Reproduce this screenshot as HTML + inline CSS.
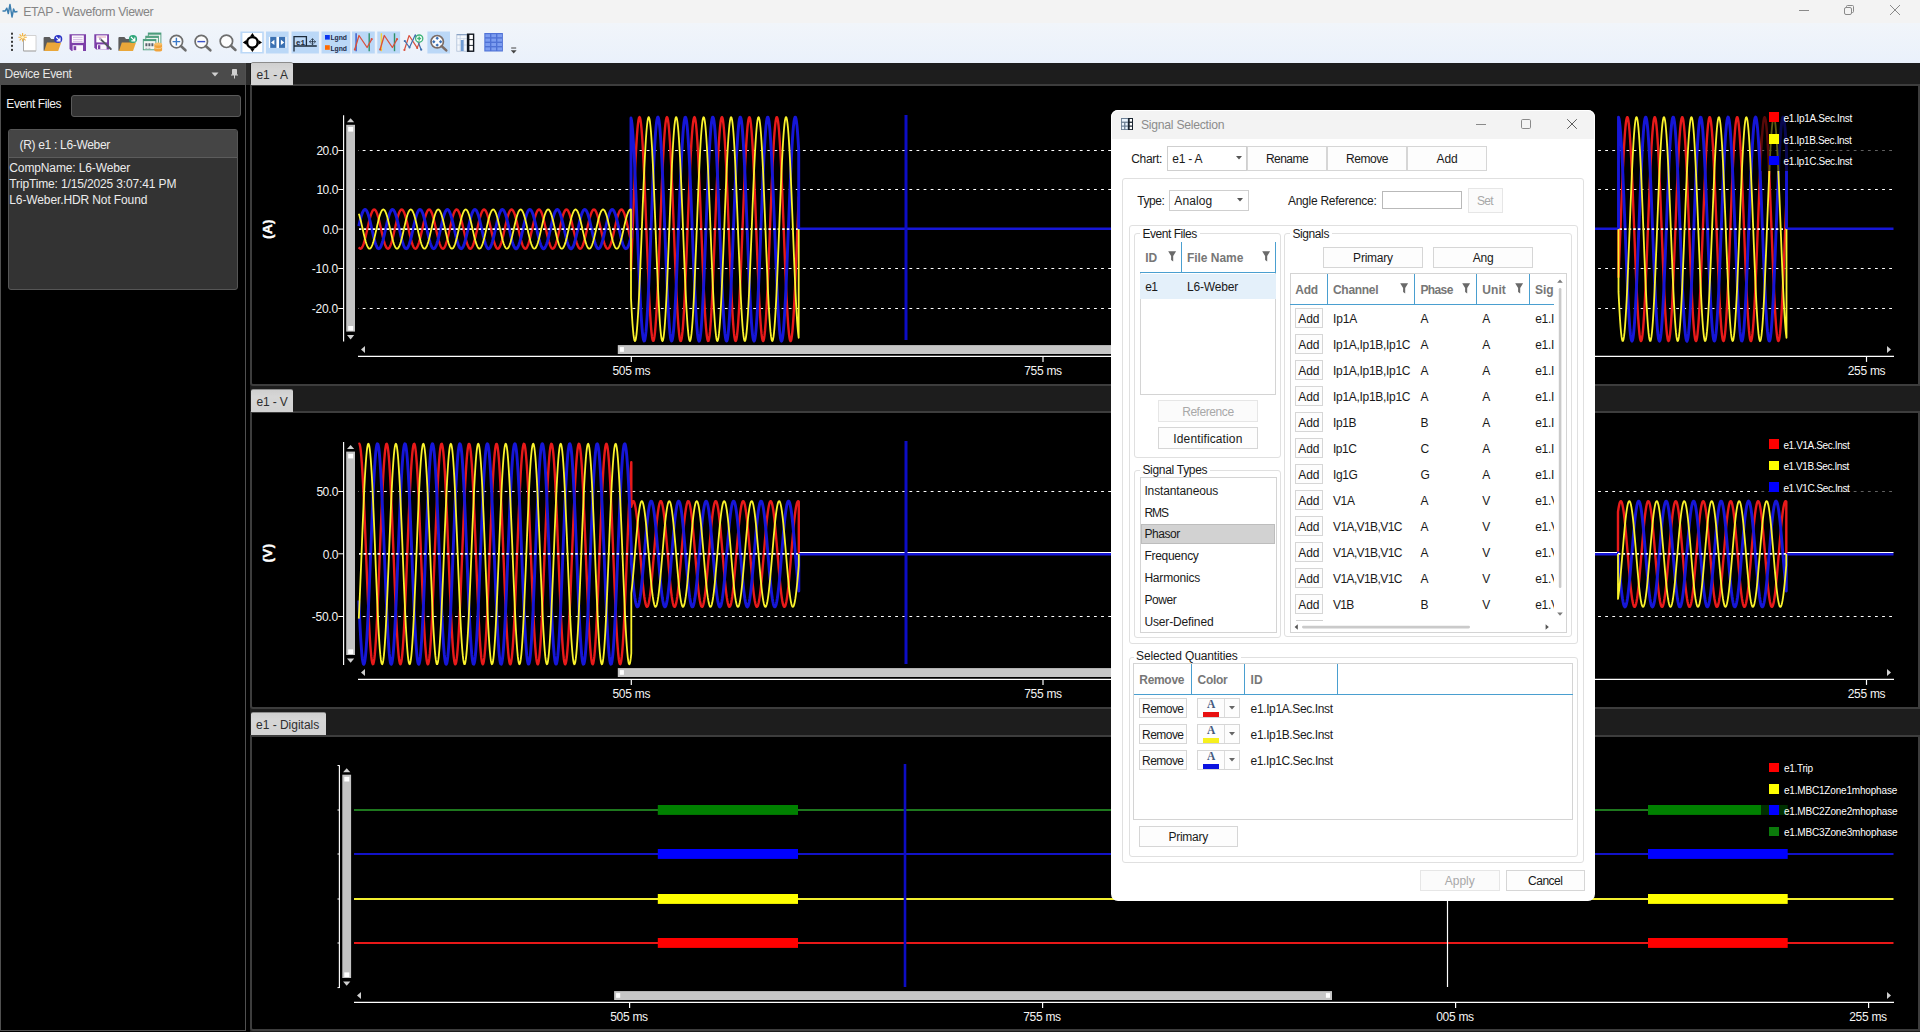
<!DOCTYPE html>
<html><head><meta charset="utf-8"><title>ETAP - Waveform Viewer</title>
<style>
*{box-sizing:border-box;margin:0;padding:0}
html,body{width:1920px;height:1032px;overflow:hidden;background:#000;font-family:"Liberation Sans",sans-serif;font-size:12px;color:#000}
.a{position:absolute}
.t{position:absolute;white-space:nowrap;line-height:1}
svg{position:absolute;overflow:visible}
</style></head>
<body>
<div class="a" style="left:0;top:0;width:1920px;height:23px;background:#f3f3f3"></div>
<div class="a" style="left:0;top:23px;width:1920px;height:40px;background:linear-gradient(#f1f5fa,#eaf1fb)"></div>
<svg style="left:2px;top:3px" width="16" height="16" viewBox="0 0 16 16"><path d="M0.5 8 H3.2 L4.8 5.2 L6.3 10.5 L8 1.5 L10 14 L11.6 6 L12.8 9 L15.5 8.6" fill="none" stroke="#3d7fb0" stroke-width="1.5" stroke-linejoin="round"/></svg>
<div class="t" style="left:23.3px;top:6px;font-size:12.3px;color:#858585;letter-spacing:-0.376px;">ETAP - Waveform Viewer</div>
<svg style="left:1790px;top:0" width="130" height="24" viewBox="0 0 130 24"><g stroke="#8a8a8a" stroke-width="1" fill="none"><path d="M9 10.5 H19"/><rect x="54.5" y="7.5" width="7" height="7" rx="1.5"/><path d="M56.5 7.5 V6.5 Q56.5 5.5 57.5 5.5 H62.5 Q63.5 5.5 63.5 6.5 V11.5 Q63.5 12.5 62.5 12.5 H61.5"/><path d="M100 5 L110 15 M110 5 L100 15"/></g></svg>
<svg style="left:0;top:0" width="540" height="63" viewBox="0 0 540 63"><rect x="11" y="32.7" width="2" height="2" fill="#3a3a3a"/><rect x="11" y="36.7" width="2" height="2" fill="#3a3a3a"/><rect x="11" y="40.8" width="2" height="2" fill="#3a3a3a"/><rect x="11" y="44.8" width="2" height="2" fill="#3a3a3a"/><rect x="11" y="48.9" width="2" height="2" fill="#3a3a3a"/><path d="M23.5 35.5 H36 V51 H23.5 Z" fill="#fff" stroke="#cdcdcd" stroke-width="0.9"/><path d="M23.5 39 V51 H36" fill="none" stroke="#a9a9a9" stroke-width="1"/><path d="M22.6 33 V41.6 M18.4 37.3 H26.8 M19.6 34.3 L25.6 40.3 M25.6 34.3 L19.6 40.3" stroke="#f3b23e" stroke-width="1.1"/><circle cx="22.6" cy="37.3" r="1.4" fill="#fff3c4"/><path d="M43.6 38 q0 -1 1 -1 h5 l1.6 2 h6.4 v11.8 h-14 Z" fill="#5c5c5c"/><path d="M44.2 50.9 L47.0 42.6 H61.2 L58.2 50.9 Z" fill="#eaa73a"/><circle cx="58.2" cy="39" r="4.1" fill="#2b35c6"/><path d="M56.2 37 L59.5 40.3 M60.0 37.4 V40.8 H56.6" stroke="#fff" stroke-width="1.2" fill="none"/><path d="M69.5 34.2 H86 V51 H71.6 L69.5 48.9 Z" fill="#7d3fa8"/><rect x="71.8" y="35.4" width="12" height="7.4" fill="#fff"/><path d="M73 37.3 H82.6 M73 39.4 H82.6 M73 41.3 H82.6" stroke="#c9a9dc" stroke-width="0.8"/><rect x="72.6" y="45.2" width="10.4" height="5.8" fill="#fbf7fd"/><rect x="73.6" y="46.2" width="2.6" height="4" fill="#7d3fa8"/><path d="M94.3 34.2 H109 V49.4 H96.2 L94.3 47.5 Z" fill="#7d3fa8"/><rect x="96.3" y="35.4" width="10.8" height="7" fill="#fff"/><path d="M97.4 37 H106 " stroke="#e39ab0" stroke-width="0.9"/><rect x="97" y="44.4" width="9.6" height="5" fill="#fbf7fd"/><rect x="98" y="45.2" width="2.3" height="3.8" fill="#7d3fa8"/><path d="M100 38.6 L110.8 49" stroke="#55595f" stroke-width="1.9" stroke-linecap="round"/><path d="M99.3 38 L101 39.6" stroke="#c9a9dc" stroke-width="1.6"/><path d="M118.4 38 q0 -1 1 -1 h5 l1.6 2 h6.4 v11.8 h-14 Z" fill="#5c5c5c"/><path d="M119.0 50.9 L121.80000000000001 42.6 H136.0 L133.0 50.9 Z" fill="#eaa73a"/><circle cx="133.0" cy="39" r="4.1" fill="#2fa57a"/><path d="M131.0 37 L134.3 40.3 M134.8 37.4 V40.8 H131.4" stroke="#fff" stroke-width="1.2" fill="none"/><rect x="148.3" y="33" width="12.6" height="10.4" fill="#f4f6f5" stroke="#4b9c7b" stroke-width="0.9"/><rect x="148.3" y="33" width="12.6" height="1.7" fill="#4b9c7b"/><rect x="145.8" y="36.2" width="12.6" height="10.4" fill="#f4f6f5" stroke="#4b9c7b" stroke-width="0.9"/><rect x="145.8" y="36.2" width="12.6" height="1.7" fill="#4b9c7b"/><rect x="143.3" y="39.4" width="12.6" height="10.4" fill="#f4f6f5" stroke="#4b9c7b" stroke-width="0.9"/><rect x="143.3" y="39.4" width="12.6" height="1.7" fill="#4b9c7b"/><path d="M145.4 43.2 h2 v3 h-2 Z M148.4 43.2 h2 v3 h-2 Z M151.4 43.2 h2 v3 h-2 Z" fill="#58606a"/><path d="M145.4 47.8 h2 v1.3 h-2 Z M148.4 47.8 h2 v1.3 h-2 Z" fill="#b9bec4"/><path d="M154.3 44 v6 a3.9 1.6 0 0 0 7.8 0 v-6 Z" fill="#f1a33c"/><ellipse cx="158.2" cy="44" rx="3.9" ry="1.6" fill="#f7bf6a"/><path d="M154.3 47 a3.9 1.6 0 0 0 7.8 0" fill="none" stroke="#fbd9a0" stroke-width="0.7"/><circle cx="176.4" cy="41.6" r="6.2" fill="#fdfdfd" stroke="#6e6e6e" stroke-width="1.7"/><path d="M180.864 46.064 L185.464 50.264" stroke="#6e6e6e" stroke-width="2.6" stroke-linecap="round"/><path d="M172.6 41.6 H180.2 M176.4 37.8 V45.4" stroke="#3b7ac8" stroke-width="1.4"/><circle cx="201.3" cy="41.6" r="6.2" fill="#fdfdfd" stroke="#6e6e6e" stroke-width="1.7"/><path d="M205.764 46.064 L210.364 50.264" stroke="#6e6e6e" stroke-width="2.6" stroke-linecap="round"/><path d="M197.4 41.6 H205.2" stroke="#3b52c8" stroke-width="1.4"/><circle cx="226.4" cy="41.3" r="6.2" fill="#fdfdfd" stroke="#6e6e6e" stroke-width="1.7"/><path d="M230.864 45.763999999999996 L235.464 49.964" stroke="#6e6e6e" stroke-width="2.6" stroke-linecap="round"/><rect x="240.4" y="31.5" width="23.4" height="22" fill="#bbd8f7"/><rect x="242.4" y="33" width="19.8" height="19" fill="#fff"/><circle cx="252.4" cy="42.4" r="5.3" fill="none" stroke="#000" stroke-width="2.4"/><path d="M252.4 32.9 l2.4 3.5 h-4.8 Z M252.4 52 l2.4 -3.5 h-4.8 Z M242.8 42.4 l3.5 -2.4 v4.8 Z M262 42.4 l-3.5 -2.4 v4.8 Z" fill="#000"/><rect x="266" y="31.5" width="22.6" height="22" fill="#bbd8f7"/><rect x="268.9" y="36.9" width="17.6" height="11" fill="#fff"/><rect x="270.2" y="36.9" width="6.2" height="11" fill="#3a70b2"/><rect x="279" y="36.9" width="6.2" height="11" fill="#3a70b2"/><path d="M271 42.4 l3.4 -2.7 v5.4 Z M284.3 42.4 l-3.4 -2.7 v5.4 Z" fill="#fff"/><rect x="291.5" y="31.5" width="27.4" height="22" fill="#bbd8f7"/><path d="M294 51.5 V36.7 H306.4 V46 M294 46 H316.8" fill="none" stroke="#1c2a3a" stroke-width="1.3"/><text x="296" y="44.6" font-family="Liberation Mono" font-size="7.5" font-weight="bold" fill="#1c2a3a">e1</text><path d="M309.6 41.7 H315.4 M312.5 38.8 V44.6 M311.3 39.9 L312.5 38.6 L313.7 39.9 M311.3 43.5 L312.5 44.8 L313.7 43.5 M310.7 40.5 L309.4 41.7 L310.7 42.9 M314.3 40.5 L315.6 41.7 L314.3 42.9" stroke="#1c2a3a" stroke-width="0.8" fill="none"/><rect x="321.5" y="31.5" width="28.8" height="22" fill="#bbd8f7"/><rect x="325" y="35" width="4.8" height="4.6" fill="#0a35f0"/><rect x="325" y="45.2" width="4.8" height="4.6" fill="#ff6a00"/><text x="330.4" y="40.4" font-family="Liberation Sans" font-size="7.6" font-weight="bold" fill="#1b2b4a" textLength="16.6" lengthAdjust="spacingAndGlyphs">Lgnd</text><text x="330.4" y="50.6" font-family="Liberation Sans" font-size="7.6" font-weight="bold" fill="#1b2b4a" textLength="16.6" lengthAdjust="spacingAndGlyphs">Lgnd</text><rect x="352" y="31.5" width="22.8" height="22" fill="#bbd8f7"/><path d="M356.1 33.3 V51.2" stroke="#3558c8" stroke-width="1.4"/><path d="M369.2 33.3 V51.2" stroke="#2f8f6a" stroke-width="1.4"/><path d="M354.7 49.7 L359 35.5 L367.1 47.5 L371.8 39.1" fill="none" stroke="#d9503c" stroke-width="1.3" stroke-linejoin="round"/><circle cx="354.9" cy="49.6" r="1.1" fill="#d9503c"/><circle cx="371.7" cy="39.2" r="1.1" fill="#d9503c"/><rect x="377.3" y="31.5" width="22.8" height="22" fill="#bbd8f7"/><path d="M381.40000000000003 33.3 V51.2" stroke="#f4d33c" stroke-width="1.4"/><path d="M394.5 33.3 V51.2" stroke="#2f8f6a" stroke-width="1.4"/><path d="M380.0 49.7 L384.3 35.5 L392.40000000000003 47.5 L397.1 39.1" fill="none" stroke="#d9503c" stroke-width="1.3" stroke-linejoin="round"/><circle cx="380.2" cy="49.6" r="1.1" fill="#d9503c"/><circle cx="397.0" cy="39.2" r="1.1" fill="#d9503c"/><path d="M404.4 50 L409.1 35.5 L417.2 47.9 L420.4 39.9" fill="none" stroke="#d9503c" stroke-width="1.2" stroke-linejoin="round"/><path d="M404.8 41 L409.5 47.5 L415.3 34.8 L421.2 49.7" fill="none" stroke="#3f6fae" stroke-width="1.2" stroke-linejoin="round"/><circle cx="404.4" cy="50" r="1.1" fill="#d9503c"/><circle cx="404.8" cy="41" r="1.1" fill="#3f6fae"/><circle cx="421.2" cy="49.7" r="1.1" fill="#3f6fae"/><circle cx="409.5" cy="47.5" r="1" fill="#3f6fae"/><circle cx="417.2" cy="47.9" r="1" fill="#d9503c"/><circle cx="419.2" cy="38.6" r="3.6" fill="#fff" stroke="#3fb47a" stroke-width="1.3"/><path d="M417.2 38.6 H421.2 M419.2 36.6 V40.6" stroke="#3fb47a" stroke-width="1.5"/><rect x="427.4" y="31.5" width="22.6" height="22" fill="#bbd8f7"/><circle cx="437.2" cy="41.7" r="6.2" fill="#fdfdfd" stroke="#7b6c66" stroke-width="1.7"/><path d="M441.664 46.164 L446.264 50.364000000000004" stroke="#7b6c66" stroke-width="2.6" stroke-linecap="round"/><path d="M437.2 36.599999999999994 l1.7 1.7 l-1.7 1.7 l-1.7 -1.7 Z" fill="#3a6fb5"/><path d="M437.2 43.4 l1.7 1.7 l-1.7 1.7 l-1.7 -1.7 Z" fill="#3a6fb5"/><path d="M433.8 40.0 l1.7 1.7 l-1.7 1.7 l-1.7 -1.7 Z" fill="#3a6fb5"/><path d="M440.6 40.0 l1.7 1.7 l-1.7 1.7 l-1.7 -1.7 Z" fill="#3a6fb5"/><rect x="456.8" y="34.4" width="10.4" height="16.8" fill="#f3f7fc" stroke="#aebfd6" stroke-width="0.8"/><path d="M456.8 38.6 H467 M456.8 45 H467 M460.2 34.4 V51 M463.8 38.6 V51" stroke="#c5d3e6" stroke-width="0.8"/><rect x="460.8" y="40" width="2.8" height="11" fill="#6f9bd2"/><rect x="456.8" y="34" width="10.4" height="1.3" fill="#8aa3c4"/><rect x="467.6" y="34.2" width="6" height="17" fill="#fff" stroke="#10161e" stroke-width="1.4"/><rect x="467" y="34" width="2.4" height="17.6" fill="#10161e"/><path d="M469 39.6 H474 M469 45.4 H474" stroke="#10161e" stroke-width="0.9"/><rect x="484.3" y="33" width="18.6" height="18.5" fill="#4f72d6"/><rect x="485.4" y="34.2" width="4.6" height="3" fill="#7d9df0"/><rect x="491.4" y="34.2" width="4.6" height="3" fill="#7d9df0"/><rect x="497.4" y="34.2" width="4.6" height="3" fill="#7d9df0"/><rect x="485.4" y="38.6" width="4.6" height="3" fill="#7d9df0"/><rect x="491.4" y="38.6" width="4.6" height="3" fill="#7d9df0"/><rect x="497.4" y="38.6" width="4.6" height="3" fill="#7d9df0"/><rect x="485.4" y="43.0" width="4.6" height="3" fill="#7d9df0"/><rect x="491.4" y="43.0" width="4.6" height="3" fill="#7d9df0"/><rect x="497.4" y="43.0" width="4.6" height="3" fill="#7d9df0"/><rect x="485.4" y="47.400000000000006" width="4.6" height="3" fill="#7d9df0"/><rect x="491.4" y="47.400000000000006" width="4.6" height="3" fill="#7d9df0"/><rect x="497.4" y="47.400000000000006" width="4.6" height="3" fill="#7d9df0"/><path d="M511.2 48 H516.2" stroke="#444" stroke-width="1"/><path d="M510.8 50.3 H516.6 L513.7 53.6 Z" fill="#444"/></svg>
<div class="a" style="left:0;top:63px;width:1920px;height:969px;background:#000"></div>
<div class="a" style="left:0;top:63px;width:246px;height:968px;border:1px solid #505050;border-top:none;background:#000"></div>
<div class="a" style="left:0;top:63px;width:245px;height:21.5px;background:#4b4b4b"></div>
<div class="a" style="left:246px;top:63px;width:4.5px;height:22px;background:#2a2a2a"></div>
<div class="t" style="left:4.6px;top:68px;font-size:12px;color:#e6e6e6;letter-spacing:-0.309px;">Device Event</div>
<svg style="left:210px;top:68px" width="32" height="14" viewBox="0 0 32 14"><path d="M1.5 4.5 H8.5 L5 8.5 Z" fill="#d0d0d0"/><path d="M22.5 1.5 H26.5 V6.5 H22.5 Z M21 7 H28 M24.5 7 V10.5" fill="#d0d0d0" stroke="#d0d0d0" stroke-width="1"/></svg>
<div class="t" style="left:6.3px;top:98px;font-size:12px;color:#f0f0f0;letter-spacing:-0.414px;">Event Files</div>
<div class="a" style="left:71px;top:95px;width:169.5px;height:21.5px;background:#333;border:1px solid #5a5a5a;border-radius:3px"></div>
<div class="a" style="left:8px;top:129px;width:230px;height:160.5px;background:#333;border:1px solid #565656;border-radius:3px"></div>
<div class="a" style="left:9px;top:130px;width:228px;height:28px;background:#454545;border-bottom:1px solid #5c5c5c;border-radius:2px 2px 0 0"></div>
<div class="t" style="left:19.5px;top:139px;font-size:12px;color:#ececec;letter-spacing:-0.312px;">(R) e1 : L6-Weber</div>
<div class="t" style="left:9.3px;top:162px;font-size:12px;color:#ececec;letter-spacing:-0.126px;">CompName: L6-Weber</div>
<div class="t" style="left:9.3px;top:178px;font-size:12px;color:#ececec;letter-spacing:-0.140px;">TripTime: 1/15/2025 3:07:41 PM</div>
<div class="t" style="left:9.3px;top:194px;font-size:12px;color:#ececec;letter-spacing:-0.114px;">L6-Weber.HDR Not Found</div>
<div class="a" style="left:250px;top:63px;width:1670px;height:969px;background:#1d1d1d"></div>
<div class="a" style="left:250px;top:84px;width:1670px;height:302px;border:2px solid #3d3d3d;background:#000;border-radius:0 0 0 3px"></div>
<div class="a" style="left:250px;top:411px;width:1670px;height:297.5px;border:2px solid #3d3d3d;background:#000;border-radius:0 0 0 3px"></div>
<div class="a" style="left:250px;top:734.5px;width:1670px;height:296.0px;border:2px solid #3d3d3d;background:#000;border-radius:0 0 0 3px"></div>
<div class="a" style="left:251px;top:61.5px;width:42px;height:23.5px;background:linear-gradient(#cfcfcf,#d6d6d6 30%,#d2d2d2);border-top:1px solid #8c8c8c;border-radius:2px 2px 0 0"></div><div class="t" style="left:256.4px;top:69px;font-size:12px;color:#2e2e2e;letter-spacing:0.040px;">e1 - A</div>
<div class="a" style="left:251px;top:388.7px;width:42px;height:23.3px;background:linear-gradient(#cfcfcf,#d6d6d6 30%,#d2d2d2);border-top:1px solid #8c8c8c;border-radius:2px 2px 0 0"></div><div class="t" style="left:256.4px;top:396px;font-size:12px;color:#2e2e2e;letter-spacing:-0.119px;">e1 - V</div>
<div class="a" style="left:251px;top:711.7px;width:74.5px;height:23.5px;background:linear-gradient(#cfcfcf,#d6d6d6 30%,#d2d2d2);border-top:1px solid #8c8c8c;border-radius:2px 2px 0 0"></div><div class="t" style="left:256px;top:719px;font-size:12px;color:#2e2e2e;letter-spacing:-0.012px;">e1 - Digitals</div>
<svg style="left:0;top:0" width="1920" height="1032" viewBox="0 0 1920 1032"><path d="M358 150.5 H1893.5" stroke="#fff" stroke-width="1.05" stroke-dasharray="2.8 4.3" stroke-dashoffset="2.4" fill="none"/>
<path d="M358 189.5 H1893.5" stroke="#fff" stroke-width="1.05" stroke-dasharray="2.8 4.3" stroke-dashoffset="2.4" fill="none"/>
<path d="M358 268.5 H1893.5" stroke="#fff" stroke-width="1.05" stroke-dasharray="2.8 4.3" stroke-dashoffset="2.4" fill="none"/>
<path d="M358 308.5 H1893.5" stroke="#fff" stroke-width="1.05" stroke-dasharray="2.8 4.3" stroke-dashoffset="2.4" fill="none"/>
<path d="M358.8 247.3 L359.3 248.0 L359.8 248.5 L360.3 248.7 L360.8 248.6 L361.3 248.3 L361.8 247.8 L362.3 247.0 L362.8 246.0 L363.3 244.7 L363.8 243.3 L364.3 241.6 L364.8 239.8 L365.3 237.9 L365.8 235.8 L366.3 233.7 L366.8 231.5 L367.3 229.2 L367.8 227.0 L368.3 224.8 L368.8 222.6 L369.3 220.6 L369.8 218.6 L370.3 216.8 L370.8 215.1 L371.3 213.7 L371.8 212.4 L372.3 211.3 L372.8 210.5 L373.3 209.9 L373.8 209.6 L374.3 209.5 L374.8 209.7 L375.3 210.1 L375.8 210.8 L376.3 211.7 L376.8 212.9 L377.3 214.2 L377.8 215.8 L378.3 217.5 L378.8 219.4 L379.3 221.4 L379.8 223.5 L380.3 225.7 L380.8 227.9 L381.3 230.1 L381.8 232.4 L382.3 234.6 L382.8 236.7 L383.3 238.7 L383.8 240.6 L384.3 242.3 L384.8 243.9 L385.3 245.2 L385.8 246.4 L386.3 247.3 L386.8 248.0 L387.3 248.5 L387.8 248.7 L388.3 248.6 L388.8 248.3 L389.3 247.8 L389.8 246.9 L390.3 245.9 L390.8 244.6 L391.3 243.2 L391.8 241.5 L392.3 239.7 L392.8 237.8 L393.3 235.7 L393.8 233.5 L394.3 231.3 L394.8 229.1 L395.3 226.9 L395.8 224.7 L396.3 222.5 L396.8 220.4 L397.3 218.5 L397.8 216.7 L398.3 215.0 L398.8 213.6 L399.3 212.3 L399.8 211.3 L400.3 210.5 L400.8 209.9 L401.3 209.6 L401.8 209.5 L402.3 209.7 L402.8 210.2 L403.3 210.9 L403.8 211.8 L404.3 212.9 L404.8 214.3 L405.3 215.9 L405.8 217.6 L406.3 219.5 L406.8 221.5 L407.3 223.6 L407.8 225.8 L408.3 228.1 L408.8 230.3 L409.3 232.5 L409.8 234.7 L410.3 236.8 L410.8 238.8 L411.3 240.7 L411.8 242.4 L412.3 244.0 L412.8 245.3 L413.3 246.5 L413.8 247.4 L414.3 248.1 L414.8 248.5 L415.3 248.7 L415.8 248.6 L416.3 248.3 L416.8 247.7 L417.3 246.9 L417.8 245.8 L418.3 244.5 L418.8 243.1 L419.3 241.4 L419.8 239.6 L420.3 237.6 L420.8 235.6 L421.3 233.4 L421.8 231.2 L422.3 229.0 L422.8 226.7 L423.3 224.5 L423.8 222.4 L424.3 220.3 L424.8 218.4 L425.3 216.6 L425.8 214.9 L426.3 213.5 L426.8 212.2 L427.3 211.2 L427.8 210.4 L428.3 209.9 L428.8 209.6 L429.3 209.5 L429.8 209.7 L430.3 210.2 L430.8 210.9 L431.3 211.9 L431.8 213.0 L432.3 214.4 L432.8 216.0 L433.3 217.7 L433.8 219.6 L434.3 221.7 L434.8 223.8 L435.3 226.0 L435.8 228.2 L436.3 230.4 L436.8 232.7 L437.3 234.8 L437.8 236.9 L438.3 238.9 L438.8 240.8 L439.3 242.5 L439.8 244.1 L440.3 245.4 L440.8 246.5 L441.3 247.5 L441.8 248.1 L442.3 248.5 L442.8 248.7 L443.3 248.6 L443.8 248.3 L444.3 247.7 L444.8 246.8 L445.3 245.7 L445.8 244.5 L446.3 243.0 L446.8 241.3 L447.3 239.5 L447.8 237.5 L448.3 235.4 L448.8 233.3 L449.3 231.0 L449.8 228.8 L450.3 226.6 L450.8 224.4 L451.3 222.2 L451.8 220.2 L452.3 218.2 L452.8 216.5 L453.3 214.8 L453.8 213.4 L454.3 212.2 L454.8 211.1 L455.3 210.4 L455.8 209.8 L456.3 209.5 L456.8 209.5 L457.3 209.8 L457.8 210.2 L458.3 211.0 L458.8 211.9 L459.3 213.1 L459.8 214.5 L460.3 216.1 L460.8 217.9 L461.3 219.8 L461.8 221.8 L462.3 223.9 L462.8 226.1 L463.3 228.3 L463.8 230.6 L464.3 232.8 L464.8 235.0 L465.3 237.1 L465.8 239.1 L466.3 240.9 L466.8 242.6 L467.3 244.2 L467.8 245.5 L468.3 246.6 L468.8 247.5 L469.3 248.2 L469.8 248.6 L470.3 248.7 L470.8 248.6 L471.3 248.2 L471.8 247.6 L472.3 246.8 L472.8 245.7 L473.3 244.4 L473.8 242.9 L474.3 241.2 L474.8 239.3 L475.3 237.4 L475.8 235.3 L476.3 233.1 L476.8 230.9 L477.3 228.7 L477.8 226.4 L478.3 224.2 L478.8 222.1 L479.3 220.0 L479.8 218.1 L480.3 216.3 L480.8 214.7 L481.3 213.3 L481.8 212.1 L482.3 211.1 L482.8 210.3 L483.3 209.8 L483.8 209.5 L484.3 209.5 L484.8 209.8 L485.3 210.3 L485.8 211.0 L486.3 212.0 L486.8 213.2 L487.3 214.6 L487.8 216.2 L488.3 218.0 L488.8 219.9 L489.3 221.9 L489.8 224.1 L490.3 226.3 L490.8 228.5 L491.3 230.7 L491.8 233.0 L492.3 235.1 L492.8 237.2 L493.3 239.2 L493.8 241.0 L494.3 242.7 L494.8 244.3 L495.3 245.6 L495.8 246.7 L496.3 247.6 L496.8 248.2 L497.3 248.6 L497.8 248.7 L498.3 248.6 L498.8 248.2 L499.3 247.6 L499.8 246.7 L500.3 245.6 L500.8 244.3 L501.3 242.8 L501.8 241.1 L502.3 239.2 L502.8 237.2 L503.3 235.1 L503.8 233.0 L504.3 230.7 L504.8 228.5 L505.3 226.3 L505.8 224.1 L506.3 222.0 L506.8 219.9 L507.3 218.0 L507.8 216.2 L508.3 214.6 L508.8 213.2 L509.3 212.0 L509.8 211.0 L510.3 210.3 L510.8 209.8 L511.3 209.5 L511.8 209.5 L512.3 209.8 L512.8 210.3 L513.3 211.1 L513.8 212.1 L514.3 213.3 L514.8 214.7 L515.3 216.3 L515.8 218.1 L516.3 220.0 L516.8 222.1 L517.3 224.2 L517.8 226.4 L518.3 228.6 L518.8 230.9 L519.3 233.1 L519.8 235.3 L520.3 237.3 L520.8 239.3 L521.3 241.2 L521.8 242.8 L522.3 244.4 L522.8 245.7 L523.3 246.7 L523.8 247.6 L524.3 248.2 L524.8 248.6 L525.3 248.7 L525.8 248.6 L526.3 248.2 L526.8 247.5 L527.3 246.6 L527.8 245.5 L528.3 244.2 L528.8 242.6 L529.3 240.9 L529.8 239.1 L530.3 237.1 L530.8 235.0 L531.3 232.8 L531.8 230.6 L532.3 228.4 L532.8 226.1 L533.3 223.9 L533.8 221.8 L534.3 219.8 L534.8 217.9 L535.3 216.1 L535.8 214.5 L536.3 213.1 L536.8 211.9 L537.3 211.0 L537.8 210.2 L538.3 209.8 L538.8 209.5 L539.3 209.5 L539.8 209.8 L540.3 210.4 L540.8 211.1 L541.3 212.1 L541.8 213.4 L542.3 214.8 L542.8 216.4 L543.3 218.2 L543.8 220.2 L544.3 222.2 L544.8 224.4 L545.3 226.6 L545.8 228.8 L546.3 231.0 L546.8 233.2 L547.3 235.4 L547.8 237.5 L548.3 239.4 L548.8 241.3 L549.3 243.0 L549.8 244.4 L550.3 245.7 L550.8 246.8 L551.3 247.7 L551.8 248.3 L552.3 248.6 L552.8 248.7 L553.3 248.5 L553.8 248.1 L554.3 247.5 L554.8 246.6 L555.3 245.4 L555.8 244.1 L556.3 242.5 L556.8 240.8 L557.3 239.0 L557.8 237.0 L558.3 234.9 L558.8 232.7 L559.3 230.5 L559.8 228.2 L560.3 226.0 L560.8 223.8 L561.3 221.7 L561.8 219.7 L562.3 217.8 L562.8 216.0 L563.3 214.4 L563.8 213.0 L564.3 211.9 L564.8 210.9 L565.3 210.2 L565.8 209.7 L566.3 209.5 L566.8 209.6 L567.3 209.9 L567.8 210.4 L568.3 211.2 L568.8 212.2 L569.3 213.5 L569.8 214.9 L570.3 216.6 L570.8 218.4 L571.3 220.3 L571.8 222.4 L572.3 224.5 L572.8 226.7 L573.3 228.9 L573.8 231.2 L574.3 233.4 L574.8 235.5 L575.3 237.6 L575.8 239.6 L576.3 241.4 L576.8 243.1 L577.3 244.5 L577.8 245.8 L578.3 246.9 L578.8 247.7 L579.3 248.3 L579.8 248.6 L580.3 248.7 L580.8 248.5 L581.3 248.1 L581.8 247.4 L582.3 246.5 L582.8 245.3 L583.3 244.0 L583.8 242.4 L584.3 240.7 L584.8 238.8 L585.3 236.8 L585.8 234.7 L586.3 232.5 L586.8 230.3 L587.3 228.1 L587.8 225.8 L588.3 223.7 L588.8 221.5 L589.3 219.5 L589.8 217.6 L590.3 215.9 L590.8 214.3 L591.3 213.0 L591.8 211.8 L592.3 210.9 L592.8 210.2 L593.3 209.7 L593.8 209.5 L594.3 209.6 L594.8 209.9 L595.3 210.4 L595.8 211.3 L596.3 212.3 L596.8 213.6 L597.3 215.0 L597.8 216.7 L598.3 218.5 L598.8 220.4 L599.3 222.5 L599.8 224.6 L600.3 226.9 L600.8 229.1 L601.3 231.3 L601.8 233.5 L602.3 235.7 L602.8 237.7 L603.3 239.7 L603.8 241.5 L604.3 243.2 L604.8 244.6 L605.3 245.9 L605.8 246.9 L606.3 247.7 L606.8 248.3 L607.3 248.6 L607.8 248.7 L608.3 248.5 L608.8 248.0 L609.3 247.4 L609.8 246.4 L610.3 245.3 L610.8 243.9 L611.3 242.3 L611.8 240.6 L612.3 238.7 L612.8 236.7 L613.3 234.6 L613.8 232.4 L614.3 230.2 L614.8 227.9 L615.3 225.7 L615.8 223.5 L616.3 221.4 L616.8 219.4 L617.3 217.5 L617.8 215.8 L618.3 214.2 L618.8 212.9 L619.3 211.7 L619.8 210.8 L620.3 210.1 L620.8 209.7 L621.3 209.5 L621.8 209.6 L622.3 209.9 L622.8 210.5 L623.3 211.3 L623.8 212.4 L624.3 213.6 L624.8 215.1 L625.3 216.8 L625.8 218.6 L626.3 220.6 L626.8 222.6 L627.3 224.8 L627.8 227.0 L628.3 229.2 L628.8 231.5 L629.3 233.7 L629.8 235.8 L630.3 237.9 L630.8 239.8 L631.0 240.6 L631.0 270.0 L631.5 257.8 L632.0 245.3 L632.5 232.5 L633.0 219.7 L633.5 207.0 L634.0 194.7 L634.5 182.7 L635.0 171.4 L635.5 160.8 L636.0 151.1 L636.5 142.5 L637.0 134.9 L637.5 128.6 L638.0 123.6 L638.5 120.0 L639.0 117.8 L639.5 117.1 L640.0 117.8 L640.5 120.0 L641.0 123.6 L641.5 128.6 L642.0 134.9 L642.5 142.5 L643.0 151.1 L643.5 160.8 L644.0 171.4 L644.5 182.7 L645.0 194.7 L645.5 207.0 L646.0 219.7 L646.5 232.5 L647.0 245.3 L647.5 257.8 L648.0 270.0 L648.5 281.6 L649.0 292.6 L649.5 302.7 L650.0 311.8 L650.5 319.9 L651.0 326.8 L651.5 332.4 L652.0 336.7 L652.5 339.5 L653.0 340.9 L653.5 340.9 L654.0 339.4 L654.5 336.4 L655.0 332.1 L655.5 326.4 L656.0 319.4 L656.5 311.3 L657.0 302.0 L657.5 291.9 L658.0 280.9 L658.5 269.2 L659.0 257.0 L659.5 244.4 L660.0 231.7 L660.5 218.9 L661.0 206.2 L661.5 193.8 L662.0 181.9 L662.5 170.7 L663.0 160.1 L663.5 150.5 L664.0 141.9 L664.5 134.5 L665.0 128.2 L665.5 123.3 L666.0 119.8 L666.5 117.7 L667.0 117.1 L667.5 117.9 L668.0 120.2 L668.5 123.9 L669.0 129.0 L669.5 135.4 L670.0 143.0 L670.5 151.7 L671.0 161.5 L671.5 172.1 L672.0 183.5 L672.5 195.5 L673.0 207.9 L673.5 220.6 L674.0 233.4 L674.5 246.1 L675.0 258.6 L675.5 270.8 L676.0 282.4 L676.5 293.3 L677.0 303.3 L677.5 312.4 L678.0 320.4 L678.5 327.2 L679.0 332.7 L679.5 336.9 L680.0 339.7 L680.5 341.0 L681.0 340.8 L681.5 339.2 L682.0 336.2 L682.5 331.7 L683.0 326.0 L683.5 318.9 L684.0 310.7 L684.5 301.4 L685.0 291.2 L685.5 280.1 L686.0 268.4 L686.5 256.2 L687.0 243.6 L687.5 230.8 L688.0 218.0 L688.5 205.4 L689.0 193.0 L689.5 181.2 L690.0 169.9 L690.5 159.5 L691.0 149.9 L691.5 141.4 L692.0 134.0 L692.5 127.9 L693.0 123.1 L693.5 119.6 L694.0 117.7 L694.5 117.1 L695.0 118.0 L695.5 120.4 L696.0 124.2 L696.5 129.4 L697.0 135.8 L697.5 143.5 L698.0 152.3 L698.5 162.2 L699.0 172.8 L699.5 184.3 L700.0 196.3 L700.5 208.7 L701.0 221.4 L701.5 234.2 L702.0 246.9 L702.5 259.4 L703.0 271.5 L703.5 283.1 L704.0 293.9 L704.5 303.9 L705.0 313.0 L705.5 320.9 L706.0 327.6 L706.5 333.1 L707.0 337.1 L707.5 339.8 L708.0 341.0 L708.5 340.8 L709.0 339.1 L709.5 335.9 L710.0 331.4 L710.5 325.5 L711.0 318.4 L711.5 310.1 L712.0 300.7 L712.5 290.5 L713.0 279.4 L713.5 267.6 L714.0 255.4 L714.5 242.8 L715.0 230.0 L715.5 217.2 L716.0 204.6 L716.5 192.2 L717.0 180.4 L717.5 169.2 L718.0 158.8 L718.5 149.3 L719.0 140.9 L719.5 133.6 L720.0 127.5 L720.5 122.8 L721.0 119.5 L721.5 117.6 L722.0 117.1 L722.5 118.1 L723.0 120.6 L723.5 124.5 L724.0 129.8 L724.5 136.3 L725.0 144.1 L725.5 153.0 L726.0 162.8 L726.5 173.6 L727.0 185.0 L727.5 197.1 L728.0 209.5 L728.5 222.2 L729.0 235.0 L729.5 247.8 L730.0 260.3 L730.5 272.3 L731.0 283.8 L731.5 294.6 L732.0 304.6 L732.5 313.5 L733.0 321.4 L733.5 328.0 L734.0 333.4 L734.5 337.3 L735.0 339.9 L735.5 341.0 L736.0 340.7 L736.5 338.9 L737.0 335.7 L737.5 331.1 L738.0 325.1 L738.5 317.9 L739.0 309.5 L739.5 300.1 L740.0 289.7 L740.5 278.6 L741.0 266.8 L741.5 254.5 L742.0 241.9 L742.5 229.1 L743.0 216.3 L743.5 203.7 L744.0 191.4 L744.5 179.7 L745.0 168.5 L745.5 158.2 L746.0 148.7 L746.5 140.4 L747.0 133.1 L747.5 127.2 L748.0 122.5 L748.5 119.3 L749.0 117.5 L749.5 117.2 L750.0 118.3 L750.5 120.8 L751.0 124.8 L751.5 130.2 L752.0 136.8 L752.5 144.6 L753.0 153.6 L753.5 163.5 L754.0 174.3 L754.5 185.8 L755.0 197.9 L755.5 210.4 L756.0 223.1 L756.5 235.9 L757.0 248.6 L757.5 261.1 L758.0 273.1 L758.5 284.6 L759.0 295.3 L759.5 305.2 L760.0 314.1 L760.5 321.8 L761.0 328.4 L761.5 333.7 L762.0 337.6 L762.5 340.0 L763.0 341.1 L763.5 340.6 L764.0 338.7 L764.5 335.4 L765.0 330.7 L765.5 324.7 L766.0 317.4 L766.5 308.9 L767.0 299.4 L767.5 289.0 L768.0 277.8 L768.5 266.0 L769.0 253.7 L769.5 241.1 L770.0 228.3 L770.5 215.5 L771.0 202.9 L771.5 190.7 L772.0 178.9 L772.5 167.8 L773.0 157.5 L773.5 148.1 L774.0 139.8 L774.5 132.7 L775.0 126.8 L775.5 122.3 L776.0 119.1 L776.5 117.4 L777.0 117.2 L777.5 118.4 L778.0 121.1 L778.5 125.1 L779.0 130.6 L779.5 137.3 L780.0 145.2 L780.5 154.2 L781.0 164.2 L781.5 175.0 L782.0 186.6 L782.5 198.7 L783.0 211.2 L783.5 223.9 L784.0 236.7 L784.5 249.4 L785.0 261.9 L785.5 273.9 L786.0 285.3 L786.5 296.0 L787.0 305.8 L787.5 314.6 L788.0 322.3 L788.5 328.8 L789.0 334.0 L789.5 337.8 L790.0 340.2 L790.5 341.1 L791.0 340.6 L791.5 338.6 L792.0 335.1 L792.5 330.3 L793.0 324.2 L793.5 316.8 L794.0 308.3 L794.5 298.8 L795.0 288.3 L795.5 277.1 L796.0 265.2 L796.5 252.9 L797.0 240.2 L797.5 227.4 L798.0 214.7 L798.5 202.1 L798.7 197.1 L798.7 229.1 M1618.5 229.1 L1618.5 277.0 L1619.0 265.2 L1619.5 252.8 L1620.0 240.2 L1620.5 227.4 L1621.0 214.6 L1621.5 202.0 L1622.0 189.8 L1622.5 178.1 L1623.0 167.1 L1623.5 156.8 L1624.0 147.5 L1624.5 139.3 L1625.0 132.2 L1625.5 126.5 L1626.0 122.0 L1626.5 119.0 L1627.0 117.4 L1627.5 117.2 L1628.0 118.5 L1628.5 121.3 L1629.0 125.5 L1629.5 131.0 L1630.0 137.8 L1630.5 145.8 L1631.0 154.9 L1631.5 164.9 L1632.0 175.8 L1632.5 187.4 L1633.0 199.6 L1633.5 212.1 L1634.0 224.8 L1634.5 237.6 L1635.0 250.3 L1635.5 262.7 L1636.0 274.7 L1636.5 286.1 L1637.0 296.7 L1637.5 306.5 L1638.0 315.2 L1638.5 322.8 L1639.0 329.2 L1639.5 334.3 L1640.0 338.0 L1640.5 340.3 L1641.0 341.1 L1641.5 340.5 L1642.0 338.4 L1642.5 334.9 L1643.0 330.0 L1643.5 323.7 L1644.0 316.3 L1644.5 307.7 L1645.0 298.1 L1645.5 287.6 L1646.0 276.3 L1646.5 264.4 L1647.0 252.0 L1647.5 239.3 L1648.0 226.5 L1648.5 213.8 L1649.0 201.2 L1649.5 189.0 L1650.0 177.3 L1650.5 166.4 L1651.0 156.2 L1651.5 146.9 L1652.0 138.8 L1652.5 131.8 L1653.0 126.1 L1653.5 121.8 L1654.0 118.8 L1654.5 117.3 L1655.0 117.3 L1655.5 118.7 L1656.0 121.5 L1656.5 125.8 L1657.0 131.4 L1657.5 138.3 L1658.0 146.4 L1658.5 155.5 L1659.0 165.6 L1659.5 176.6 L1660.0 188.2 L1660.5 200.4 L1661.0 212.9 L1661.5 225.7 L1662.0 238.5 L1662.5 251.1 L1663.0 263.5 L1663.5 275.5 L1664.0 286.8 L1664.5 297.4 L1665.0 307.1 L1665.5 315.7 L1666.0 323.3 L1666.5 329.6 L1667.0 334.6 L1667.5 338.2 L1668.0 340.4 L1668.5 341.1 L1669.0 340.4 L1669.5 338.2 L1670.0 334.6 L1670.5 329.6 L1671.0 323.3 L1671.5 315.8 L1672.0 307.1 L1672.5 297.4 L1673.0 286.8 L1673.5 275.5 L1674.0 263.6 L1674.5 251.2 L1675.0 238.5 L1675.5 225.7 L1676.0 212.9 L1676.5 200.4 L1677.0 188.2 L1677.5 176.6 L1678.0 165.7 L1678.5 155.5 L1679.0 146.4 L1679.5 138.3 L1680.0 131.4 L1680.5 125.8 L1681.0 121.5 L1681.5 118.7 L1682.0 117.3 L1682.5 117.3 L1683.0 118.8 L1683.5 121.8 L1684.0 126.1 L1684.5 131.8 L1685.0 138.8 L1685.5 146.9 L1686.0 156.2 L1686.5 166.3 L1687.0 177.3 L1687.5 189.0 L1688.0 201.2 L1688.5 213.8 L1689.0 226.5 L1689.5 239.3 L1690.0 252.0 L1690.5 264.3 L1691.0 276.2 L1691.5 287.5 L1692.0 298.1 L1692.5 307.7 L1693.0 316.3 L1693.5 323.7 L1694.0 329.9 L1694.5 334.8 L1695.0 338.4 L1695.5 340.5 L1696.0 341.1 L1696.5 340.3 L1697.0 338.0 L1697.5 334.3 L1698.0 329.2 L1698.5 322.8 L1699.0 315.2 L1699.5 306.5 L1700.0 296.7 L1700.5 286.1 L1701.0 274.7 L1701.5 262.8 L1702.0 250.3 L1702.5 237.7 L1703.0 224.9 L1703.5 212.1 L1704.0 199.6 L1704.5 187.4 L1705.0 175.9 L1705.5 165.0 L1706.0 154.9 L1706.5 145.8 L1707.0 137.8 L1707.5 131.0 L1708.0 125.5 L1708.5 121.3 L1709.0 118.5 L1709.5 117.2 L1710.0 117.4 L1710.5 119.0 L1711.0 122.0 L1711.5 126.5 L1712.0 132.2 L1712.5 139.3 L1713.0 147.5 L1713.5 156.8 L1714.0 167.0 L1714.5 178.1 L1715.0 189.8 L1715.5 202.0 L1716.0 214.6 L1716.5 227.4 L1717.0 240.2 L1717.5 252.8 L1718.0 265.1 L1718.5 277.0 L1719.0 288.2 L1719.5 298.7 L1720.0 308.3 L1720.5 316.8 L1721.0 324.2 L1721.5 330.3 L1722.0 335.1 L1722.5 338.6 L1723.0 340.5 L1723.5 341.1 L1724.0 340.2 L1724.5 337.8 L1725.0 334.0 L1725.5 328.8 L1726.0 322.4 L1726.5 314.7 L1727.0 305.9 L1727.5 296.1 L1728.0 285.4 L1728.5 274.0 L1729.0 261.9 L1729.5 249.5 L1730.0 236.8 L1730.5 224.0 L1731.0 211.3 L1731.5 198.8 L1732.0 186.7 L1732.5 175.1 L1733.0 164.3 L1733.5 154.3 L1734.0 145.2 L1734.5 137.3 L1735.0 130.6 L1735.5 125.2 L1736.0 121.1 L1736.5 118.4 L1737.0 117.2 L1737.5 117.4 L1738.0 119.1 L1738.5 122.3 L1739.0 126.8 L1739.5 132.7 L1740.0 139.8 L1740.5 148.1 L1741.0 157.4 L1741.5 167.7 L1742.0 178.8 L1742.5 190.6 L1743.0 202.8 L1743.5 215.4 L1744.0 228.2 L1744.5 241.0 L1745.0 253.6 L1745.5 265.9 L1746.0 277.8 L1746.5 289.0 L1747.0 299.4 L1747.5 308.9 L1748.0 317.3 L1748.5 324.6 L1749.0 330.7 L1749.5 335.4 L1750.0 338.7 L1750.5 340.6 L1751.0 341.1 L1751.5 340.1 L1752.0 337.6 L1752.5 333.7 L1753.0 328.4 L1753.5 321.9 L1754.0 314.1 L1754.5 305.2 L1755.0 295.4 L1755.5 284.6 L1756.0 273.2 L1756.5 261.1 L1757.0 248.7 L1757.5 236.0 L1758.0 223.2 L1758.5 210.4 L1759.0 198.0 L1759.5 185.9 L1760.0 174.4 L1760.5 163.6 L1761.0 153.6 L1761.5 144.7 L1762.0 136.8 L1762.5 130.2 L1763.0 124.8 L1763.5 120.9 L1764.0 118.3 L1764.5 117.2 L1765.0 117.5 L1765.5 119.3 L1766.0 122.5 L1766.5 127.1 L1767.0 133.1 L1767.5 140.3 L1768.0 148.7 L1768.5 158.1 L1769.0 168.4 L1769.5 179.6 L1770.0 191.4 L1770.5 203.7 L1771.0 216.3 L1771.5 229.1 L1772.0 241.8 L1772.5 254.5 L1773.0 266.7 L1773.5 278.5 L1774.0 289.7 L1774.5 300.0 L1775.0 309.5 L1775.5 317.8 L1776.0 325.1 L1776.5 331.0 L1777.0 335.7 L1777.5 338.9 L1778.0 340.7 L1778.5 341.0 L1779.0 339.9 L1779.5 337.4 L1780.0 333.4 L1780.5 328.0 L1781.0 321.4 L1781.5 313.6 L1782.0 304.6 L1782.5 294.7 L1783.0 283.9 L1783.5 272.4 L1784.0 260.3 L1784.5 247.8 L1785.0 235.1 L1785.5 222.3 L1786.0 209.6 L1786.5 197.1 L1786.5 197.1 L1786.5 229.1" stroke="#e81a1a" stroke-width="2.4" fill="none" stroke-linejoin="round"/>
<path d="M798.7 228.7 H1618.5 M1786.5 228.7 H1893.5" stroke="#1616d8" stroke-width="2.4" fill="none"/>
<path d="M358.8 226.1 L359.3 223.9 L359.8 221.8 L360.3 219.8 L360.8 217.9 L361.3 216.1 L361.8 214.5 L362.3 213.1 L362.8 211.9 L363.3 211.0 L363.8 210.2 L364.3 209.8 L364.8 209.5 L365.3 209.5 L365.8 209.8 L366.3 210.4 L366.8 211.1 L367.3 212.2 L367.8 213.4 L368.3 214.8 L368.8 216.5 L369.3 218.2 L369.8 220.2 L370.3 222.2 L370.8 224.4 L371.3 226.6 L371.8 228.8 L372.3 231.0 L372.8 233.3 L373.3 235.4 L373.8 237.5 L374.3 239.5 L374.8 241.3 L375.3 243.0 L375.8 244.5 L376.3 245.7 L376.8 246.8 L377.3 247.7 L377.8 248.3 L378.3 248.6 L378.8 248.7 L379.3 248.5 L379.8 248.1 L380.3 247.5 L380.8 246.6 L381.3 245.4 L381.8 244.1 L382.3 242.5 L382.8 240.8 L383.3 238.9 L383.8 236.9 L384.3 234.8 L384.8 232.7 L385.3 230.4 L385.8 228.2 L386.3 226.0 L386.8 223.8 L387.3 221.7 L387.8 219.6 L388.3 217.8 L388.8 216.0 L389.3 214.4 L389.8 213.0 L390.3 211.9 L390.8 210.9 L391.3 210.2 L391.8 209.7 L392.3 209.5 L392.8 209.6 L393.3 209.9 L393.8 210.4 L394.3 211.2 L394.8 212.2 L395.3 213.5 L395.8 214.9 L396.3 216.6 L396.8 218.4 L397.3 220.3 L397.8 222.4 L398.3 224.5 L398.8 226.7 L399.3 228.9 L399.8 231.2 L400.3 233.4 L400.8 235.6 L401.3 237.6 L401.8 239.6 L402.3 241.4 L402.8 243.1 L403.3 244.5 L403.8 245.8 L404.3 246.9 L404.8 247.7 L405.3 248.3 L405.8 248.6 L406.3 248.7 L406.8 248.5 L407.3 248.1 L407.8 247.4 L408.3 246.5 L408.8 245.3 L409.3 244.0 L409.8 242.4 L410.3 240.7 L410.8 238.8 L411.3 236.8 L411.8 234.7 L412.3 232.5 L412.8 230.3 L413.3 228.1 L413.8 225.8 L414.3 223.6 L414.8 221.5 L415.3 219.5 L415.8 217.6 L416.3 215.9 L416.8 214.3 L417.3 213.0 L417.8 211.8 L418.3 210.9 L418.8 210.2 L419.3 209.7 L419.8 209.5 L420.3 209.6 L420.8 209.9 L421.3 210.4 L421.8 211.3 L422.3 212.3 L422.8 213.6 L423.3 215.0 L423.8 216.7 L424.3 218.5 L424.8 220.4 L425.3 222.5 L425.8 224.7 L426.3 226.9 L426.8 229.1 L427.3 231.3 L427.8 233.5 L428.3 235.7 L428.8 237.8 L429.3 239.7 L429.8 241.5 L430.3 243.2 L430.8 244.6 L431.3 245.9 L431.8 246.9 L432.3 247.7 L432.8 248.3 L433.3 248.6 L433.8 248.7 L434.3 248.5 L434.8 248.0 L435.3 247.3 L435.8 246.4 L436.3 245.3 L436.8 243.9 L437.3 242.3 L437.8 240.6 L438.3 238.7 L438.8 236.7 L439.3 234.6 L439.8 232.4 L440.3 230.1 L440.8 227.9 L441.3 225.7 L441.8 223.5 L442.3 221.4 L442.8 219.4 L443.3 217.5 L443.8 215.8 L444.3 214.2 L444.8 212.9 L445.3 211.7 L445.8 210.8 L446.3 210.1 L446.8 209.7 L447.3 209.5 L447.8 209.6 L448.3 209.9 L448.8 210.5 L449.3 211.3 L449.8 212.4 L450.3 213.7 L450.8 215.1 L451.3 216.8 L451.8 218.6 L452.3 220.6 L452.8 222.6 L453.3 224.8 L453.8 227.0 L454.3 229.2 L454.8 231.5 L455.3 233.7 L455.8 235.8 L456.3 237.9 L456.8 239.8 L457.3 241.6 L457.8 243.3 L458.3 244.7 L458.8 246.0 L459.3 247.0 L459.8 247.8 L460.3 248.3 L460.8 248.6 L461.3 248.7 L461.8 248.5 L462.3 248.0 L462.8 247.3 L463.3 246.3 L463.8 245.2 L464.3 243.8 L464.8 242.2 L465.3 240.5 L465.8 238.6 L466.3 236.5 L466.8 234.4 L467.3 232.2 L467.8 230.0 L468.3 227.8 L468.8 225.5 L469.3 223.4 L469.8 221.3 L470.3 219.3 L470.8 217.4 L471.3 215.7 L471.8 214.1 L472.3 212.8 L472.8 211.7 L473.3 210.7 L473.8 210.1 L474.3 209.7 L474.8 209.5 L475.3 209.6 L475.8 209.9 L476.3 210.5 L476.8 211.4 L477.3 212.5 L477.8 213.7 L478.3 215.2 L478.8 216.9 L479.3 218.7 L479.8 220.7 L480.3 222.8 L480.8 224.9 L481.3 227.2 L481.8 229.4 L482.3 231.6 L482.8 233.8 L483.3 236.0 L483.8 238.0 L484.3 240.0 L484.8 241.7 L485.3 243.4 L485.8 244.8 L486.3 246.0 L486.8 247.1 L487.3 247.8 L487.8 248.4 L488.3 248.7 L488.8 248.7 L489.3 248.5 L489.8 248.0 L490.3 247.2 L490.8 246.3 L491.3 245.1 L491.8 243.7 L492.3 242.1 L492.8 240.3 L493.3 238.4 L493.8 236.4 L494.3 234.3 L494.8 232.1 L495.3 229.9 L495.8 227.6 L496.3 225.4 L496.8 223.2 L497.3 221.1 L497.8 219.1 L498.3 217.3 L498.8 215.6 L499.3 214.0 L499.8 212.7 L500.3 211.6 L500.8 210.7 L501.3 210.0 L501.8 209.6 L502.3 209.5 L502.8 209.6 L503.3 210.0 L503.8 210.6 L504.3 211.4 L504.8 212.5 L505.3 213.8 L505.8 215.3 L506.3 217.0 L506.8 218.9 L507.3 220.8 L507.8 222.9 L508.3 225.1 L508.8 227.3 L509.3 229.5 L509.8 231.8 L510.3 234.0 L510.8 236.1 L511.3 238.2 L511.8 240.1 L512.3 241.9 L512.8 243.5 L513.3 244.9 L513.8 246.1 L514.3 247.1 L514.8 247.9 L515.3 248.4 L515.8 248.7 L516.3 248.7 L516.8 248.4 L517.3 247.9 L517.8 247.2 L518.3 246.2 L518.8 245.0 L519.3 243.6 L519.8 242.0 L520.3 240.2 L520.8 238.3 L521.3 236.3 L521.8 234.1 L522.3 231.9 L522.8 229.7 L523.3 227.5 L523.8 225.2 L524.3 223.1 L524.8 221.0 L525.3 219.0 L525.8 217.2 L526.3 215.5 L526.8 213.9 L527.3 212.6 L527.8 211.5 L528.3 210.6 L528.8 210.0 L529.3 209.6 L529.8 209.5 L530.3 209.6 L530.8 210.0 L531.3 210.6 L531.8 211.5 L532.3 212.6 L532.8 213.9 L533.3 215.4 L533.8 217.1 L534.3 219.0 L534.8 221.0 L535.3 223.1 L535.8 225.2 L536.3 227.4 L536.8 229.7 L537.3 231.9 L537.8 234.1 L538.3 236.2 L538.8 238.3 L539.3 240.2 L539.8 242.0 L540.3 243.6 L540.8 245.0 L541.3 246.2 L541.8 247.2 L542.3 247.9 L542.8 248.4 L543.3 248.7 L543.8 248.7 L544.3 248.4 L544.8 247.9 L545.3 247.1 L545.8 246.1 L546.3 244.9 L546.8 243.5 L547.3 241.9 L547.8 240.1 L548.3 238.2 L548.8 236.1 L549.3 234.0 L549.8 231.8 L550.3 229.6 L550.8 227.3 L551.3 225.1 L551.8 222.9 L552.3 220.9 L552.8 218.9 L553.3 217.0 L553.8 215.4 L554.3 213.8 L554.8 212.5 L555.3 211.5 L555.8 210.6 L556.3 210.0 L556.8 209.6 L557.3 209.5 L557.8 209.6 L558.3 210.0 L558.8 210.7 L559.3 211.6 L559.8 212.7 L560.3 214.0 L560.8 215.6 L561.3 217.3 L561.8 219.1 L562.3 221.1 L562.8 223.2 L563.3 225.4 L563.8 227.6 L564.3 229.8 L564.8 232.1 L565.3 234.3 L565.8 236.4 L566.3 238.4 L566.8 240.3 L567.3 242.1 L567.8 243.7 L568.3 245.1 L568.8 246.3 L569.3 247.2 L569.8 248.0 L570.3 248.4 L570.8 248.7 L571.3 248.7 L571.8 248.4 L572.3 247.8 L572.8 247.1 L573.3 246.1 L573.8 244.8 L574.3 243.4 L574.8 241.8 L575.3 240.0 L575.8 238.0 L576.3 236.0 L576.8 233.8 L577.3 231.6 L577.8 229.4 L578.3 227.2 L578.8 225.0 L579.3 222.8 L579.8 220.7 L580.3 218.8 L580.8 216.9 L581.3 215.2 L581.8 213.8 L582.3 212.5 L582.8 211.4 L583.3 210.5 L583.8 209.9 L584.3 209.6 L584.8 209.5 L585.3 209.7 L585.8 210.1 L586.3 210.7 L586.8 211.6 L587.3 212.8 L587.8 214.1 L588.3 215.7 L588.8 217.4 L589.3 219.2 L589.8 221.2 L590.3 223.3 L590.8 225.5 L591.3 227.7 L591.8 230.0 L592.3 232.2 L592.8 234.4 L593.3 236.5 L593.8 238.5 L594.3 240.4 L594.8 242.2 L595.3 243.8 L595.8 245.2 L596.3 246.3 L596.8 247.3 L597.3 248.0 L597.8 248.5 L598.3 248.7 L598.8 248.6 L599.3 248.3 L599.8 247.8 L600.3 247.0 L600.8 246.0 L601.3 244.7 L601.8 243.3 L602.3 241.6 L602.8 239.8 L603.3 237.9 L603.8 235.8 L604.3 233.7 L604.8 231.5 L605.3 229.3 L605.8 227.0 L606.3 224.8 L606.8 222.7 L607.3 220.6 L607.8 218.6 L608.3 216.8 L608.8 215.1 L609.3 213.7 L609.8 212.4 L610.3 211.3 L610.8 210.5 L611.3 209.9 L611.8 209.6 L612.3 209.5 L612.8 209.7 L613.3 210.1 L613.8 210.8 L614.3 211.7 L614.8 212.9 L615.3 214.2 L615.8 215.8 L616.3 217.5 L616.8 219.4 L617.3 221.4 L617.8 223.5 L618.3 225.7 L618.8 227.9 L619.3 230.1 L619.8 232.4 L620.3 234.5 L620.8 236.7 L621.3 238.7 L621.8 240.6 L622.3 242.3 L622.8 243.9 L623.3 245.2 L623.8 246.4 L624.3 247.3 L624.8 248.0 L625.3 248.5 L625.8 248.7 L626.3 248.6 L626.8 248.3 L627.3 247.8 L627.8 246.9 L628.3 245.9 L628.8 244.6 L629.3 243.2 L629.8 241.5 L630.3 239.7 L630.8 237.8 L631.0 237.0 L631.0 118.0 L631.5 120.4 L632.0 124.2 L632.5 129.4 L633.0 135.9 L633.5 143.6 L634.0 152.4 L634.5 162.2 L635.0 172.9 L635.5 184.3 L636.0 196.3 L636.5 208.7 L637.0 221.4 L637.5 234.2 L638.0 247.0 L638.5 259.5 L639.0 271.6 L639.5 283.1 L640.0 294.0 L640.5 304.0 L641.0 313.0 L641.5 320.9 L642.0 327.6 L642.5 333.1 L643.0 337.1 L643.5 339.8 L644.0 341.0 L644.5 340.8 L645.0 339.1 L645.5 335.9 L646.0 331.4 L646.5 325.5 L647.0 318.4 L647.5 310.1 L648.0 300.7 L648.5 290.4 L649.0 279.3 L649.5 267.6 L650.0 255.3 L650.5 242.7 L651.0 230.0 L651.5 217.2 L652.0 204.5 L652.5 192.2 L653.0 180.4 L653.5 169.2 L654.0 158.8 L654.5 149.3 L655.0 140.9 L655.5 133.6 L656.0 127.5 L656.5 122.8 L657.0 119.5 L657.5 117.6 L658.0 117.1 L658.5 118.2 L659.0 120.6 L659.5 124.5 L660.0 129.8 L660.5 136.3 L661.0 144.1 L661.5 153.0 L662.0 162.9 L662.5 173.6 L663.0 185.1 L663.5 197.1 L664.0 209.6 L664.5 222.3 L665.0 235.1 L665.5 247.8 L666.0 260.3 L666.5 272.4 L667.0 283.9 L667.5 294.7 L668.0 304.6 L668.5 313.5 L669.0 321.4 L669.5 328.0 L670.0 333.4 L670.5 337.4 L671.0 339.9 L671.5 341.0 L672.0 340.7 L672.5 338.9 L673.0 335.7 L673.5 331.0 L674.0 325.1 L674.5 317.9 L675.0 309.5 L675.5 300.1 L676.0 289.7 L676.5 278.6 L677.0 266.8 L677.5 254.5 L678.0 241.9 L678.5 229.1 L679.0 216.3 L679.5 203.7 L680.0 191.4 L680.5 179.6 L681.0 168.5 L681.5 158.1 L682.0 148.7 L682.5 140.3 L683.0 133.1 L683.5 127.2 L684.0 122.5 L684.5 119.3 L685.0 117.5 L685.5 117.2 L686.0 118.3 L686.5 120.8 L687.0 124.8 L687.5 130.2 L688.0 136.8 L688.5 144.7 L689.0 153.6 L689.5 163.5 L690.0 174.3 L690.5 185.8 L691.0 197.9 L691.5 210.4 L692.0 223.1 L692.5 235.9 L693.0 248.6 L693.5 261.1 L694.0 273.1 L694.5 284.6 L695.0 295.3 L695.5 305.2 L696.0 314.1 L696.5 321.9 L697.0 328.4 L697.5 333.7 L698.0 337.6 L698.5 340.0 L699.0 341.1 L699.5 340.6 L700.0 338.7 L700.5 335.4 L701.0 330.7 L701.5 324.6 L702.0 317.4 L702.5 308.9 L703.0 299.4 L703.5 289.0 L704.0 277.8 L704.5 266.0 L705.0 253.7 L705.5 241.0 L706.0 228.3 L706.5 215.5 L707.0 202.9 L707.5 190.6 L708.0 178.9 L708.5 167.8 L709.0 157.5 L709.5 148.1 L710.0 139.8 L710.5 132.7 L711.0 126.8 L711.5 122.3 L712.0 119.1 L712.5 117.4 L713.0 117.2 L713.5 118.4 L714.0 121.1 L714.5 125.1 L715.0 130.6 L715.5 137.3 L716.0 145.2 L716.5 154.2 L717.0 164.2 L717.5 175.1 L718.0 186.6 L718.5 198.7 L719.0 211.2 L719.5 224.0 L720.0 236.8 L720.5 249.5 L721.0 261.9 L721.5 273.9 L722.0 285.3 L722.5 296.0 L723.0 305.8 L723.5 314.6 L724.0 322.3 L724.5 328.8 L725.0 334.0 L725.5 337.8 L726.0 340.2 L726.5 341.1 L727.0 340.6 L727.5 338.6 L728.0 335.1 L728.5 330.3 L729.0 324.2 L729.5 316.8 L730.0 308.3 L730.5 298.8 L731.0 288.3 L731.5 277.1 L732.0 265.2 L732.5 252.9 L733.0 240.2 L733.5 227.4 L734.0 214.6 L734.5 202.1 L735.0 189.8 L735.5 178.1 L736.0 167.1 L736.5 156.8 L737.0 147.5 L737.5 139.3 L738.0 132.3 L738.5 126.5 L739.0 122.0 L739.5 119.0 L740.0 117.4 L740.5 117.2 L741.0 118.5 L741.5 121.3 L742.0 125.5 L742.5 131.0 L743.0 137.8 L743.5 145.8 L744.0 154.9 L744.5 164.9 L745.0 175.8 L745.5 187.4 L746.0 199.5 L746.5 212.1 L747.0 224.8 L747.5 237.6 L748.0 250.3 L748.5 262.7 L749.0 274.7 L749.5 286.1 L750.0 296.7 L750.5 306.4 L751.0 315.2 L751.5 322.8 L752.0 329.2 L752.5 334.3 L753.0 338.0 L753.5 340.3 L754.0 341.1 L754.5 340.5 L755.0 338.4 L755.5 334.9 L756.0 330.0 L756.5 323.8 L757.0 316.3 L757.5 307.7 L758.0 298.1 L758.5 287.6 L759.0 276.3 L759.5 264.4 L760.0 252.0 L760.5 239.4 L761.0 226.6 L761.5 213.8 L762.0 201.2 L762.5 189.0 L763.0 177.4 L763.5 166.4 L764.0 156.2 L764.5 147.0 L765.0 138.8 L765.5 131.8 L766.0 126.1 L766.5 121.8 L767.0 118.8 L767.5 117.3 L768.0 117.3 L768.5 118.7 L769.0 121.5 L769.5 125.8 L770.0 131.4 L770.5 138.3 L771.0 146.3 L771.5 155.5 L772.0 165.6 L772.5 176.6 L773.0 188.2 L773.5 200.4 L774.0 212.9 L774.5 225.6 L775.0 238.4 L775.5 251.1 L776.0 263.5 L776.5 275.5 L777.0 286.8 L777.5 297.4 L778.0 307.1 L778.5 315.7 L779.0 323.3 L779.5 329.6 L780.0 334.6 L780.5 338.2 L781.0 340.4 L781.5 341.1 L782.0 340.4 L782.5 338.2 L783.0 334.6 L783.5 329.6 L784.0 323.3 L784.5 315.8 L785.0 307.1 L785.5 297.4 L786.0 286.9 L786.5 275.5 L787.0 263.6 L787.5 251.2 L788.0 238.5 L788.5 225.7 L789.0 213.0 L789.5 200.4 L790.0 188.3 L790.5 176.6 L791.0 165.7 L791.5 155.6 L792.0 146.4 L792.5 138.3 L793.0 131.4 L793.5 125.8 L794.0 121.5 L794.5 118.7 L795.0 117.3 L795.5 117.3 L796.0 118.8 L796.5 121.8 L797.0 126.1 L797.5 131.8 L798.0 138.8 L798.5 146.9 L798.7 150.5 L798.7 229.1 M1618.5 229.1 L1618.5 117.3 L1619.0 118.8 L1619.5 121.8 L1620.0 126.1 L1620.5 131.8 L1621.0 138.8 L1621.5 146.9 L1622.0 156.2 L1622.5 166.4 L1623.0 177.3 L1623.5 189.0 L1624.0 201.2 L1624.5 213.8 L1625.0 226.5 L1625.5 239.3 L1626.0 252.0 L1626.5 264.4 L1627.0 276.3 L1627.5 287.6 L1628.0 298.1 L1628.5 307.7 L1629.0 316.3 L1629.5 323.7 L1630.0 330.0 L1630.5 334.9 L1631.0 338.4 L1631.5 340.5 L1632.0 341.1 L1632.5 340.3 L1633.0 338.0 L1633.5 334.3 L1634.0 329.2 L1634.5 322.8 L1635.0 315.2 L1635.5 306.5 L1636.0 296.7 L1636.5 286.1 L1637.0 274.7 L1637.5 262.7 L1638.0 250.3 L1638.5 237.6 L1639.0 224.8 L1639.5 212.1 L1640.0 199.6 L1640.5 187.4 L1641.0 175.8 L1641.5 164.9 L1642.0 154.9 L1642.5 145.8 L1643.0 137.8 L1643.5 131.0 L1644.0 125.5 L1644.5 121.3 L1645.0 118.5 L1645.5 117.2 L1646.0 117.4 L1646.5 119.0 L1647.0 122.0 L1647.5 126.5 L1648.0 132.2 L1648.5 139.3 L1649.0 147.5 L1649.5 156.8 L1650.0 167.1 L1650.5 178.1 L1651.0 189.8 L1651.5 202.0 L1652.0 214.6 L1652.5 227.4 L1653.0 240.2 L1653.5 252.8 L1654.0 265.2 L1654.5 277.0 L1655.0 288.3 L1655.5 298.7 L1656.0 308.3 L1656.5 316.8 L1657.0 324.2 L1657.5 330.3 L1658.0 335.1 L1658.5 338.6 L1659.0 340.5 L1659.5 341.1 L1660.0 340.2 L1660.5 337.8 L1661.0 334.0 L1661.5 328.8 L1662.0 322.3 L1662.5 314.7 L1663.0 305.8 L1663.5 296.0 L1664.0 285.4 L1664.5 273.9 L1665.0 261.9 L1665.5 249.5 L1666.0 236.8 L1666.5 224.0 L1667.0 211.2 L1667.5 198.7 L1668.0 186.6 L1668.5 175.1 L1669.0 164.2 L1669.5 154.2 L1670.0 145.2 L1670.5 137.3 L1671.0 130.6 L1671.5 125.1 L1672.0 121.1 L1672.5 118.4 L1673.0 117.2 L1673.5 117.4 L1674.0 119.1 L1674.5 122.3 L1675.0 126.8 L1675.5 132.7 L1676.0 139.8 L1676.5 148.1 L1677.0 157.5 L1677.5 167.8 L1678.0 178.9 L1678.5 190.6 L1679.0 202.9 L1679.5 215.5 L1680.0 228.2 L1680.5 241.0 L1681.0 253.7 L1681.5 266.0 L1682.0 277.8 L1682.5 289.0 L1683.0 299.4 L1683.5 308.9 L1684.0 317.3 L1684.5 324.6 L1685.0 330.7 L1685.5 335.4 L1686.0 338.7 L1686.5 340.6 L1687.0 341.1 L1687.5 340.0 L1688.0 337.6 L1688.5 333.7 L1689.0 328.4 L1689.5 321.9 L1690.0 314.1 L1690.5 305.2 L1691.0 295.4 L1691.5 284.6 L1692.0 273.2 L1692.5 261.1 L1693.0 248.7 L1693.5 235.9 L1694.0 223.1 L1694.5 210.4 L1695.0 197.9 L1695.5 185.9 L1696.0 174.4 L1696.5 163.6 L1697.0 153.6 L1697.5 144.7 L1698.0 136.8 L1698.5 130.2 L1699.0 124.8 L1699.5 120.8 L1700.0 118.3 L1700.5 117.2 L1701.0 117.5 L1701.5 119.3 L1702.0 122.5 L1702.5 127.1 L1703.0 133.1 L1703.5 140.3 L1704.0 148.7 L1704.5 158.1 L1705.0 168.5 L1705.5 179.6 L1706.0 191.4 L1706.5 203.7 L1707.0 216.3 L1707.5 229.1 L1708.0 241.9 L1708.5 254.5 L1709.0 266.8 L1709.5 278.6 L1710.0 289.7 L1710.5 300.1 L1711.0 309.5 L1711.5 317.9 L1712.0 325.1 L1712.5 331.0 L1713.0 335.7 L1713.5 338.9 L1714.0 340.7 L1714.5 341.0 L1715.0 339.9 L1715.5 337.4 L1716.0 333.4 L1716.5 328.0 L1717.0 321.4 L1717.5 313.6 L1718.0 304.6 L1718.5 294.7 L1719.0 283.9 L1719.5 272.4 L1720.0 260.3 L1720.5 247.8 L1721.0 235.1 L1721.5 222.3 L1722.0 209.6 L1722.5 197.1 L1723.0 185.1 L1723.5 173.6 L1724.0 162.9 L1724.5 153.0 L1725.0 144.1 L1725.5 136.3 L1726.0 129.8 L1726.5 124.5 L1727.0 120.6 L1727.5 118.2 L1728.0 117.1 L1728.5 117.6 L1729.0 119.5 L1729.5 122.8 L1730.0 127.5 L1730.5 133.5 L1731.0 140.8 L1731.5 149.3 L1732.0 158.8 L1732.5 169.2 L1733.0 180.4 L1733.5 192.2 L1734.0 204.5 L1734.5 217.1 L1735.0 229.9 L1735.5 242.7 L1736.0 255.3 L1736.5 267.6 L1737.0 279.3 L1737.5 290.4 L1738.0 300.7 L1738.5 310.1 L1739.0 318.4 L1739.5 325.5 L1740.0 331.4 L1740.5 335.9 L1741.0 339.1 L1741.5 340.8 L1742.0 341.0 L1742.5 339.8 L1743.0 337.1 L1743.5 333.1 L1744.0 327.6 L1744.5 320.9 L1745.0 313.0 L1745.5 304.0 L1746.0 294.0 L1746.5 283.1 L1747.0 271.6 L1747.5 259.5 L1748.0 247.0 L1748.5 234.3 L1749.0 221.5 L1749.5 208.7 L1750.0 196.3 L1750.5 184.3 L1751.0 172.9 L1751.5 162.2 L1752.0 152.4 L1752.5 143.6 L1753.0 135.9 L1753.5 129.4 L1754.0 124.2 L1754.5 120.4 L1755.0 118.0 L1755.5 117.1 L1756.0 117.6 L1756.5 119.6 L1757.0 123.1 L1757.5 127.9 L1758.0 134.0 L1758.5 141.4 L1759.0 149.9 L1759.5 159.4 L1760.0 169.9 L1760.5 181.1 L1761.0 193.0 L1761.5 205.3 L1762.0 218.0 L1762.5 230.8 L1763.0 243.5 L1763.5 256.1 L1764.0 268.4 L1764.5 280.1 L1765.0 291.1 L1765.5 301.4 L1766.0 310.6 L1766.5 318.9 L1767.0 325.9 L1767.5 331.7 L1768.0 336.2 L1768.5 339.2 L1769.0 340.8 L1769.5 341.0 L1770.0 339.7 L1770.5 336.9 L1771.0 332.8 L1771.5 327.2 L1772.0 320.4 L1772.5 312.4 L1773.0 303.4 L1773.5 293.3 L1774.0 282.4 L1774.5 270.8 L1775.0 258.7 L1775.5 246.2 L1776.0 233.4 L1776.5 220.6 L1777.0 207.9 L1777.5 195.5 L1778.0 183.5 L1778.5 172.2 L1779.0 161.5 L1779.5 151.8 L1780.0 143.0 L1780.5 135.4 L1781.0 129.0 L1781.5 123.9 L1782.0 120.2 L1782.5 117.9 L1783.0 117.1 L1783.5 117.7 L1784.0 119.8 L1784.5 123.3 L1785.0 128.2 L1785.5 134.4 L1786.0 141.9 L1786.5 150.5 L1786.5 150.5 L1786.5 229.1" stroke="#1616d8" stroke-width="2.9" fill="none" stroke-linejoin="round"/>
<path d="M359 229.1 H797.8 M1619.5 229.1 H1785.5" stroke="#fff" stroke-width="1.7" stroke-dasharray="2.5 2.1" fill="none"/>
<path d="M358.8 213.8 L359.3 215.3 L359.8 217.0 L360.3 218.9 L360.8 220.8 L361.3 222.9 L361.8 225.1 L362.3 227.3 L362.8 229.5 L363.3 231.8 L363.8 234.0 L364.3 236.1 L364.8 238.2 L365.3 240.1 L365.8 241.9 L366.3 243.5 L366.8 244.9 L367.3 246.1 L367.8 247.1 L368.3 247.9 L368.8 248.4 L369.3 248.7 L369.8 248.7 L370.3 248.4 L370.8 247.9 L371.3 247.2 L371.8 246.2 L372.3 245.0 L372.8 243.6 L373.3 242.0 L373.8 240.2 L374.3 238.3 L374.8 236.3 L375.3 234.1 L375.8 231.9 L376.3 229.7 L376.8 227.5 L377.3 225.2 L377.8 223.1 L378.3 221.0 L378.8 219.0 L379.3 217.1 L379.8 215.5 L380.3 213.9 L380.8 212.6 L381.3 211.5 L381.8 210.6 L382.3 210.0 L382.8 209.6 L383.3 209.5 L383.8 209.6 L384.3 210.0 L384.8 210.6 L385.3 211.5 L385.8 212.6 L386.3 213.9 L386.8 215.5 L387.3 217.1 L387.8 219.0 L388.3 221.0 L388.8 223.1 L389.3 225.2 L389.8 227.5 L390.3 229.7 L390.8 231.9 L391.3 234.1 L391.8 236.3 L392.3 238.3 L392.8 240.2 L393.3 242.0 L393.8 243.6 L394.3 245.0 L394.8 246.2 L395.3 247.2 L395.8 247.9 L396.3 248.4 L396.8 248.7 L397.3 248.7 L397.8 248.4 L398.3 247.9 L398.8 247.1 L399.3 246.1 L399.8 244.9 L400.3 243.5 L400.8 241.9 L401.3 240.1 L401.8 238.2 L402.3 236.1 L402.8 234.0 L403.3 231.8 L403.8 229.5 L404.3 227.3 L404.8 225.1 L405.3 222.9 L405.8 220.8 L406.3 218.9 L406.8 217.0 L407.3 215.3 L407.8 213.8 L408.3 212.5 L408.8 211.5 L409.3 210.6 L409.8 210.0 L410.3 209.6 L410.8 209.5 L411.3 209.6 L411.8 210.0 L412.3 210.7 L412.8 211.6 L413.3 212.7 L413.8 214.0 L414.3 215.6 L414.8 217.3 L415.3 219.1 L415.8 221.1 L416.3 223.2 L416.8 225.4 L417.3 227.6 L417.8 229.8 L418.3 232.1 L418.8 234.3 L419.3 236.4 L419.8 238.4 L420.3 240.3 L420.8 242.1 L421.3 243.7 L421.8 245.1 L422.3 246.3 L422.8 247.2 L423.3 248.0 L423.8 248.4 L424.3 248.7 L424.8 248.7 L425.3 248.4 L425.8 247.8 L426.3 247.1 L426.8 246.1 L427.3 244.8 L427.8 243.4 L428.3 241.8 L428.8 240.0 L429.3 238.0 L429.8 236.0 L430.3 233.8 L430.8 231.6 L431.3 229.4 L431.8 227.2 L432.3 224.9 L432.8 222.8 L433.3 220.7 L433.8 218.7 L434.3 216.9 L434.8 215.2 L435.3 213.8 L435.8 212.5 L436.3 211.4 L436.8 210.5 L437.3 209.9 L437.8 209.6 L438.3 209.5 L438.8 209.7 L439.3 210.1 L439.8 210.7 L440.3 211.6 L440.8 212.8 L441.3 214.1 L441.8 215.7 L442.3 217.4 L442.8 219.3 L443.3 221.3 L443.8 223.4 L444.3 225.5 L444.8 227.8 L445.3 230.0 L445.8 232.2 L446.3 234.4 L446.8 236.5 L447.3 238.5 L447.8 240.4 L448.3 242.2 L448.8 243.8 L449.3 245.2 L449.8 246.3 L450.3 247.3 L450.8 248.0 L451.3 248.5 L451.8 248.7 L452.3 248.6 L452.8 248.3 L453.3 247.8 L453.8 247.0 L454.3 246.0 L454.8 244.7 L455.3 243.3 L455.8 241.6 L456.3 239.8 L456.8 237.9 L457.3 235.8 L457.8 233.7 L458.3 231.5 L458.8 229.3 L459.3 227.0 L459.8 224.8 L460.3 222.7 L460.8 220.6 L461.3 218.6 L461.8 216.8 L462.3 215.1 L462.8 213.7 L463.3 212.4 L463.8 211.3 L464.3 210.5 L464.8 209.9 L465.3 209.6 L465.8 209.5 L466.3 209.7 L466.8 210.1 L467.3 210.8 L467.8 211.7 L468.3 212.9 L468.8 214.2 L469.3 215.8 L469.8 217.5 L470.3 219.4 L470.8 221.4 L471.3 223.5 L471.8 225.7 L472.3 227.9 L472.8 230.1 L473.3 232.4 L473.8 234.6 L474.3 236.7 L474.8 238.7 L475.3 240.6 L475.8 242.3 L476.3 243.9 L476.8 245.2 L477.3 246.4 L477.8 247.3 L478.3 248.0 L478.8 248.5 L479.3 248.7 L479.8 248.6 L480.3 248.3 L480.8 247.8 L481.3 246.9 L481.8 245.9 L482.3 244.6 L482.8 243.2 L483.3 241.5 L483.8 239.7 L484.3 237.8 L484.8 235.7 L485.3 233.6 L485.8 231.3 L486.3 229.1 L486.8 226.9 L487.3 224.7 L487.8 222.5 L488.3 220.4 L488.8 218.5 L489.3 216.7 L489.8 215.0 L490.3 213.6 L490.8 212.3 L491.3 211.3 L491.8 210.5 L492.3 209.9 L492.8 209.6 L493.3 209.5 L493.8 209.7 L494.3 210.2 L494.8 210.9 L495.3 211.8 L495.8 212.9 L496.3 214.3 L496.8 215.9 L497.3 217.6 L497.8 219.5 L498.3 221.5 L498.8 223.6 L499.3 225.8 L499.8 228.0 L500.3 230.3 L500.8 232.5 L501.3 234.7 L501.8 236.8 L502.3 238.8 L502.8 240.7 L503.3 242.4 L503.8 244.0 L504.3 245.3 L504.8 246.5 L505.3 247.4 L505.8 248.1 L506.3 248.5 L506.8 248.7 L507.3 248.6 L507.8 248.3 L508.3 247.7 L508.8 246.9 L509.3 245.8 L509.8 244.5 L510.3 243.1 L510.8 241.4 L511.3 239.6 L511.8 237.6 L512.3 235.6 L512.8 233.4 L513.3 231.2 L513.8 229.0 L514.3 226.7 L514.8 224.5 L515.3 222.4 L515.8 220.3 L516.3 218.4 L516.8 216.6 L517.3 214.9 L517.8 213.5 L518.3 212.2 L518.8 211.2 L519.3 210.4 L519.8 209.9 L520.3 209.6 L520.8 209.5 L521.3 209.7 L521.8 210.2 L522.3 210.9 L522.8 211.9 L523.3 213.0 L523.8 214.4 L524.3 216.0 L524.8 217.7 L525.3 219.6 L525.8 221.7 L526.3 223.8 L526.8 226.0 L527.3 228.2 L527.8 230.4 L528.3 232.7 L528.8 234.8 L529.3 236.9 L529.8 238.9 L530.3 240.8 L530.8 242.5 L531.3 244.1 L531.8 245.4 L532.3 246.5 L532.8 247.5 L533.3 248.1 L533.8 248.5 L534.3 248.7 L534.8 248.6 L535.3 248.3 L535.8 247.7 L536.3 246.8 L536.8 245.7 L537.3 244.5 L537.8 243.0 L538.3 241.3 L538.8 239.5 L539.3 237.5 L539.8 235.4 L540.3 233.3 L540.8 231.0 L541.3 228.8 L541.8 226.6 L542.3 224.4 L542.8 222.2 L543.3 220.2 L543.8 218.2 L544.3 216.5 L544.8 214.8 L545.3 213.4 L545.8 212.2 L546.3 211.1 L546.8 210.4 L547.3 209.8 L547.8 209.5 L548.3 209.5 L548.8 209.7 L549.3 210.2 L549.8 211.0 L550.3 211.9 L550.8 213.1 L551.3 214.5 L551.8 216.1 L552.3 217.9 L552.8 219.8 L553.3 221.8 L553.8 223.9 L554.3 226.1 L554.8 228.3 L555.3 230.6 L555.8 232.8 L556.3 235.0 L556.8 237.1 L557.3 239.1 L557.8 240.9 L558.3 242.6 L558.8 244.2 L559.3 245.5 L559.8 246.6 L560.3 247.5 L560.8 248.2 L561.3 248.6 L561.8 248.7 L562.3 248.6 L562.8 248.2 L563.3 247.6 L563.8 246.8 L564.3 245.7 L564.8 244.4 L565.3 242.9 L565.8 241.2 L566.3 239.3 L566.8 237.4 L567.3 235.3 L567.8 233.1 L568.3 230.9 L568.8 228.7 L569.3 226.4 L569.8 224.2 L570.3 222.1 L570.8 220.1 L571.3 218.1 L571.8 216.3 L572.3 214.7 L572.8 213.3 L573.3 212.1 L573.8 211.1 L574.3 210.3 L574.8 209.8 L575.3 209.5 L575.8 209.5 L576.3 209.8 L576.8 210.3 L577.3 211.0 L577.8 212.0 L578.3 213.2 L578.8 214.6 L579.3 216.2 L579.8 218.0 L580.3 219.9 L580.8 221.9 L581.3 224.1 L581.8 226.3 L582.3 228.5 L582.8 230.7 L583.3 232.9 L583.8 235.1 L584.3 237.2 L584.8 239.2 L585.3 241.0 L585.8 242.7 L586.3 244.3 L586.8 245.6 L587.3 246.7 L587.8 247.6 L588.3 248.2 L588.8 248.6 L589.3 248.7 L589.8 248.6 L590.3 248.2 L590.8 247.6 L591.3 246.7 L591.8 245.6 L592.3 244.3 L592.8 242.8 L593.3 241.1 L593.8 239.2 L594.3 237.2 L594.8 235.1 L595.3 233.0 L595.8 230.8 L596.3 228.5 L596.8 226.3 L597.3 224.1 L597.8 222.0 L598.3 219.9 L598.8 218.0 L599.3 216.2 L599.8 214.6 L600.3 213.2 L600.8 212.0 L601.3 211.0 L601.8 210.3 L602.3 209.8 L602.8 209.5 L603.3 209.5 L603.8 209.8 L604.3 210.3 L604.8 211.1 L605.3 212.1 L605.8 213.3 L606.3 214.7 L606.8 216.3 L607.3 218.1 L607.8 220.0 L608.3 222.1 L608.8 224.2 L609.3 226.4 L609.8 228.6 L610.3 230.9 L610.8 233.1 L611.3 235.3 L611.8 237.3 L612.3 239.3 L612.8 241.2 L613.3 242.8 L613.8 244.3 L614.3 245.7 L614.8 246.7 L615.3 247.6 L615.8 248.2 L616.3 248.6 L616.8 248.7 L617.3 248.6 L617.8 248.2 L618.3 247.5 L618.8 246.6 L619.3 245.5 L619.8 244.2 L620.3 242.6 L620.8 240.9 L621.3 239.1 L621.8 237.1 L622.3 235.0 L622.8 232.8 L623.3 230.6 L623.8 228.4 L624.3 226.1 L624.8 223.9 L625.3 221.8 L625.8 219.8 L626.3 217.9 L626.8 216.1 L627.3 214.5 L627.8 213.1 L628.3 211.9 L628.8 211.0 L629.3 210.2 L629.8 209.8 L630.3 209.5 L630.8 209.5 L631.0 209.6 L631.0 298.1 L631.5 307.7 L632.0 316.3 L632.5 323.7 L633.0 330.0 L633.5 334.9 L634.0 338.4 L634.5 340.5 L635.0 341.1 L635.5 340.3 L636.0 338.0 L636.5 334.3 L637.0 329.2 L637.5 322.8 L638.0 315.2 L638.5 306.5 L639.0 296.7 L639.5 286.1 L640.0 274.7 L640.5 262.7 L641.0 250.3 L641.5 237.6 L642.0 224.8 L642.5 212.1 L643.0 199.6 L643.5 187.4 L644.0 175.8 L644.5 164.9 L645.0 154.9 L645.5 145.8 L646.0 137.8 L646.5 131.0 L647.0 125.5 L647.5 121.3 L648.0 118.5 L648.5 117.2 L649.0 117.4 L649.5 119.0 L650.0 122.0 L650.5 126.5 L651.0 132.2 L651.5 139.3 L652.0 147.5 L652.5 156.8 L653.0 167.1 L653.5 178.1 L654.0 189.8 L654.5 202.0 L655.0 214.6 L655.5 227.4 L656.0 240.2 L656.5 252.8 L657.0 265.2 L657.5 277.0 L658.0 288.3 L658.5 298.7 L659.0 308.3 L659.5 316.8 L660.0 324.2 L660.5 330.3 L661.0 335.1 L661.5 338.6 L662.0 340.5 L662.5 341.1 L663.0 340.2 L663.5 337.8 L664.0 334.0 L664.5 328.8 L665.0 322.3 L665.5 314.7 L666.0 305.8 L666.5 296.0 L667.0 285.4 L667.5 273.9 L668.0 261.9 L668.5 249.5 L669.0 236.8 L669.5 224.0 L670.0 211.2 L670.5 198.7 L671.0 186.6 L671.5 175.1 L672.0 164.2 L672.5 154.2 L673.0 145.2 L673.5 137.3 L674.0 130.6 L674.5 125.1 L675.0 121.1 L675.5 118.4 L676.0 117.2 L676.5 117.4 L677.0 119.1 L677.5 122.3 L678.0 126.8 L678.5 132.7 L679.0 139.8 L679.5 148.1 L680.0 157.5 L680.5 167.8 L681.0 178.9 L681.5 190.6 L682.0 202.9 L682.5 215.5 L683.0 228.2 L683.5 241.0 L684.0 253.7 L684.5 266.0 L685.0 277.8 L685.5 289.0 L686.0 299.4 L686.5 308.9 L687.0 317.3 L687.5 324.6 L688.0 330.7 L688.5 335.4 L689.0 338.7 L689.5 340.6 L690.0 341.1 L690.5 340.0 L691.0 337.6 L691.5 333.7 L692.0 328.4 L692.5 321.9 L693.0 314.1 L693.5 305.2 L694.0 295.4 L694.5 284.6 L695.0 273.2 L695.5 261.1 L696.0 248.7 L696.5 235.9 L697.0 223.1 L697.5 210.4 L698.0 197.9 L698.5 185.9 L699.0 174.4 L699.5 163.6 L700.0 153.6 L700.5 144.7 L701.0 136.8 L701.5 130.2 L702.0 124.8 L702.5 120.8 L703.0 118.3 L703.5 117.2 L704.0 117.5 L704.5 119.3 L705.0 122.5 L705.5 127.1 L706.0 133.1 L706.5 140.3 L707.0 148.7 L707.5 158.1 L708.0 168.5 L708.5 179.6 L709.0 191.4 L709.5 203.7 L710.0 216.3 L710.5 229.1 L711.0 241.9 L711.5 254.5 L712.0 266.8 L712.5 278.6 L713.0 289.7 L713.5 300.1 L714.0 309.5 L714.5 317.9 L715.0 325.1 L715.5 331.0 L716.0 335.7 L716.5 338.9 L717.0 340.7 L717.5 341.0 L718.0 339.9 L718.5 337.4 L719.0 333.4 L719.5 328.0 L720.0 321.4 L720.5 313.6 L721.0 304.6 L721.5 294.7 L722.0 283.9 L722.5 272.4 L723.0 260.3 L723.5 247.8 L724.0 235.1 L724.5 222.3 L725.0 209.6 L725.5 197.1 L726.0 185.1 L726.5 173.6 L727.0 162.9 L727.5 153.0 L728.0 144.1 L728.5 136.3 L729.0 129.8 L729.5 124.5 L730.0 120.6 L730.5 118.2 L731.0 117.1 L731.5 117.6 L732.0 119.5 L732.5 122.8 L733.0 127.5 L733.5 133.5 L734.0 140.8 L734.5 149.3 L735.0 158.8 L735.5 169.2 L736.0 180.4 L736.5 192.2 L737.0 204.5 L737.5 217.1 L738.0 229.9 L738.5 242.7 L739.0 255.3 L739.5 267.6 L740.0 279.3 L740.5 290.4 L741.0 300.7 L741.5 310.1 L742.0 318.4 L742.5 325.5 L743.0 331.4 L743.5 335.9 L744.0 339.1 L744.5 340.8 L745.0 341.0 L745.5 339.8 L746.0 337.1 L746.5 333.1 L747.0 327.6 L747.5 320.9 L748.0 313.0 L748.5 304.0 L749.0 294.0 L749.5 283.1 L750.0 271.6 L750.5 259.5 L751.0 247.0 L751.5 234.3 L752.0 221.5 L752.5 208.7 L753.0 196.3 L753.5 184.3 L754.0 172.9 L754.5 162.2 L755.0 152.4 L755.5 143.6 L756.0 135.9 L756.5 129.4 L757.0 124.2 L757.5 120.4 L758.0 118.0 L758.5 117.1 L759.0 117.6 L759.5 119.6 L760.0 123.1 L760.5 127.9 L761.0 134.0 L761.5 141.4 L762.0 149.9 L762.5 159.4 L763.0 169.9 L763.5 181.1 L764.0 193.0 L764.5 205.3 L765.0 218.0 L765.5 230.8 L766.0 243.5 L766.5 256.1 L767.0 268.4 L767.5 280.1 L768.0 291.1 L768.5 301.4 L769.0 310.6 L769.5 318.9 L770.0 325.9 L770.5 331.7 L771.0 336.2 L771.5 339.2 L772.0 340.8 L772.5 341.0 L773.0 339.7 L773.5 336.9 L774.0 332.8 L774.5 327.2 L775.0 320.4 L775.5 312.4 L776.0 303.4 L776.5 293.3 L777.0 282.4 L777.5 270.8 L778.0 258.7 L778.5 246.2 L779.0 233.4 L779.5 220.6 L780.0 207.9 L780.5 195.5 L781.0 183.5 L781.5 172.2 L782.0 161.5 L782.5 151.8 L783.0 143.0 L783.5 135.4 L784.0 129.0 L784.5 123.9 L785.0 120.2 L785.5 117.9 L786.0 117.1 L786.5 117.7 L787.0 119.8 L787.5 123.3 L788.0 128.2 L788.5 134.4 L789.0 141.9 L789.5 150.5 L790.0 160.1 L790.5 170.6 L791.0 181.9 L791.5 193.8 L792.0 206.2 L792.5 218.8 L793.0 231.6 L793.5 244.4 L794.0 256.9 L794.5 269.1 L795.0 280.8 L795.5 291.8 L796.0 302.0 L796.5 311.2 L797.0 319.4 L797.5 326.4 L798.0 332.1 L798.5 336.4 L798.7 337.8 L798.7 229.1 M1618.5 229.1 L1618.5 291.9 L1619.0 302.0 L1619.5 311.3 L1620.0 319.4 L1620.5 326.4 L1621.0 332.1 L1621.5 336.4 L1622.0 339.4 L1622.5 340.9 L1623.0 340.9 L1623.5 339.5 L1624.0 336.7 L1624.5 332.4 L1625.0 326.8 L1625.5 319.9 L1626.0 311.8 L1626.5 302.7 L1627.0 292.6 L1627.5 281.6 L1628.0 270.0 L1628.5 257.8 L1629.0 245.3 L1629.5 232.5 L1630.0 219.7 L1630.5 207.0 L1631.0 194.7 L1631.5 182.7 L1632.0 171.4 L1632.5 160.8 L1633.0 151.1 L1633.5 142.5 L1634.0 134.9 L1634.5 128.6 L1635.0 123.6 L1635.5 120.0 L1636.0 117.8 L1636.5 117.1 L1637.0 117.8 L1637.5 120.0 L1638.0 123.6 L1638.5 128.6 L1639.0 134.9 L1639.5 142.5 L1640.0 151.1 L1640.5 160.8 L1641.0 171.4 L1641.5 182.7 L1642.0 194.7 L1642.5 207.0 L1643.0 219.7 L1643.5 232.5 L1644.0 245.3 L1644.5 257.8 L1645.0 270.0 L1645.5 281.6 L1646.0 292.6 L1646.5 302.7 L1647.0 311.8 L1647.5 319.9 L1648.0 326.8 L1648.5 332.4 L1649.0 336.7 L1649.5 339.5 L1650.0 340.9 L1650.5 340.9 L1651.0 339.4 L1651.5 336.4 L1652.0 332.1 L1652.5 326.4 L1653.0 319.4 L1653.5 311.3 L1654.0 302.0 L1654.5 291.9 L1655.0 280.9 L1655.5 269.2 L1656.0 257.0 L1656.5 244.4 L1657.0 231.7 L1657.5 218.9 L1658.0 206.2 L1658.5 193.8 L1659.0 181.9 L1659.5 170.7 L1660.0 160.1 L1660.5 150.5 L1661.0 141.9 L1661.5 134.5 L1662.0 128.2 L1662.5 123.3 L1663.0 119.8 L1663.5 117.7 L1664.0 117.1 L1664.5 117.9 L1665.0 120.2 L1665.5 123.9 L1666.0 129.0 L1666.5 135.4 L1667.0 143.0 L1667.5 151.7 L1668.0 161.5 L1668.5 172.1 L1669.0 183.5 L1669.5 195.5 L1670.0 207.9 L1670.5 220.6 L1671.0 233.4 L1671.5 246.1 L1672.0 258.6 L1672.5 270.8 L1673.0 282.4 L1673.5 293.3 L1674.0 303.3 L1674.5 312.4 L1675.0 320.4 L1675.5 327.2 L1676.0 332.7 L1676.5 336.9 L1677.0 339.7 L1677.5 341.0 L1678.0 340.8 L1678.5 339.2 L1679.0 336.2 L1679.5 331.7 L1680.0 326.0 L1680.5 318.9 L1681.0 310.7 L1681.5 301.4 L1682.0 291.2 L1682.5 280.1 L1683.0 268.4 L1683.5 256.2 L1684.0 243.6 L1684.5 230.8 L1685.0 218.0 L1685.5 205.4 L1686.0 193.0 L1686.5 181.2 L1687.0 169.9 L1687.5 159.5 L1688.0 149.9 L1688.5 141.4 L1689.0 134.0 L1689.5 127.9 L1690.0 123.1 L1690.5 119.6 L1691.0 117.7 L1691.5 117.1 L1692.0 118.0 L1692.5 120.4 L1693.0 124.2 L1693.5 129.4 L1694.0 135.8 L1694.5 143.5 L1695.0 152.3 L1695.5 162.2 L1696.0 172.8 L1696.5 184.3 L1697.0 196.3 L1697.5 208.7 L1698.0 221.4 L1698.5 234.2 L1699.0 246.9 L1699.5 259.4 L1700.0 271.5 L1700.5 283.1 L1701.0 293.9 L1701.5 303.9 L1702.0 313.0 L1702.5 320.9 L1703.0 327.6 L1703.5 333.1 L1704.0 337.1 L1704.5 339.8 L1705.0 341.0 L1705.5 340.8 L1706.0 339.1 L1706.5 335.9 L1707.0 331.4 L1707.5 325.5 L1708.0 318.4 L1708.5 310.1 L1709.0 300.7 L1709.5 290.5 L1710.0 279.4 L1710.5 267.6 L1711.0 255.4 L1711.5 242.8 L1712.0 230.0 L1712.5 217.2 L1713.0 204.6 L1713.5 192.2 L1714.0 180.4 L1714.5 169.2 L1715.0 158.8 L1715.5 149.3 L1716.0 140.9 L1716.5 133.6 L1717.0 127.5 L1717.5 122.8 L1718.0 119.5 L1718.5 117.6 L1719.0 117.1 L1719.5 118.1 L1720.0 120.6 L1720.5 124.5 L1721.0 129.8 L1721.5 136.3 L1722.0 144.1 L1722.5 153.0 L1723.0 162.8 L1723.5 173.6 L1724.0 185.0 L1724.5 197.1 L1725.0 209.5 L1725.5 222.2 L1726.0 235.0 L1726.5 247.8 L1727.0 260.3 L1727.5 272.3 L1728.0 283.8 L1728.5 294.6 L1729.0 304.6 L1729.5 313.5 L1730.0 321.4 L1730.5 328.0 L1731.0 333.4 L1731.5 337.3 L1732.0 339.9 L1732.5 341.0 L1733.0 340.7 L1733.5 338.9 L1734.0 335.7 L1734.5 331.1 L1735.0 325.1 L1735.5 317.9 L1736.0 309.5 L1736.5 300.1 L1737.0 289.7 L1737.5 278.6 L1738.0 266.8 L1738.5 254.5 L1739.0 241.9 L1739.5 229.1 L1740.0 216.3 L1740.5 203.7 L1741.0 191.4 L1741.5 179.7 L1742.0 168.5 L1742.5 158.2 L1743.0 148.7 L1743.5 140.4 L1744.0 133.1 L1744.5 127.2 L1745.0 122.5 L1745.5 119.3 L1746.0 117.5 L1746.5 117.2 L1747.0 118.3 L1747.5 120.8 L1748.0 124.8 L1748.5 130.2 L1749.0 136.8 L1749.5 144.6 L1750.0 153.6 L1750.5 163.5 L1751.0 174.3 L1751.5 185.8 L1752.0 197.9 L1752.5 210.4 L1753.0 223.1 L1753.5 235.9 L1754.0 248.6 L1754.5 261.1 L1755.0 273.1 L1755.5 284.6 L1756.0 295.3 L1756.5 305.2 L1757.0 314.1 L1757.5 321.8 L1758.0 328.4 L1758.5 333.7 L1759.0 337.6 L1759.5 340.0 L1760.0 341.1 L1760.5 340.6 L1761.0 338.7 L1761.5 335.4 L1762.0 330.7 L1762.5 324.7 L1763.0 317.4 L1763.5 308.9 L1764.0 299.4 L1764.5 289.0 L1765.0 277.8 L1765.5 266.0 L1766.0 253.7 L1766.5 241.1 L1767.0 228.3 L1767.5 215.5 L1768.0 202.9 L1768.5 190.7 L1769.0 178.9 L1769.5 167.8 L1770.0 157.5 L1770.5 148.1 L1771.0 139.8 L1771.5 132.7 L1772.0 126.8 L1772.5 122.3 L1773.0 119.1 L1773.5 117.4 L1774.0 117.2 L1774.5 118.4 L1775.0 121.1 L1775.5 125.1 L1776.0 130.6 L1776.5 137.3 L1777.0 145.2 L1777.5 154.2 L1778.0 164.2 L1778.5 175.0 L1779.0 186.6 L1779.5 198.7 L1780.0 211.2 L1780.5 223.9 L1781.0 236.7 L1781.5 249.4 L1782.0 261.9 L1782.5 273.9 L1783.0 285.3 L1783.5 296.0 L1784.0 305.8 L1784.5 314.6 L1785.0 322.3 L1785.5 328.8 L1786.0 334.0 L1786.5 337.8 L1786.5 337.8 L1786.5 229.1" stroke="#faf32c" stroke-width="1.8" fill="none" stroke-linejoin="round"/>
<path d="M906 115 V340" stroke="#0d0dc4" stroke-width="3" fill="none"/>
<path d="M1447.5 115 V340" stroke="#fff" stroke-width="1.2" fill="none"/>
<path d="M343.6 115.3 V341.6" stroke="#fff" stroke-width="1.15" fill="none"/>
<path d="M350.59999999999997 118.3 l3.6 4 h-7.2 Z" fill="#cfcfcf"/>
<rect x="346.2" y="124.8" width="8.8" height="206.8" fill="#c3c3c3"/>
<rect x="348.2" y="127.0" width="5" height="4.6" fill="#fff"/>
<rect x="348.2" y="326.0" width="5" height="4.6" fill="#fff"/>
<path d="M350.59999999999997 339.40000000000003 l3.6 -4.4 h-7.2 Z" fill="#cfcfcf"/>
<path d="M338.3 150.5 H343.6" stroke="#fff" stroke-width="1" fill="none"/>
<path d="M338.3 189.5 H343.6" stroke="#fff" stroke-width="1" fill="none"/>
<path d="M338.3 229.1 H343.6" stroke="#fff" stroke-width="1" fill="none"/>
<path d="M338.3 268.5 H343.6" stroke="#fff" stroke-width="1" fill="none"/>
<path d="M338.3 308.5 H343.6" stroke="#fff" stroke-width="1" fill="none"/>
<path d="M358 356.4 H1894" stroke="#fff" stroke-width="1.3" fill="none"/>
<path d="M631.3 356.4 v5.5" stroke="#fff" stroke-width="1.2" fill="none"/>
<path d="M1043.0 356.4 v5.5" stroke="#fff" stroke-width="1.2" fill="none"/>
<path d="M1454.7 356.4 v5.5" stroke="#fff" stroke-width="1.2" fill="none"/>
<path d="M1866.5 356.4 v5.5" stroke="#fff" stroke-width="1.2" fill="none"/>
<path d="M361 349.4 l4 -3.5 v7 Z" fill="#cfcfcf"/>
<path d="M1891 349.4 l-4 -3.5 v7 Z" fill="#cfcfcf"/>
<rect x="617.8" y="345.09999999999997" width="712.2" height="8.9" fill="#c6c6c6"/>
<rect x="619.8" y="347.09999999999997" width="4.1" height="4.7" fill="#fff"/>
<rect x="1323.9" y="347.09999999999997" width="4.1" height="4.7" fill="#fff"/>
<path d="M358 491.5 H1893.5" stroke="#fff" stroke-width="1.05" stroke-dasharray="2.8 4.3" stroke-dashoffset="2.4" fill="none"/>
<path d="M358 616.5 H1893.5" stroke="#fff" stroke-width="1.05" stroke-dasharray="2.8 4.3" stroke-dashoffset="2.4" fill="none"/>
<path d="M358.8 444.2 L359.3 443.7 L359.8 444.7 L360.3 447.2 L360.8 451.0 L361.3 456.2 L361.8 462.6 L362.3 470.3 L362.8 479.0 L363.3 488.8 L363.8 499.3 L364.3 510.6 L364.8 522.5 L365.3 534.8 L365.8 547.3 L366.3 559.9 L366.8 572.4 L367.3 584.7 L367.8 596.6 L368.3 607.9 L368.8 618.6 L369.3 628.3 L369.8 637.2 L370.3 644.9 L370.8 651.4 L371.3 656.7 L371.8 660.6 L372.3 663.1 L372.8 664.2 L373.3 663.9 L373.8 662.1 L374.3 659.0 L374.8 654.4 L375.3 648.5 L375.8 641.4 L376.3 633.2 L376.8 623.9 L377.3 613.7 L377.8 602.7 L378.3 591.1 L378.8 579.0 L379.3 566.6 L379.8 554.0 L380.3 541.4 L380.8 529.0 L381.3 516.9 L381.8 505.3 L382.3 494.3 L382.8 484.1 L383.3 474.8 L383.8 466.6 L384.3 459.5 L384.8 453.6 L385.3 449.0 L385.8 445.9 L386.3 444.1 L386.8 443.8 L387.3 444.9 L387.8 447.4 L388.3 451.3 L388.8 456.6 L389.3 463.1 L389.8 470.8 L390.3 479.6 L390.8 489.4 L391.3 500.1 L391.8 511.4 L392.3 523.3 L392.8 535.6 L393.3 548.1 L393.8 560.7 L394.3 573.2 L394.8 585.5 L395.3 597.4 L395.8 608.7 L396.3 619.2 L396.8 629.0 L397.3 637.7 L397.8 645.4 L398.3 651.8 L398.8 657.0 L399.3 660.8 L399.8 663.3 L400.3 664.3 L400.8 663.8 L401.3 662.0 L401.8 658.7 L402.3 654.1 L402.8 648.1 L403.3 640.9 L403.8 632.6 L404.3 623.3 L404.8 613.0 L405.3 602.0 L405.8 590.3 L406.3 578.2 L406.8 565.8 L407.3 553.2 L407.8 540.6 L408.3 528.2 L408.8 516.1 L409.3 504.5 L409.8 493.6 L410.3 483.5 L410.8 474.3 L411.3 466.1 L411.8 459.1 L412.3 453.3 L412.8 448.8 L413.3 445.7 L413.8 444.0 L414.3 443.8 L414.8 445.0 L415.3 447.6 L415.8 451.6 L416.3 457.0 L416.8 463.6 L417.3 471.4 L417.8 480.3 L418.3 490.1 L418.8 500.8 L419.3 512.2 L419.8 524.1 L420.3 536.4 L420.8 548.9 L421.3 561.5 L421.8 574.1 L422.3 586.3 L422.8 598.1 L423.3 609.4 L423.8 619.9 L424.3 629.6 L424.8 638.2 L425.3 645.8 L425.8 652.2 L426.3 657.3 L426.8 661.0 L427.3 663.4 L427.8 664.3 L428.3 663.8 L428.8 661.8 L429.3 658.4 L429.8 653.7 L430.3 647.7 L430.8 640.4 L431.3 632.0 L431.8 622.6 L432.3 612.3 L432.8 601.2 L433.3 589.5 L433.8 577.4 L434.3 564.9 L434.8 552.3 L435.3 539.8 L435.8 527.4 L436.3 515.3 L436.8 503.8 L437.3 492.9 L437.8 482.8 L438.3 473.7 L438.8 465.6 L439.3 458.6 L439.8 452.9 L440.3 448.5 L440.8 445.5 L441.3 444.0 L441.8 443.8 L442.3 445.1 L442.8 447.8 L443.3 451.9 L443.8 457.4 L444.3 464.1 L444.8 471.9 L445.3 480.9 L445.8 490.8 L446.3 501.5 L446.8 512.9 L447.3 524.9 L447.8 537.2 L448.3 549.8 L448.8 562.4 L449.3 574.9 L449.8 587.1 L450.3 598.9 L450.8 610.1 L451.3 620.6 L451.8 630.2 L452.3 638.8 L452.8 646.3 L453.3 652.6 L453.8 657.6 L454.3 661.2 L454.8 663.5 L455.3 664.3 L455.8 663.7 L456.3 661.6 L456.8 658.2 L457.3 653.3 L457.8 647.2 L458.3 639.9 L458.8 631.4 L459.3 621.9 L459.8 611.6 L460.3 600.5 L460.8 588.8 L461.3 576.6 L461.8 564.1 L462.3 551.5 L462.8 538.9 L463.3 526.6 L463.8 514.6 L464.3 503.1 L464.8 492.2 L465.3 482.2 L465.8 473.1 L466.3 465.1 L466.8 458.2 L467.3 452.6 L467.8 448.3 L468.3 445.4 L468.8 443.9 L469.3 443.9 L469.8 445.2 L470.3 448.1 L470.8 452.2 L471.3 457.8 L471.8 464.5 L472.3 472.5 L472.8 481.5 L473.3 491.5 L473.8 502.3 L474.3 513.7 L474.8 525.7 L475.3 538.0 L475.8 550.6 L476.3 563.2 L476.8 575.7 L477.3 587.9 L477.8 599.6 L478.3 610.8 L478.8 621.2 L479.3 630.8 L479.8 639.3 L480.3 646.7 L480.8 652.9 L481.3 657.9 L481.8 661.4 L482.3 663.6 L482.8 664.3 L483.3 663.6 L483.8 661.4 L484.3 657.9 L484.8 653.0 L485.3 646.8 L485.8 639.4 L486.3 630.8 L486.8 621.3 L487.3 610.9 L487.8 599.7 L488.3 588.0 L488.8 575.8 L489.3 563.3 L489.8 550.7 L490.3 538.1 L490.8 525.8 L491.3 513.8 L491.8 502.3 L492.3 491.5 L492.8 481.6 L493.3 472.5 L493.8 464.6 L494.3 457.8 L494.8 452.3 L495.3 448.1 L495.8 445.3 L496.3 443.9 L496.8 443.9 L497.3 445.4 L497.8 448.3 L498.3 452.6 L498.8 458.2 L499.3 465.0 L499.8 473.1 L500.3 482.1 L500.8 492.2 L501.3 503.0 L501.8 514.5 L502.3 526.5 L502.8 538.9 L503.3 551.4 L503.8 564.0 L504.3 576.5 L504.8 588.7 L505.3 600.4 L505.8 611.5 L506.3 621.9 L506.8 631.4 L507.3 639.8 L507.8 647.2 L508.3 653.3 L508.8 658.1 L509.3 661.6 L509.8 663.7 L510.3 664.3 L510.8 663.5 L511.3 661.2 L511.8 657.6 L512.3 652.6 L512.8 646.3 L513.3 638.8 L513.8 630.2 L514.3 620.6 L514.8 610.2 L515.3 599.0 L515.8 587.2 L516.3 574.9 L516.8 562.5 L517.3 549.8 L517.8 537.3 L518.3 525.0 L518.8 513.0 L519.3 501.6 L519.8 490.9 L520.3 480.9 L520.8 472.0 L521.3 464.1 L521.8 457.4 L522.3 452.0 L522.8 447.8 L523.3 445.1 L523.8 443.8 L524.3 444.0 L524.8 445.5 L525.3 448.5 L525.8 452.9 L526.3 458.6 L526.8 465.5 L527.3 473.6 L527.8 482.8 L528.3 492.9 L528.8 503.7 L529.3 515.3 L529.8 527.3 L530.3 539.7 L530.8 552.3 L531.3 564.9 L531.8 577.3 L532.3 589.5 L532.8 601.2 L533.3 612.2 L533.8 622.5 L534.3 632.0 L534.8 640.4 L535.3 647.6 L535.8 653.7 L536.3 658.4 L536.8 661.8 L537.3 663.8 L537.8 664.3 L538.3 663.4 L538.8 661.0 L539.3 657.3 L539.8 652.2 L540.3 645.9 L540.8 638.3 L541.3 629.6 L541.8 620.0 L542.3 609.4 L542.8 598.2 L543.3 586.4 L543.8 574.1 L544.3 561.6 L544.8 549.0 L545.3 536.5 L545.8 524.2 L546.3 512.2 L546.8 500.9 L547.3 490.2 L547.8 480.3 L548.3 471.4 L548.8 463.6 L549.3 457.0 L549.8 451.6 L550.3 447.6 L550.8 445.0 L551.3 443.8 L551.8 444.0 L552.3 445.7 L552.8 448.8 L553.3 453.2 L553.8 459.0 L554.3 466.0 L554.8 474.2 L555.3 483.4 L555.8 493.5 L556.3 504.5 L556.8 516.0 L557.3 528.1 L557.8 540.5 L558.3 553.1 L558.8 565.7 L559.3 578.1 L559.8 590.3 L560.3 601.9 L560.8 612.9 L561.3 623.2 L561.8 632.5 L562.3 640.9 L562.8 648.1 L563.3 654.0 L563.8 658.7 L564.3 662.0 L564.8 663.8 L565.3 664.3 L565.8 663.3 L566.3 660.8 L566.8 657.0 L567.3 651.8 L567.8 645.4 L568.3 637.8 L568.8 629.0 L569.3 619.3 L569.8 608.7 L570.3 597.4 L570.8 585.6 L571.3 573.3 L571.8 560.8 L572.3 548.2 L572.8 535.6 L573.3 523.4 L573.8 511.5 L574.3 500.1 L574.8 489.5 L575.3 479.7 L575.8 470.9 L576.3 463.2 L576.8 456.6 L577.3 451.3 L577.8 447.4 L578.3 444.9 L578.8 443.8 L579.3 444.1 L579.8 445.8 L580.3 449.0 L580.8 453.6 L581.3 459.4 L581.8 466.5 L582.3 474.8 L582.8 484.1 L583.3 494.2 L583.8 505.2 L584.3 516.8 L584.8 528.9 L585.3 541.3 L585.8 553.9 L586.3 566.5 L586.8 578.9 L587.3 591.0 L587.8 602.7 L588.3 613.6 L588.8 623.8 L589.3 633.1 L589.8 641.4 L590.3 648.5 L590.8 654.4 L591.3 658.9 L591.8 662.1 L592.3 663.9 L592.8 664.3 L593.3 663.2 L593.8 660.6 L594.3 656.7 L594.8 651.5 L595.3 644.9 L595.8 637.2 L596.3 628.4 L596.8 618.6 L597.3 608.0 L597.8 596.7 L598.3 584.8 L598.8 572.5 L599.3 560.0 L599.8 547.3 L600.3 534.8 L600.8 522.6 L601.3 510.7 L601.8 499.4 L602.3 488.8 L602.8 479.1 L603.3 470.3 L603.8 462.7 L604.3 456.2 L604.8 451.0 L605.3 447.2 L605.8 444.7 L606.3 443.7 L606.8 444.2 L607.3 446.0 L607.8 449.3 L608.3 453.9 L608.8 459.9 L609.3 467.0 L609.8 475.4 L610.3 484.7 L610.8 494.9 L611.3 506.0 L611.8 517.6 L612.3 529.7 L612.8 542.2 L613.3 554.8 L613.8 567.3 L614.3 579.8 L614.8 591.8 L615.3 603.4 L615.8 614.3 L616.3 624.5 L616.8 633.7 L617.3 641.9 L617.8 648.9 L618.3 654.7 L618.8 659.2 L619.3 662.3 L619.8 664.0 L620.3 664.2 L620.8 663.0 L621.3 660.4 L621.8 656.4 L622.3 651.1 L622.8 644.5 L623.3 636.7 L623.8 627.8 L624.3 617.9 L624.8 607.3 L625.3 595.9 L625.8 584.0 L626.3 571.7 L626.8 559.1 L627.3 546.5 L627.8 534.0 L628.3 521.8 L628.8 509.9 L629.3 498.7 L629.8 488.1 L630.3 478.5 L630.8 469.8 L631.3 462.2 L631.3 462.2 L631.3 506.7 L631.8 504.3 L632.3 502.6 L632.8 501.5 L633.3 501.1 L633.8 501.4 L634.3 502.4 L634.8 504.1 L635.3 506.4 L635.8 509.3 L636.3 512.8 L636.8 516.9 L637.3 521.4 L637.8 526.4 L638.3 531.7 L638.8 537.3 L639.3 543.2 L639.8 549.2 L640.3 555.2 L640.8 561.2 L641.3 567.2 L641.8 572.9 L642.3 578.4 L642.8 583.6 L643.3 588.4 L643.8 592.8 L644.3 596.7 L644.8 599.9 L645.3 602.6 L645.8 604.7 L646.3 606.1 L646.8 606.8 L647.3 606.8 L647.8 606.2 L648.3 604.8 L648.8 602.8 L649.3 600.1 L649.8 596.9 L650.3 593.1 L650.8 588.8 L651.3 584.0 L651.8 578.8 L652.3 573.3 L652.8 567.6 L653.3 561.6 L653.8 555.6 L654.3 549.6 L654.8 543.6 L655.3 537.7 L655.8 532.1 L656.3 526.7 L656.8 521.7 L657.3 517.2 L657.8 513.1 L658.3 509.5 L658.8 506.5 L659.3 504.2 L659.8 502.5 L660.3 501.4 L660.8 501.1 L661.3 501.4 L661.8 502.5 L662.3 504.2 L662.8 506.5 L663.3 509.5 L663.8 513.1 L664.3 517.2 L664.8 521.7 L665.3 526.7 L665.8 532.1 L666.3 537.7 L666.8 543.6 L667.3 549.6 L667.8 555.6 L668.3 561.6 L668.8 567.6 L669.3 573.3 L669.8 578.8 L670.3 584.0 L670.8 588.8 L671.3 593.1 L671.8 596.9 L672.3 600.1 L672.8 602.8 L673.3 604.8 L673.8 606.2 L674.3 606.8 L674.8 606.8 L675.3 606.1 L675.8 604.7 L676.3 602.6 L676.8 599.9 L677.3 596.7 L677.8 592.8 L678.3 588.4 L678.8 583.6 L679.3 578.4 L679.8 572.9 L680.3 567.2 L680.8 561.2 L681.3 555.2 L681.8 549.2 L682.3 543.2 L682.8 537.3 L683.3 531.7 L683.8 526.4 L684.3 521.4 L684.8 516.9 L685.3 512.8 L685.8 509.3 L686.3 506.4 L686.8 504.1 L687.3 502.4 L687.8 501.4 L688.3 501.1 L688.8 501.5 L689.3 502.6 L689.8 504.3 L690.3 506.7 L690.8 509.7 L691.3 513.3 L691.8 517.5 L692.3 522.1 L692.8 527.1 L693.3 532.5 L693.8 538.1 L694.3 544.0 L694.8 550.0 L695.3 556.0 L695.8 562.0 L696.3 567.9 L696.8 573.7 L697.3 579.2 L697.8 584.3 L698.3 589.1 L698.8 593.3 L699.3 597.1 L699.8 600.3 L700.3 602.9 L700.8 604.9 L701.3 606.2 L701.8 606.8 L702.3 606.8 L702.8 606.0 L703.3 604.6 L703.8 602.5 L704.3 599.7 L704.8 596.4 L705.3 592.5 L705.8 588.1 L706.3 583.3 L706.8 578.1 L707.3 572.6 L707.8 566.8 L708.3 560.8 L708.8 554.8 L709.3 548.8 L709.8 542.8 L710.3 537.0 L710.8 531.4 L711.3 526.1 L711.8 521.1 L712.3 516.6 L712.8 512.6 L713.3 509.1 L713.8 506.2 L714.3 503.9 L714.8 502.3 L715.3 501.4 L715.8 501.1 L716.3 501.5 L716.8 502.7 L717.3 504.5 L717.8 506.9 L718.3 510.0 L718.8 513.6 L719.3 517.7 L719.8 522.4 L720.3 527.4 L720.8 532.8 L721.3 538.5 L721.8 544.4 L722.3 550.4 L722.8 556.4 L723.3 562.4 L723.8 568.3 L724.3 574.0 L724.8 579.5 L725.3 584.6 L725.8 589.3 L726.3 593.6 L726.8 597.4 L727.3 600.5 L727.8 603.1 L728.3 605.0 L728.8 606.3 L729.3 606.9 L729.8 606.7 L730.3 605.9 L730.8 604.5 L731.3 602.3 L731.8 599.5 L732.3 596.2 L732.8 592.3 L733.3 587.8 L733.8 583.0 L734.3 577.7 L734.8 572.2 L735.3 566.4 L735.8 560.4 L736.3 554.4 L736.8 548.4 L737.3 542.4 L737.8 536.6 L738.3 531.0 L738.8 525.7 L739.3 520.8 L739.8 516.3 L740.3 512.3 L740.8 508.9 L741.3 506.0 L741.8 503.8 L742.3 502.2 L742.8 501.3 L743.3 501.1 L743.8 501.6 L744.3 502.8 L744.8 504.6 L745.3 507.1 L745.8 510.2 L746.3 513.8 L746.8 518.0 L747.3 522.7 L747.8 527.8 L748.3 533.2 L748.8 538.9 L749.3 544.8 L749.8 550.8 L750.3 556.8 L750.8 562.8 L751.3 568.7 L751.8 574.4 L752.3 579.9 L752.8 585.0 L753.3 589.6 L753.8 593.9 L754.3 597.6 L754.8 600.7 L755.3 603.2 L755.8 605.1 L756.3 606.3 L756.8 606.9 L757.3 606.7 L757.8 605.9 L758.3 604.3 L758.8 602.2 L759.3 599.3 L759.8 595.9 L760.3 592.0 L760.8 587.5 L761.3 582.6 L761.8 577.4 L762.3 571.8 L762.8 566.0 L763.3 560.1 L763.8 554.0 L764.3 548.0 L764.8 542.0 L765.3 536.2 L765.8 530.6 L766.3 525.4 L766.8 520.5 L767.3 516.0 L767.8 512.1 L768.3 508.7 L768.8 505.9 L769.3 503.7 L769.8 502.1 L770.3 501.3 L770.8 501.1 L771.3 501.7 L771.8 502.9 L772.3 504.7 L772.8 507.3 L773.3 510.4 L773.8 514.1 L774.3 518.3 L774.8 523.0 L775.3 528.1 L775.8 533.6 L776.3 539.3 L776.8 545.2 L777.3 551.2 L777.8 557.2 L778.3 563.2 L778.8 569.1 L779.3 574.8 L779.8 580.2 L780.3 585.3 L780.8 589.9 L781.3 594.1 L781.8 597.8 L782.3 600.9 L782.8 603.4 L783.3 605.2 L783.8 606.4 L784.3 606.9 L784.8 606.7 L785.3 605.8 L785.8 604.2 L786.3 602.0 L786.8 599.1 L787.3 595.7 L787.8 591.7 L788.3 587.2 L788.8 582.3 L789.3 577.0 L789.8 571.4 L790.3 565.6 L790.8 559.7 L791.3 553.6 L791.8 547.6 L792.3 541.6 L792.8 535.8 L793.3 530.3 L793.8 525.0 L794.3 520.2 L794.8 515.8 L795.3 511.8 L795.8 508.5 L796.3 505.7 L796.8 503.5 L797.3 502.1 L797.8 501.3 L798.3 501.1 L798.8 501.7 L798.8 501.7 L798.8 554.0 M1618.0 554.0 L1618.0 511.8 L1618.5 508.5 L1619.0 505.7 L1619.5 503.5 L1620.0 502.1 L1620.5 501.3 L1621.0 501.1 L1621.5 501.7 L1622.0 503.0 L1622.5 504.9 L1623.0 507.5 L1623.5 510.6 L1624.0 514.4 L1624.5 518.6 L1625.0 523.4 L1625.5 528.5 L1626.0 533.9 L1626.5 539.7 L1627.0 545.6 L1627.5 551.6 L1628.0 557.6 L1628.5 563.6 L1629.0 569.5 L1629.5 575.2 L1630.0 580.6 L1630.5 585.6 L1631.0 590.2 L1631.5 594.4 L1632.0 598.0 L1632.5 601.1 L1633.0 603.5 L1633.5 605.3 L1634.0 606.5 L1634.5 606.9 L1635.0 606.6 L1635.5 605.7 L1636.0 604.1 L1636.5 601.8 L1637.0 598.9 L1637.5 595.4 L1638.0 591.4 L1638.5 586.9 L1639.0 581.9 L1639.5 576.6 L1640.0 571.0 L1640.5 565.2 L1641.0 559.2 L1641.5 553.2 L1642.0 547.2 L1642.5 541.2 L1643.0 535.4 L1643.5 529.9 L1644.0 524.7 L1644.5 519.9 L1645.0 515.5 L1645.5 511.6 L1646.0 508.3 L1646.5 505.5 L1647.0 503.4 L1647.5 502.0 L1648.0 501.2 L1648.5 501.2 L1649.0 501.8 L1649.5 503.1 L1650.0 505.0 L1650.5 507.7 L1651.0 510.9 L1651.5 514.7 L1652.0 518.9 L1652.5 523.7 L1653.0 528.8 L1653.5 534.3 L1654.0 540.0 L1654.5 546.0 L1655.0 552.0 L1655.5 558.0 L1656.0 564.0 L1656.5 569.9 L1657.0 575.5 L1657.5 580.9 L1658.0 585.9 L1658.5 590.5 L1659.0 594.7 L1659.5 598.3 L1660.0 601.3 L1660.5 603.7 L1661.0 605.4 L1661.5 606.5 L1662.0 606.9 L1662.5 606.6 L1663.0 605.6 L1663.5 604.0 L1664.0 601.6 L1664.5 598.7 L1665.0 595.2 L1665.5 591.1 L1666.0 586.6 L1666.5 581.6 L1667.0 576.3 L1667.5 570.7 L1668.0 564.8 L1668.5 558.8 L1669.0 552.8 L1669.5 546.8 L1670.0 540.8 L1670.5 535.1 L1671.0 529.6 L1671.5 524.4 L1672.0 519.6 L1672.5 515.2 L1673.0 511.3 L1673.5 508.1 L1674.0 505.4 L1674.5 503.3 L1675.0 501.9 L1675.5 501.2 L1676.0 501.2 L1676.5 501.8 L1677.0 503.2 L1677.5 505.2 L1678.0 507.9 L1678.5 511.1 L1679.0 514.9 L1679.5 519.2 L1680.0 524.0 L1680.5 529.2 L1681.0 534.7 L1681.5 540.4 L1682.0 546.4 L1682.5 552.4 L1683.0 558.4 L1683.5 564.4 L1684.0 570.3 L1684.5 575.9 L1685.0 581.3 L1685.5 586.3 L1686.0 590.8 L1686.5 594.9 L1687.0 598.5 L1687.5 601.5 L1688.0 603.8 L1688.5 605.5 L1689.0 606.6 L1689.5 606.9 L1690.0 606.6 L1690.5 605.5 L1691.0 603.8 L1691.5 601.5 L1692.0 598.5 L1692.5 594.9 L1693.0 590.8 L1693.5 586.3 L1694.0 581.3 L1694.5 575.9 L1695.0 570.3 L1695.5 564.4 L1696.0 558.4 L1696.5 552.4 L1697.0 546.4 L1697.5 540.4 L1698.0 534.7 L1698.5 529.2 L1699.0 524.0 L1699.5 519.3 L1700.0 514.9 L1700.5 511.1 L1701.0 507.9 L1701.5 505.2 L1702.0 503.2 L1702.5 501.8 L1703.0 501.2 L1703.5 501.2 L1704.0 501.9 L1704.5 503.3 L1705.0 505.4 L1705.5 508.0 L1706.0 511.3 L1706.5 515.2 L1707.0 519.5 L1707.5 524.4 L1708.0 529.5 L1708.5 535.1 L1709.0 540.8 L1709.5 546.8 L1710.0 552.8 L1710.5 558.8 L1711.0 564.8 L1711.5 570.6 L1712.0 576.3 L1712.5 581.6 L1713.0 586.6 L1713.5 591.1 L1714.0 595.2 L1714.5 598.7 L1715.0 601.6 L1715.5 603.9 L1716.0 605.6 L1716.5 606.6 L1717.0 606.9 L1717.5 606.5 L1718.0 605.4 L1718.5 603.7 L1719.0 601.3 L1719.5 598.3 L1720.0 594.7 L1720.5 590.5 L1721.0 585.9 L1721.5 580.9 L1722.0 575.6 L1722.5 569.9 L1723.0 564.0 L1723.5 558.0 L1724.0 552.0 L1724.5 546.0 L1725.0 540.1 L1725.5 534.3 L1726.0 528.9 L1726.5 523.7 L1727.0 519.0 L1727.5 514.7 L1728.0 510.9 L1728.5 507.7 L1729.0 505.1 L1729.5 503.1 L1730.0 501.8 L1730.5 501.2 L1731.0 501.2 L1731.5 502.0 L1732.0 503.4 L1732.5 505.5 L1733.0 508.2 L1733.5 511.6 L1734.0 515.5 L1734.5 519.8 L1735.0 524.7 L1735.5 529.9 L1736.0 535.4 L1736.5 541.2 L1737.0 547.1 L1737.5 553.2 L1738.0 559.2 L1738.5 565.2 L1739.0 571.0 L1739.5 576.6 L1740.0 581.9 L1740.5 586.9 L1741.0 591.4 L1741.5 595.4 L1742.0 598.9 L1742.5 601.8 L1743.0 604.1 L1743.5 605.7 L1744.0 606.6 L1744.5 606.9 L1745.0 606.5 L1745.5 605.3 L1746.0 603.5 L1746.5 601.1 L1747.0 598.0 L1747.5 594.4 L1748.0 590.3 L1748.5 585.6 L1749.0 580.6 L1749.5 575.2 L1750.0 569.5 L1750.5 563.6 L1751.0 557.6 L1751.5 551.6 L1752.0 545.6 L1752.5 539.7 L1753.0 534.0 L1753.5 528.5 L1754.0 523.4 L1754.5 518.7 L1755.0 514.4 L1755.5 510.7 L1756.0 507.5 L1756.5 504.9 L1757.0 503.0 L1757.5 501.7 L1758.0 501.1 L1758.5 501.3 L1759.0 502.1 L1759.5 503.5 L1760.0 505.7 L1760.5 508.5 L1761.0 511.8 L1761.5 515.7 L1762.0 520.2 L1762.5 525.0 L1763.0 530.3 L1763.5 535.8 L1764.0 541.6 L1764.5 547.5 L1765.0 553.6 L1765.5 559.6 L1766.0 565.6 L1766.5 571.4 L1767.0 577.0 L1767.5 582.3 L1768.0 587.2 L1768.5 591.7 L1769.0 595.7 L1769.5 599.1 L1770.0 602.0 L1770.5 604.2 L1771.0 605.8 L1771.5 606.7 L1772.0 606.9 L1772.5 606.4 L1773.0 605.2 L1773.5 603.4 L1774.0 600.9 L1774.5 597.8 L1775.0 594.2 L1775.5 590.0 L1776.0 585.3 L1776.5 580.2 L1777.0 574.8 L1777.5 569.1 L1778.0 563.2 L1778.5 557.2 L1779.0 551.2 L1779.5 545.2 L1780.0 539.3 L1780.5 533.6 L1781.0 528.2 L1781.5 523.1 L1782.0 518.4 L1782.5 514.1 L1783.0 510.4 L1783.5 507.3 L1784.0 504.8 L1784.5 502.9 L1785.0 501.7 L1785.5 501.1 L1786.0 501.3 L1786.3 501.7 L1786.3 554.0" stroke="#e81a1a" stroke-width="2.4" fill="none" stroke-linejoin="round"/>
<path d="M798.8 554.2 H1618 M1786.3 554.2 H1893.5" stroke="#1616d8" stroke-width="2.4" fill="none"/>
<path d="M358.8 600.5 L359.3 611.6 L359.8 621.9 L360.3 631.4 L360.8 639.9 L361.3 647.2 L361.8 653.3 L362.3 658.2 L362.8 661.6 L363.3 663.7 L363.8 664.3 L364.3 663.5 L364.8 661.2 L365.3 657.6 L365.8 652.6 L366.3 646.3 L366.8 638.8 L367.3 630.2 L367.8 620.6 L368.3 610.1 L368.8 598.9 L369.3 587.1 L369.8 574.9 L370.3 562.4 L370.8 549.8 L371.3 537.2 L371.8 524.9 L372.3 513.0 L372.8 501.5 L373.3 490.8 L373.8 480.9 L374.3 472.0 L374.8 464.1 L375.3 457.4 L375.8 451.9 L376.3 447.8 L376.8 445.1 L377.3 443.8 L377.8 444.0 L378.3 445.5 L378.8 448.5 L379.3 452.9 L379.8 458.6 L380.3 465.6 L380.8 473.7 L381.3 482.8 L381.8 492.9 L382.3 503.8 L382.8 515.3 L383.3 527.4 L383.8 539.7 L384.3 552.3 L384.8 564.9 L385.3 577.4 L385.8 589.5 L386.3 601.2 L386.8 612.3 L387.3 622.6 L387.8 632.0 L388.3 640.4 L388.8 647.6 L389.3 653.7 L389.8 658.4 L390.3 661.8 L390.8 663.8 L391.3 664.3 L391.8 663.4 L392.3 661.0 L392.8 657.3 L393.3 652.2 L393.8 645.8 L394.3 638.3 L394.8 629.6 L395.3 619.9 L395.8 609.4 L396.3 598.2 L396.8 586.3 L397.3 574.1 L397.8 561.6 L398.3 549.0 L398.8 536.4 L399.3 524.1 L399.8 512.2 L400.3 500.8 L400.8 490.1 L401.3 480.3 L401.8 471.4 L402.3 463.6 L402.8 457.0 L403.3 451.6 L403.8 447.6 L404.3 445.0 L404.8 443.8 L405.3 444.0 L405.8 445.7 L406.3 448.8 L406.8 453.3 L407.3 459.0 L407.8 466.1 L408.3 474.2 L408.8 483.5 L409.3 493.6 L409.8 504.5 L410.3 516.1 L410.8 528.2 L411.3 540.6 L411.8 553.1 L412.3 565.7 L412.8 578.2 L413.3 590.3 L413.8 602.0 L414.3 613.0 L414.8 623.2 L415.3 632.6 L415.8 640.9 L416.3 648.1 L416.8 654.0 L417.3 658.7 L417.8 662.0 L418.3 663.8 L418.8 664.3 L419.3 663.3 L419.8 660.8 L420.3 657.0 L420.8 651.8 L421.3 645.4 L421.8 637.7 L422.3 629.0 L422.8 619.3 L423.3 608.7 L423.8 597.4 L424.3 585.5 L424.8 573.3 L425.3 560.7 L425.8 548.1 L426.3 535.6 L426.8 523.3 L427.3 511.4 L427.8 500.1 L428.3 489.5 L428.8 479.7 L429.3 470.9 L429.8 463.1 L430.3 456.6 L430.8 451.3 L431.3 447.4 L431.8 444.9 L432.3 443.8 L432.8 444.1 L433.3 445.9 L433.8 449.0 L434.3 453.6 L434.8 459.5 L435.3 466.6 L435.8 474.8 L436.3 484.1 L436.8 494.3 L437.3 505.3 L437.8 516.9 L438.3 529.0 L438.8 541.4 L439.3 554.0 L439.8 566.6 L440.3 579.0 L440.8 591.1 L441.3 602.7 L441.8 613.7 L442.3 623.9 L442.8 633.2 L443.3 641.4 L443.8 648.5 L444.3 654.4 L444.8 658.9 L445.3 662.1 L445.8 663.9 L446.3 664.2 L446.8 663.1 L447.3 660.6 L447.8 656.7 L448.3 651.4 L448.8 644.9 L449.3 637.2 L449.8 628.4 L450.3 618.6 L450.8 608.0 L451.3 596.6 L451.8 584.7 L452.3 572.4 L452.8 559.9 L453.3 547.3 L453.8 534.8 L454.3 522.5 L454.8 510.6 L455.3 499.4 L455.8 488.8 L456.3 479.1 L456.8 470.3 L457.3 462.7 L457.8 456.2 L458.3 451.0 L458.8 447.2 L459.3 444.7 L459.8 443.7 L460.3 444.2 L460.8 446.0 L461.3 449.3 L461.8 453.9 L462.3 459.9 L462.8 467.1 L463.3 475.4 L463.8 484.7 L464.3 495.0 L464.8 506.0 L465.3 517.7 L465.8 529.8 L466.3 542.2 L466.8 554.8 L467.3 567.4 L467.8 579.8 L468.3 591.9 L468.8 603.4 L469.3 614.4 L469.8 624.5 L470.3 633.7 L470.8 641.9 L471.3 648.9 L471.8 654.7 L472.3 659.2 L472.8 662.3 L473.3 664.0 L473.8 664.2 L474.3 663.0 L474.8 660.4 L475.3 656.4 L475.8 651.0 L476.3 644.4 L476.8 636.6 L477.3 627.7 L477.8 617.9 L478.3 607.2 L478.8 595.8 L479.3 583.9 L479.8 571.6 L480.3 559.1 L480.8 546.5 L481.3 534.0 L481.8 521.7 L482.3 509.9 L482.8 498.6 L483.3 488.1 L483.8 478.4 L484.3 469.8 L484.8 462.2 L485.3 455.8 L485.8 450.7 L486.3 447.0 L486.8 444.6 L487.3 443.7 L487.8 444.2 L488.3 446.2 L488.8 449.6 L489.3 454.3 L489.8 460.3 L490.3 467.6 L490.8 476.0 L491.3 485.4 L491.8 495.7 L492.3 506.8 L492.8 518.4 L493.3 530.6 L493.8 543.0 L494.3 555.6 L494.8 568.2 L495.3 580.6 L495.8 592.7 L496.3 604.2 L496.8 615.1 L497.3 625.2 L497.8 634.3 L498.3 642.4 L498.8 649.4 L499.3 655.1 L499.8 659.4 L500.3 662.5 L500.8 664.0 L501.3 664.2 L501.8 662.9 L502.3 660.2 L502.8 656.1 L503.3 650.6 L503.8 643.9 L504.3 636.1 L504.8 627.1 L505.3 617.2 L505.8 606.5 L506.3 595.1 L506.8 583.1 L507.3 570.8 L507.8 558.2 L508.3 545.6 L508.8 533.1 L509.3 520.9 L509.8 509.1 L510.3 497.9 L510.8 487.4 L511.3 477.8 L511.8 469.2 L512.3 461.7 L512.8 455.4 L513.3 450.4 L513.8 446.8 L514.3 444.5 L514.8 443.7 L515.3 444.3 L515.8 446.4 L516.3 449.8 L516.8 454.7 L517.3 460.8 L517.8 468.1 L518.3 476.6 L518.8 486.0 L519.3 496.4 L519.8 507.5 L520.3 519.2 L520.8 531.4 L521.3 543.9 L521.8 556.5 L522.3 569.0 L522.8 581.4 L523.3 593.4 L523.8 604.9 L524.3 615.8 L524.8 625.8 L525.3 634.9 L525.8 642.9 L526.3 649.8 L526.8 655.4 L527.3 659.7 L527.8 662.6 L528.3 664.1 L528.8 664.1 L529.3 662.8 L529.8 660.0 L530.3 655.8 L530.8 650.2 L531.3 643.5 L531.8 635.5 L532.3 626.5 L532.8 616.5 L533.3 605.8 L533.8 594.3 L534.3 582.3 L534.8 570.0 L535.3 557.4 L535.8 544.8 L536.3 532.3 L536.8 520.1 L537.3 508.4 L537.8 497.2 L538.3 486.8 L538.8 477.2 L539.3 468.7 L539.8 461.3 L540.3 455.1 L540.8 450.1 L541.3 446.6 L541.8 444.4 L542.3 443.7 L542.8 444.4 L543.3 446.6 L543.8 450.1 L544.3 455.0 L544.8 461.2 L545.3 468.6 L545.8 477.2 L546.3 486.7 L546.8 497.1 L547.3 508.3 L547.8 520.0 L548.3 532.2 L548.8 544.7 L549.3 557.3 L549.8 569.9 L550.3 582.2 L550.8 594.2 L551.3 605.7 L551.8 616.5 L552.3 626.4 L552.8 635.4 L553.3 643.4 L553.8 650.2 L554.3 655.7 L554.8 659.9 L555.3 662.7 L555.8 664.1 L556.3 664.1 L556.8 662.6 L557.3 659.7 L557.8 655.4 L558.3 649.8 L558.8 643.0 L559.3 634.9 L559.8 625.9 L560.3 615.8 L560.8 605.0 L561.3 593.5 L561.8 581.5 L562.3 569.1 L562.8 556.6 L563.3 544.0 L563.8 531.5 L564.3 519.3 L564.8 507.6 L565.3 496.5 L565.8 486.1 L566.3 476.6 L566.8 468.2 L567.3 460.8 L567.8 454.7 L568.3 449.9 L568.8 446.4 L569.3 444.3 L569.8 443.7 L570.3 444.5 L570.8 446.8 L571.3 450.4 L571.8 455.4 L572.3 461.7 L572.8 469.2 L573.3 477.8 L573.8 487.4 L574.3 497.8 L574.8 509.0 L575.3 520.8 L575.8 533.0 L576.3 545.5 L576.8 558.1 L577.3 570.7 L577.8 583.0 L578.3 595.0 L578.8 606.4 L579.3 617.1 L579.8 627.0 L580.3 636.0 L580.8 643.9 L581.3 650.6 L581.8 656.0 L582.3 660.2 L582.8 662.9 L583.3 664.2 L583.8 664.0 L584.3 662.5 L584.8 659.5 L585.3 655.1 L585.8 649.4 L586.3 642.5 L586.8 634.4 L587.3 625.2 L587.8 615.2 L588.3 604.3 L588.8 592.7 L589.3 580.7 L589.8 568.3 L590.3 555.7 L590.8 543.1 L591.3 530.7 L591.8 518.5 L592.3 506.9 L592.8 495.8 L593.3 485.5 L593.8 476.1 L594.3 467.7 L594.8 460.4 L595.3 454.3 L595.8 449.6 L596.3 446.2 L596.8 444.2 L597.3 443.7 L597.8 444.6 L598.3 447.0 L598.8 450.7 L599.3 455.8 L599.8 462.1 L600.3 469.7 L600.8 478.4 L601.3 488.0 L601.8 498.5 L602.3 509.8 L602.8 521.6 L603.3 533.9 L603.8 546.4 L604.3 559.0 L604.8 571.5 L605.3 583.8 L605.8 595.8 L606.3 607.1 L606.8 617.8 L607.3 627.7 L607.8 636.6 L608.3 644.4 L608.8 651.0 L609.3 656.4 L609.8 660.4 L610.3 663.0 L610.8 664.2 L611.3 664.0 L611.8 662.3 L612.3 659.2 L612.8 654.8 L613.3 649.0 L613.8 642.0 L614.3 633.8 L614.8 624.6 L615.3 614.5 L615.8 603.5 L616.3 592.0 L616.8 579.9 L617.3 567.5 L617.8 554.9 L618.3 542.3 L618.8 529.9 L619.3 517.8 L619.8 506.1 L620.3 495.1 L620.8 484.8 L621.3 475.5 L621.8 467.1 L622.3 459.9 L622.8 454.0 L623.3 449.3 L623.8 446.0 L624.3 444.2 L624.8 443.7 L625.3 444.7 L625.8 447.2 L626.3 451.0 L626.8 456.1 L627.3 462.6 L627.8 470.2 L628.3 479.0 L628.8 488.7 L629.3 499.3 L629.8 510.6 L630.3 522.4 L630.8 534.7 L631.3 547.2 L631.3 547.2 L631.3 562.4 L631.8 568.3 L632.3 574.1 L632.8 579.5 L633.3 584.6 L633.8 589.4 L634.3 593.6 L634.8 597.4 L635.3 600.5 L635.8 603.1 L636.3 605.0 L636.8 606.3 L637.3 606.9 L637.8 606.7 L638.3 605.9 L638.8 604.5 L639.3 602.3 L639.8 599.5 L640.3 596.2 L640.8 592.3 L641.3 587.8 L641.8 583.0 L642.3 577.7 L642.8 572.2 L643.3 566.4 L643.8 560.4 L644.3 554.4 L644.8 548.4 L645.3 542.4 L645.8 536.6 L646.3 531.0 L646.8 525.7 L647.3 520.8 L647.8 516.3 L648.3 512.3 L648.8 508.9 L649.3 506.0 L649.8 503.8 L650.3 502.2 L650.8 501.3 L651.3 501.1 L651.8 501.6 L652.3 502.8 L652.8 504.6 L653.3 507.1 L653.8 510.2 L654.3 513.9 L654.8 518.0 L655.3 522.7 L655.8 527.8 L656.3 533.2 L656.8 538.9 L657.3 544.8 L657.8 550.8 L658.3 556.8 L658.8 562.8 L659.3 568.7 L659.8 574.4 L660.3 579.9 L660.8 585.0 L661.3 589.7 L661.8 593.9 L662.3 597.6 L662.8 600.7 L663.3 603.2 L663.8 605.1 L664.3 606.3 L664.8 606.9 L665.3 606.7 L665.8 605.9 L666.3 604.3 L666.8 602.2 L667.3 599.3 L667.8 595.9 L668.3 592.0 L668.8 587.5 L669.3 582.6 L669.8 577.4 L670.3 571.8 L670.8 566.0 L671.3 560.0 L671.8 554.0 L672.3 548.0 L672.8 542.0 L673.3 536.2 L673.8 530.6 L674.3 525.4 L674.8 520.5 L675.3 516.0 L675.8 512.1 L676.3 508.7 L676.8 505.9 L677.3 503.7 L677.8 502.1 L678.3 501.3 L678.8 501.1 L679.3 501.7 L679.8 502.9 L680.3 504.7 L680.8 507.3 L681.3 510.4 L681.8 514.1 L682.3 518.3 L682.8 523.0 L683.3 528.1 L683.8 533.6 L684.3 539.3 L684.8 545.2 L685.3 551.2 L685.8 557.2 L686.3 563.2 L686.8 569.1 L687.3 574.8 L687.8 580.2 L688.3 585.3 L688.8 589.9 L689.3 594.1 L689.8 597.8 L690.3 600.9 L690.8 603.4 L691.3 605.2 L691.8 606.4 L692.3 606.9 L692.8 606.7 L693.3 605.8 L693.8 604.2 L694.3 602.0 L694.8 599.1 L695.3 595.7 L695.8 591.7 L696.3 587.2 L696.8 582.3 L697.3 577.0 L697.8 571.4 L698.3 565.6 L698.8 559.6 L699.3 553.6 L699.8 547.6 L700.3 541.6 L700.8 535.8 L701.3 530.3 L701.8 525.0 L702.3 520.2 L702.8 515.8 L703.3 511.8 L703.8 508.5 L704.3 505.7 L704.8 503.5 L705.3 502.1 L705.8 501.3 L706.3 501.1 L706.8 501.7 L707.3 503.0 L707.8 504.9 L708.3 507.5 L708.8 510.6 L709.3 514.4 L709.8 518.6 L710.3 523.4 L710.8 528.5 L711.3 533.9 L711.8 539.7 L712.3 545.6 L712.8 551.6 L713.3 557.6 L713.8 563.6 L714.3 569.5 L714.8 575.2 L715.3 580.6 L715.8 585.6 L716.3 590.2 L716.8 594.4 L717.3 598.0 L717.8 601.1 L718.3 603.5 L718.8 605.3 L719.3 606.5 L719.8 606.9 L720.3 606.6 L720.8 605.7 L721.3 604.1 L721.8 601.8 L722.3 598.9 L722.8 595.4 L723.3 591.4 L723.8 586.9 L724.3 582.0 L724.8 576.7 L725.3 571.0 L725.8 565.2 L726.3 559.2 L726.8 553.2 L727.3 547.2 L727.8 541.2 L728.3 535.5 L728.8 529.9 L729.3 524.7 L729.8 519.9 L730.3 515.5 L730.8 511.6 L731.3 508.3 L731.8 505.5 L732.3 503.4 L732.8 502.0 L733.3 501.2 L733.8 501.2 L734.3 501.8 L734.8 503.1 L735.3 505.0 L735.8 507.7 L736.3 510.9 L736.8 514.6 L737.3 518.9 L737.8 523.7 L738.3 528.8 L738.8 534.3 L739.3 540.0 L739.8 546.0 L740.3 552.0 L740.8 558.0 L741.3 564.0 L741.8 569.9 L742.3 575.5 L742.8 580.9 L743.3 585.9 L743.8 590.5 L744.3 594.7 L744.8 598.3 L745.3 601.3 L745.8 603.7 L746.3 605.4 L746.8 606.5 L747.3 606.9 L747.8 606.6 L748.3 605.6 L748.8 604.0 L749.3 601.6 L749.8 598.7 L750.3 595.2 L750.8 591.1 L751.3 586.6 L751.8 581.6 L752.3 576.3 L752.8 570.7 L753.3 564.8 L753.8 558.8 L754.3 552.8 L754.8 546.8 L755.3 540.8 L755.8 535.1 L756.3 529.6 L756.8 524.4 L757.3 519.6 L757.8 515.2 L758.3 511.4 L758.8 508.1 L759.3 505.4 L759.8 503.3 L760.3 501.9 L760.8 501.2 L761.3 501.2 L761.8 501.8 L762.3 503.2 L762.8 505.2 L763.3 507.8 L763.8 511.1 L764.3 514.9 L764.8 519.2 L765.3 524.0 L765.8 529.2 L766.3 534.7 L766.8 540.4 L767.3 546.3 L767.8 552.4 L768.3 558.4 L768.8 564.4 L769.3 570.3 L769.8 575.9 L770.3 581.2 L770.8 586.2 L771.3 590.8 L771.8 594.9 L772.3 598.5 L772.8 601.5 L773.3 603.8 L773.8 605.5 L774.3 606.6 L774.8 606.9 L775.3 606.6 L775.8 605.5 L776.3 603.8 L776.8 601.5 L777.3 598.5 L777.8 594.9 L778.3 590.8 L778.8 586.3 L779.3 581.3 L779.8 575.9 L780.3 570.3 L780.8 564.4 L781.3 558.5 L781.8 552.4 L782.3 546.4 L782.8 540.5 L783.3 534.7 L783.8 529.2 L784.3 524.0 L784.8 519.3 L785.3 514.9 L785.8 511.1 L786.3 507.9 L786.8 505.2 L787.3 503.2 L787.8 501.8 L788.3 501.2 L788.8 501.2 L789.3 501.9 L789.8 503.3 L790.3 505.4 L790.8 508.0 L791.3 511.3 L791.8 515.2 L792.3 519.5 L792.8 524.3 L793.3 529.5 L793.8 535.0 L794.3 540.8 L794.8 546.7 L795.3 552.8 L795.8 558.8 L796.3 564.8 L796.8 570.6 L797.3 576.3 L797.8 581.6 L798.3 586.6 L798.8 591.1 L798.8 591.1 L798.8 554.0 M1618.0 554.0 L1618.0 552.8 L1618.5 558.8 L1619.0 564.8 L1619.5 570.7 L1620.0 576.3 L1620.5 581.6 L1621.0 586.6 L1621.5 591.1 L1622.0 595.2 L1622.5 598.7 L1623.0 601.6 L1623.5 604.0 L1624.0 605.6 L1624.5 606.6 L1625.0 606.9 L1625.5 606.5 L1626.0 605.4 L1626.5 603.7 L1627.0 601.3 L1627.5 598.3 L1628.0 594.7 L1628.5 590.5 L1629.0 585.9 L1629.5 580.9 L1630.0 575.5 L1630.5 569.9 L1631.0 564.0 L1631.5 558.0 L1632.0 552.0 L1632.5 546.0 L1633.0 540.0 L1633.5 534.3 L1634.0 528.8 L1634.5 523.7 L1635.0 518.9 L1635.5 514.7 L1636.0 510.9 L1636.5 507.7 L1637.0 505.0 L1637.5 503.1 L1638.0 501.8 L1638.5 501.2 L1639.0 501.2 L1639.5 502.0 L1640.0 503.4 L1640.5 505.5 L1641.0 508.3 L1641.5 511.6 L1642.0 515.5 L1642.5 519.9 L1643.0 524.7 L1643.5 529.9 L1644.0 535.4 L1644.5 541.2 L1645.0 547.2 L1645.5 553.2 L1646.0 559.2 L1646.5 565.2 L1647.0 571.0 L1647.5 576.6 L1648.0 581.9 L1648.5 586.9 L1649.0 591.4 L1649.5 595.4 L1650.0 598.9 L1650.5 601.8 L1651.0 604.1 L1651.5 605.7 L1652.0 606.6 L1652.5 606.9 L1653.0 606.5 L1653.5 605.3 L1654.0 603.5 L1654.5 601.1 L1655.0 598.0 L1655.5 594.4 L1656.0 590.2 L1656.5 585.6 L1657.0 580.6 L1657.5 575.2 L1658.0 569.5 L1658.5 563.6 L1659.0 557.6 L1659.5 551.6 L1660.0 545.6 L1660.5 539.7 L1661.0 533.9 L1661.5 528.5 L1662.0 523.4 L1662.5 518.6 L1663.0 514.4 L1663.5 510.6 L1664.0 507.5 L1664.5 504.9 L1665.0 503.0 L1665.5 501.7 L1666.0 501.1 L1666.5 501.3 L1667.0 502.1 L1667.5 503.5 L1668.0 505.7 L1668.5 508.5 L1669.0 511.8 L1669.5 515.7 L1670.0 520.2 L1670.5 525.0 L1671.0 530.3 L1671.5 535.8 L1672.0 541.6 L1672.5 547.6 L1673.0 553.6 L1673.5 559.6 L1674.0 565.6 L1674.5 571.4 L1675.0 577.0 L1675.5 582.3 L1676.0 587.2 L1676.5 591.7 L1677.0 595.7 L1677.5 599.1 L1678.0 602.0 L1678.5 604.2 L1679.0 605.8 L1679.5 606.7 L1680.0 606.9 L1680.5 606.4 L1681.0 605.2 L1681.5 603.4 L1682.0 600.9 L1682.5 597.8 L1683.0 594.2 L1683.5 590.0 L1684.0 585.3 L1684.5 580.2 L1685.0 574.8 L1685.5 569.1 L1686.0 563.2 L1686.5 557.2 L1687.0 551.2 L1687.5 545.2 L1688.0 539.3 L1688.5 533.6 L1689.0 528.1 L1689.5 523.0 L1690.0 518.3 L1690.5 514.1 L1691.0 510.4 L1691.5 507.3 L1692.0 504.8 L1692.5 502.9 L1693.0 501.7 L1693.5 501.1 L1694.0 501.3 L1694.5 502.1 L1695.0 503.7 L1695.5 505.8 L1696.0 508.7 L1696.5 512.1 L1697.0 516.0 L1697.5 520.5 L1698.0 525.4 L1698.5 530.6 L1699.0 536.2 L1699.5 542.0 L1700.0 548.0 L1700.5 554.0 L1701.0 560.0 L1701.5 566.0 L1702.0 571.8 L1702.5 577.4 L1703.0 582.6 L1703.5 587.5 L1704.0 592.0 L1704.5 595.9 L1705.0 599.3 L1705.5 602.1 L1706.0 604.3 L1706.5 605.9 L1707.0 606.7 L1707.5 606.9 L1708.0 606.3 L1708.5 605.1 L1709.0 603.3 L1709.5 600.7 L1710.0 597.6 L1710.5 593.9 L1711.0 589.7 L1711.5 585.0 L1712.0 579.9 L1712.5 574.4 L1713.0 568.7 L1713.5 562.8 L1714.0 556.8 L1714.5 550.8 L1715.0 544.8 L1715.5 538.9 L1716.0 533.2 L1716.5 527.8 L1717.0 522.7 L1717.5 518.1 L1718.0 513.9 L1718.5 510.2 L1719.0 507.1 L1719.5 504.6 L1720.0 502.8 L1720.5 501.6 L1721.0 501.1 L1721.5 501.3 L1722.0 502.2 L1722.5 503.8 L1723.0 506.0 L1723.5 508.9 L1724.0 512.3 L1724.5 516.3 L1725.0 520.8 L1725.5 525.7 L1726.0 531.0 L1726.5 536.6 L1727.0 542.4 L1727.5 548.4 L1728.0 554.4 L1728.5 560.4 L1729.0 566.4 L1729.5 572.2 L1730.0 577.7 L1730.5 583.0 L1731.0 587.8 L1731.5 592.2 L1732.0 596.2 L1732.5 599.5 L1733.0 602.3 L1733.5 604.5 L1734.0 605.9 L1734.5 606.7 L1735.0 606.9 L1735.5 606.3 L1736.0 605.0 L1736.5 603.1 L1737.0 600.5 L1737.5 597.4 L1738.0 593.6 L1738.5 589.4 L1739.0 584.6 L1739.5 579.5 L1740.0 574.1 L1740.5 568.4 L1741.0 562.4 L1741.5 556.4 L1742.0 550.4 L1742.5 544.4 L1743.0 538.5 L1743.5 532.8 L1744.0 527.4 L1744.5 522.4 L1745.0 517.8 L1745.5 513.6 L1746.0 510.0 L1746.5 506.9 L1747.0 504.5 L1747.5 502.7 L1748.0 501.5 L1748.5 501.1 L1749.0 501.4 L1749.5 502.3 L1750.0 503.9 L1750.5 506.2 L1751.0 509.1 L1751.5 512.6 L1752.0 516.6 L1752.5 521.1 L1753.0 526.0 L1753.5 531.3 L1754.0 536.9 L1754.5 542.8 L1755.0 548.7 L1755.5 554.8 L1756.0 560.8 L1756.5 566.8 L1757.0 572.5 L1757.5 578.1 L1758.0 583.3 L1758.5 588.1 L1759.0 592.5 L1759.5 596.4 L1760.0 599.7 L1760.5 602.5 L1761.0 604.6 L1761.5 606.0 L1762.0 606.8 L1762.5 606.8 L1763.0 606.2 L1763.5 604.9 L1764.0 603.0 L1764.5 600.3 L1765.0 597.1 L1765.5 593.4 L1766.0 589.1 L1766.5 584.3 L1767.0 579.2 L1767.5 573.7 L1768.0 568.0 L1768.5 562.1 L1769.0 556.0 L1769.5 550.0 L1770.0 544.0 L1770.5 538.1 L1771.0 532.5 L1771.5 527.1 L1772.0 522.1 L1772.5 517.5 L1773.0 513.3 L1773.5 509.7 L1774.0 506.7 L1774.5 504.3 L1775.0 502.6 L1775.5 501.5 L1776.0 501.1 L1776.5 501.4 L1777.0 502.4 L1777.5 504.0 L1778.0 506.4 L1778.5 509.3 L1779.0 512.8 L1779.5 516.9 L1780.0 521.4 L1780.5 526.4 L1781.0 531.7 L1781.5 537.3 L1782.0 543.2 L1782.5 549.1 L1783.0 555.2 L1783.5 561.2 L1784.0 567.2 L1784.5 572.9 L1785.0 578.4 L1785.5 583.6 L1786.0 588.4 L1786.3 591.1 L1786.3 554.0" stroke="#1616d8" stroke-width="2.9" fill="none" stroke-linejoin="round"/>
<path d="M359 553.8 H798 M1618 553.8 H1786" stroke="#fff" stroke-width="1.7" stroke-dasharray="2.5 2.1" fill="none"/>
<path d="M799.5 552.5 H1617 M1787.5 552.5 H1893.5" stroke="#fff" stroke-width="1.1" fill="none"/>
<path d="M358.8 618.6 L359.3 607.9 L359.8 596.6 L360.3 584.7 L360.8 572.4 L361.3 559.9 L361.8 547.3 L362.3 534.8 L362.8 522.5 L363.3 510.6 L363.8 499.3 L364.3 488.8 L364.8 479.0 L365.3 470.3 L365.8 462.6 L366.3 456.2 L366.8 451.0 L367.3 447.2 L367.8 444.7 L368.3 443.7 L368.8 444.2 L369.3 446.0 L369.8 449.3 L370.3 454.0 L370.8 459.9 L371.3 467.1 L371.8 475.4 L372.3 484.8 L372.8 495.0 L373.3 506.0 L373.8 517.7 L374.3 529.8 L374.8 542.2 L375.3 554.8 L375.8 567.4 L376.3 579.8 L376.8 591.9 L377.3 603.5 L377.8 614.4 L378.3 624.5 L378.8 633.8 L379.3 641.9 L379.8 649.0 L380.3 654.7 L380.8 659.2 L381.3 662.3 L381.8 664.0 L382.3 664.2 L382.8 663.0 L383.3 660.4 L383.8 656.4 L384.3 651.0 L384.8 644.4 L385.3 636.6 L385.8 627.7 L386.3 617.9 L386.8 607.2 L387.3 595.8 L387.8 583.9 L388.3 571.6 L388.8 559.1 L389.3 546.4 L389.8 533.9 L390.3 521.7 L390.8 509.9 L391.3 498.6 L391.8 488.1 L392.3 478.4 L392.8 469.8 L393.3 462.2 L393.8 455.8 L394.3 450.7 L394.8 447.0 L395.3 444.6 L395.8 443.7 L396.3 444.2 L396.8 446.2 L397.3 449.6 L397.8 454.3 L398.3 460.3 L398.8 467.6 L399.3 476.0 L399.8 485.4 L400.3 495.7 L400.8 506.8 L401.3 518.5 L401.8 530.6 L402.3 543.1 L402.8 555.7 L403.3 568.2 L403.8 580.6 L404.3 592.7 L404.8 604.2 L405.3 615.1 L405.8 625.2 L406.3 634.3 L406.8 642.4 L407.3 649.4 L407.8 655.1 L408.3 659.5 L408.8 662.5 L409.3 664.0 L409.8 664.2 L410.3 662.9 L410.8 660.2 L411.3 656.1 L411.8 650.6 L412.3 643.9 L412.8 636.1 L413.3 627.1 L413.8 617.2 L414.3 606.5 L414.8 595.1 L415.3 583.1 L415.8 570.8 L416.3 558.2 L416.8 545.6 L417.3 533.1 L417.8 520.9 L418.3 509.1 L418.8 497.9 L419.3 487.4 L419.8 477.8 L420.3 469.2 L420.8 461.7 L421.3 455.4 L421.8 450.4 L422.3 446.8 L422.8 444.5 L423.3 443.7 L423.8 444.3 L424.3 446.4 L424.8 449.8 L425.3 454.7 L425.8 460.8 L426.3 468.1 L426.8 476.6 L427.3 486.1 L427.8 496.4 L428.3 507.5 L428.8 519.3 L429.3 531.4 L429.8 543.9 L430.3 556.5 L430.8 569.1 L431.3 581.4 L431.8 593.5 L432.3 605.0 L432.8 615.8 L433.3 625.8 L433.8 634.9 L434.3 642.9 L434.8 649.8 L435.3 655.4 L435.8 659.7 L436.3 662.6 L436.8 664.1 L437.3 664.1 L437.8 662.8 L438.3 659.9 L438.8 655.8 L439.3 650.2 L439.8 643.4 L440.3 635.5 L440.8 626.5 L441.3 616.5 L441.8 605.7 L442.3 594.3 L442.8 582.3 L443.3 569.9 L443.8 557.4 L444.3 544.8 L444.8 532.3 L445.3 520.1 L445.8 508.3 L446.3 497.2 L446.8 486.8 L447.3 477.2 L447.8 468.7 L448.3 461.3 L448.8 455.1 L449.3 450.1 L449.8 446.6 L450.3 444.4 L450.8 443.7 L451.3 444.4 L451.8 446.6 L452.3 450.1 L452.8 455.0 L453.3 461.2 L453.8 468.7 L454.3 477.2 L454.8 486.7 L455.3 497.1 L455.8 508.3 L456.3 520.0 L456.8 532.2 L457.3 544.7 L457.8 557.3 L458.3 569.9 L458.8 582.3 L459.3 594.2 L459.8 605.7 L460.3 616.5 L460.8 626.4 L461.3 635.5 L461.8 643.4 L462.3 650.2 L462.8 655.7 L463.3 659.9 L463.8 662.7 L464.3 664.1 L464.8 664.1 L465.3 662.6 L465.8 659.7 L466.3 655.4 L466.8 649.8 L467.3 643.0 L467.8 634.9 L468.3 625.8 L468.8 615.8 L469.3 605.0 L469.8 593.5 L470.3 581.5 L470.8 569.1 L471.3 556.6 L471.8 544.0 L472.3 531.5 L472.8 519.3 L473.3 507.6 L473.8 496.5 L474.3 486.1 L474.8 476.6 L475.3 468.2 L475.8 460.8 L476.3 454.7 L476.8 449.9 L477.3 446.4 L477.8 444.3 L478.3 443.7 L478.8 444.5 L479.3 446.8 L479.8 450.4 L480.3 455.4 L480.8 461.7 L481.3 469.2 L481.8 477.8 L482.3 487.4 L482.8 497.9 L483.3 509.1 L483.8 520.8 L484.3 533.1 L484.8 545.6 L485.3 558.2 L485.8 570.7 L486.3 583.1 L486.8 595.0 L487.3 606.4 L487.8 617.2 L488.3 627.1 L488.8 636.0 L489.3 643.9 L489.8 650.6 L490.3 656.0 L490.8 660.2 L491.3 662.9 L491.8 664.2 L492.3 664.0 L492.8 662.5 L493.3 659.5 L493.8 655.1 L494.3 649.4 L494.8 642.5 L495.3 634.4 L495.8 625.2 L496.3 615.1 L496.8 604.3 L497.3 592.7 L497.8 580.7 L498.3 568.3 L498.8 555.7 L499.3 543.1 L499.8 530.7 L500.3 518.5 L500.8 506.8 L501.3 495.8 L501.8 485.4 L502.3 476.0 L502.8 467.6 L503.3 460.4 L503.8 454.3 L504.3 449.6 L504.8 446.2 L505.3 444.2 L505.8 443.7 L506.3 444.6 L506.8 447.0 L507.3 450.7 L507.8 455.8 L508.3 462.1 L508.8 469.7 L509.3 478.4 L509.8 488.0 L510.3 498.6 L510.8 509.8 L511.3 521.6 L511.8 533.9 L512.3 546.4 L512.8 559.0 L513.3 571.5 L513.8 583.9 L514.3 595.8 L514.8 607.2 L515.3 617.8 L515.8 627.7 L516.3 636.6 L516.8 644.4 L517.3 651.0 L517.8 656.4 L518.3 660.4 L518.8 663.0 L519.3 664.2 L519.8 664.0 L520.3 662.3 L520.8 659.2 L521.3 654.8 L521.8 649.0 L522.3 642.0 L522.8 633.8 L523.3 624.6 L523.8 614.4 L524.3 603.5 L524.8 591.9 L525.3 579.9 L525.8 567.5 L526.3 554.9 L526.8 542.3 L527.3 529.9 L527.8 517.7 L528.3 506.1 L528.8 495.1 L529.3 484.8 L529.8 475.4 L530.3 467.1 L530.8 459.9 L531.3 454.0 L531.8 449.3 L532.3 446.0 L532.8 444.2 L533.3 443.7 L533.8 444.7 L534.3 447.2 L534.8 451.0 L535.3 456.2 L535.8 462.6 L536.3 470.3 L536.8 479.0 L537.3 488.7 L537.8 499.3 L538.3 510.6 L538.8 522.4 L539.3 534.7 L539.8 547.2 L540.3 559.8 L540.8 572.4 L541.3 584.7 L541.8 596.5 L542.3 607.9 L542.8 618.5 L543.3 628.3 L543.8 637.1 L544.3 644.9 L544.8 651.4 L545.3 656.7 L545.8 660.6 L546.3 663.1 L546.8 664.2 L547.3 663.9 L547.8 662.2 L548.3 659.0 L548.8 654.4 L549.3 648.6 L549.8 641.5 L550.3 633.2 L550.8 623.9 L551.3 613.7 L551.8 602.8 L552.3 591.2 L552.8 579.1 L553.3 566.6 L553.8 554.1 L554.3 541.5 L554.8 529.0 L555.3 516.9 L555.8 505.3 L556.3 494.4 L556.8 484.2 L557.3 474.9 L557.8 466.6 L558.3 459.5 L558.8 453.6 L559.3 449.1 L559.8 445.9 L560.3 444.1 L560.8 443.7 L561.3 444.8 L561.8 447.4 L562.3 451.3 L562.8 456.5 L563.3 463.1 L563.8 470.8 L564.3 479.6 L564.8 489.4 L565.3 500.0 L565.8 511.3 L566.3 523.2 L566.8 535.5 L567.3 548.1 L567.8 560.7 L568.3 573.2 L568.8 585.5 L569.3 597.3 L569.8 608.6 L570.3 619.2 L570.8 628.9 L571.3 637.7 L571.8 645.3 L572.3 651.8 L572.8 657.0 L573.3 660.8 L573.8 663.3 L574.3 664.3 L574.8 663.8 L575.3 662.0 L575.8 658.7 L576.3 654.1 L576.8 648.1 L577.3 640.9 L577.8 632.6 L578.3 623.3 L578.8 613.0 L579.3 602.0 L579.8 590.4 L580.3 578.3 L580.8 565.8 L581.3 553.2 L581.8 540.6 L582.3 528.2 L582.8 516.2 L583.3 504.6 L583.8 493.7 L584.3 483.5 L584.8 474.3 L585.3 466.1 L585.8 459.1 L586.3 453.3 L586.8 448.8 L587.3 445.7 L587.8 444.0 L588.3 443.8 L588.8 445.0 L589.3 447.6 L589.8 451.6 L590.3 456.9 L590.8 463.6 L591.3 471.4 L591.8 480.2 L592.3 490.1 L592.8 500.7 L593.3 512.1 L593.8 524.0 L594.3 536.3 L594.8 548.9 L595.3 561.5 L595.8 574.0 L596.3 586.3 L596.8 598.1 L597.3 609.3 L597.8 619.9 L598.3 629.5 L598.8 638.2 L599.3 645.8 L599.8 652.2 L600.3 657.3 L600.8 661.0 L601.3 663.4 L601.8 664.3 L602.3 663.8 L602.8 661.8 L603.3 658.4 L603.8 653.7 L604.3 647.7 L604.8 640.4 L605.3 632.0 L605.8 622.6 L606.3 612.3 L606.8 601.3 L607.3 589.6 L607.8 577.4 L608.3 565.0 L608.8 552.4 L609.3 539.8 L609.8 527.4 L610.3 515.4 L610.8 503.8 L611.3 493.0 L611.8 482.9 L612.3 473.7 L612.8 465.6 L613.3 458.7 L613.8 452.9 L614.3 448.6 L614.8 445.6 L615.3 444.0 L615.8 443.8 L616.3 445.1 L616.8 447.8 L617.3 451.9 L617.8 457.3 L618.3 464.0 L618.8 471.9 L619.3 480.8 L619.8 490.7 L620.3 501.5 L620.8 512.9 L621.3 524.8 L621.8 537.2 L622.3 549.7 L622.8 562.3 L623.3 574.8 L623.8 587.0 L624.3 598.8 L624.8 610.1 L625.3 620.5 L625.8 630.1 L626.3 638.7 L626.8 646.2 L627.3 652.5 L627.8 657.6 L628.3 661.2 L628.8 663.5 L629.3 664.3 L629.8 663.7 L630.3 661.6 L630.8 658.2 L631.3 653.4 L631.3 653.4 L631.3 593.1 L631.8 588.8 L632.3 584.0 L632.8 578.8 L633.3 573.3 L633.8 567.6 L634.3 561.6 L634.8 555.6 L635.3 549.6 L635.8 543.6 L636.3 537.7 L636.8 532.1 L637.3 526.7 L637.8 521.7 L638.3 517.2 L638.8 513.1 L639.3 509.5 L639.8 506.5 L640.3 504.2 L640.8 502.5 L641.3 501.4 L641.8 501.1 L642.3 501.4 L642.8 502.5 L643.3 504.2 L643.8 506.5 L644.3 509.5 L644.8 513.1 L645.3 517.2 L645.8 521.7 L646.3 526.7 L646.8 532.1 L647.3 537.7 L647.8 543.6 L648.3 549.6 L648.8 555.6 L649.3 561.6 L649.8 567.6 L650.3 573.3 L650.8 578.8 L651.3 584.0 L651.8 588.8 L652.3 593.1 L652.8 596.9 L653.3 600.1 L653.8 602.8 L654.3 604.8 L654.8 606.2 L655.3 606.8 L655.8 606.8 L656.3 606.1 L656.8 604.7 L657.3 602.6 L657.8 599.9 L658.3 596.7 L658.8 592.8 L659.3 588.4 L659.8 583.6 L660.3 578.4 L660.8 572.9 L661.3 567.2 L661.8 561.2 L662.3 555.2 L662.8 549.2 L663.3 543.2 L663.8 537.3 L664.3 531.7 L664.8 526.4 L665.3 521.4 L665.8 516.9 L666.3 512.8 L666.8 509.3 L667.3 506.4 L667.8 504.1 L668.3 502.4 L668.8 501.4 L669.3 501.1 L669.8 501.5 L670.3 502.6 L670.8 504.3 L671.3 506.7 L671.8 509.7 L672.3 513.3 L672.8 517.5 L673.3 522.1 L673.8 527.1 L674.3 532.5 L674.8 538.1 L675.3 544.0 L675.8 550.0 L676.3 556.0 L676.8 562.0 L677.3 567.9 L677.8 573.7 L678.3 579.2 L678.8 584.3 L679.3 589.1 L679.8 593.3 L680.3 597.1 L680.8 600.3 L681.3 602.9 L681.8 604.9 L682.3 606.2 L682.8 606.8 L683.3 606.8 L683.8 606.0 L684.3 604.6 L684.8 602.5 L685.3 599.7 L685.8 596.4 L686.3 592.5 L686.8 588.1 L687.3 583.3 L687.8 578.1 L688.3 572.6 L688.8 566.8 L689.3 560.8 L689.8 554.8 L690.3 548.8 L690.8 542.8 L691.3 537.0 L691.8 531.4 L692.3 526.1 L692.8 521.1 L693.3 516.6 L693.8 512.6 L694.3 509.1 L694.8 506.2 L695.3 503.9 L695.8 502.3 L696.3 501.4 L696.8 501.1 L697.3 501.5 L697.8 502.7 L698.3 504.5 L698.8 506.9 L699.3 510.0 L699.8 513.6 L700.3 517.7 L700.8 522.4 L701.3 527.4 L701.8 532.8 L702.3 538.5 L702.8 544.4 L703.3 550.4 L703.8 556.4 L704.3 562.4 L704.8 568.3 L705.3 574.0 L705.8 579.5 L706.3 584.6 L706.8 589.3 L707.3 593.6 L707.8 597.4 L708.3 600.5 L708.8 603.1 L709.3 605.0 L709.8 606.3 L710.3 606.9 L710.8 606.7 L711.3 605.9 L711.8 604.5 L712.3 602.3 L712.8 599.5 L713.3 596.2 L713.8 592.3 L714.3 587.8 L714.8 583.0 L715.3 577.7 L715.8 572.2 L716.3 566.4 L716.8 560.4 L717.3 554.4 L717.8 548.4 L718.3 542.4 L718.8 536.6 L719.3 531.0 L719.8 525.7 L720.3 520.8 L720.8 516.3 L721.3 512.3 L721.8 508.9 L722.3 506.0 L722.8 503.8 L723.3 502.2 L723.8 501.3 L724.3 501.1 L724.8 501.6 L725.3 502.8 L725.8 504.6 L726.3 507.1 L726.8 510.2 L727.3 513.8 L727.8 518.0 L728.3 522.7 L728.8 527.8 L729.3 533.2 L729.8 538.9 L730.3 544.8 L730.8 550.8 L731.3 556.8 L731.8 562.8 L732.3 568.7 L732.8 574.4 L733.3 579.9 L733.8 585.0 L734.3 589.6 L734.8 593.9 L735.3 597.6 L735.8 600.7 L736.3 603.2 L736.8 605.1 L737.3 606.3 L737.8 606.9 L738.3 606.7 L738.8 605.9 L739.3 604.3 L739.8 602.2 L740.3 599.3 L740.8 595.9 L741.3 592.0 L741.8 587.5 L742.3 582.6 L742.8 577.4 L743.3 571.8 L743.8 566.0 L744.3 560.1 L744.8 554.0 L745.3 548.0 L745.8 542.0 L746.3 536.2 L746.8 530.6 L747.3 525.4 L747.8 520.5 L748.3 516.0 L748.8 512.1 L749.3 508.7 L749.8 505.9 L750.3 503.7 L750.8 502.1 L751.3 501.3 L751.8 501.1 L752.3 501.7 L752.8 502.9 L753.3 504.7 L753.8 507.3 L754.3 510.4 L754.8 514.1 L755.3 518.3 L755.8 523.0 L756.3 528.1 L756.8 533.6 L757.3 539.3 L757.8 545.2 L758.3 551.2 L758.8 557.2 L759.3 563.2 L759.8 569.1 L760.3 574.8 L760.8 580.2 L761.3 585.3 L761.8 589.9 L762.3 594.1 L762.8 597.8 L763.3 600.9 L763.8 603.4 L764.3 605.2 L764.8 606.4 L765.3 606.9 L765.8 606.7 L766.3 605.8 L766.8 604.2 L767.3 602.0 L767.8 599.1 L768.3 595.7 L768.8 591.7 L769.3 587.2 L769.8 582.3 L770.3 577.0 L770.8 571.4 L771.3 565.6 L771.8 559.7 L772.3 553.6 L772.8 547.6 L773.3 541.6 L773.8 535.8 L774.3 530.3 L774.8 525.0 L775.3 520.2 L775.8 515.8 L776.3 511.8 L776.8 508.5 L777.3 505.7 L777.8 503.5 L778.3 502.1 L778.8 501.3 L779.3 501.1 L779.8 501.7 L780.3 503.0 L780.8 504.9 L781.3 507.5 L781.8 510.6 L782.3 514.4 L782.8 518.6 L783.3 523.3 L783.8 528.5 L784.3 533.9 L784.8 539.6 L785.3 545.5 L785.8 551.6 L786.3 557.6 L786.8 563.6 L787.3 569.5 L787.8 575.2 L788.3 580.5 L788.8 585.6 L789.3 590.2 L789.8 594.4 L790.3 598.0 L790.8 601.1 L791.3 603.5 L791.8 605.3 L792.3 606.5 L792.8 606.9 L793.3 606.6 L793.8 605.7 L794.3 604.1 L794.8 601.8 L795.3 598.9 L795.8 595.4 L796.3 591.4 L796.8 586.9 L797.3 582.0 L797.8 576.7 L798.3 571.1 L798.8 565.2 L798.8 565.2 L798.8 554.0 M1618.0 554.0 L1618.0 598.9 L1618.5 595.4 L1619.0 591.4 L1619.5 586.9 L1620.0 581.9 L1620.5 576.6 L1621.0 571.0 L1621.5 565.2 L1622.0 559.2 L1622.5 553.2 L1623.0 547.2 L1623.5 541.2 L1624.0 535.4 L1624.5 529.9 L1625.0 524.7 L1625.5 519.9 L1626.0 515.5 L1626.5 511.6 L1627.0 508.3 L1627.5 505.5 L1628.0 503.4 L1628.5 502.0 L1629.0 501.2 L1629.5 501.2 L1630.0 501.8 L1630.5 503.1 L1631.0 505.0 L1631.5 507.7 L1632.0 510.9 L1632.5 514.7 L1633.0 518.9 L1633.5 523.7 L1634.0 528.8 L1634.5 534.3 L1635.0 540.0 L1635.5 546.0 L1636.0 552.0 L1636.5 558.0 L1637.0 564.0 L1637.5 569.9 L1638.0 575.5 L1638.5 580.9 L1639.0 585.9 L1639.5 590.5 L1640.0 594.7 L1640.5 598.3 L1641.0 601.3 L1641.5 603.7 L1642.0 605.4 L1642.5 606.5 L1643.0 606.9 L1643.5 606.6 L1644.0 605.6 L1644.5 604.0 L1645.0 601.6 L1645.5 598.7 L1646.0 595.2 L1646.5 591.1 L1647.0 586.6 L1647.5 581.6 L1648.0 576.3 L1648.5 570.7 L1649.0 564.8 L1649.5 558.8 L1650.0 552.8 L1650.5 546.8 L1651.0 540.8 L1651.5 535.1 L1652.0 529.6 L1652.5 524.4 L1653.0 519.6 L1653.5 515.2 L1654.0 511.3 L1654.5 508.1 L1655.0 505.4 L1655.5 503.3 L1656.0 501.9 L1656.5 501.2 L1657.0 501.2 L1657.5 501.8 L1658.0 503.2 L1658.5 505.2 L1659.0 507.9 L1659.5 511.1 L1660.0 514.9 L1660.5 519.2 L1661.0 524.0 L1661.5 529.2 L1662.0 534.7 L1662.5 540.4 L1663.0 546.4 L1663.5 552.4 L1664.0 558.4 L1664.5 564.4 L1665.0 570.3 L1665.5 575.9 L1666.0 581.3 L1666.5 586.3 L1667.0 590.8 L1667.5 594.9 L1668.0 598.5 L1668.5 601.5 L1669.0 603.8 L1669.5 605.5 L1670.0 606.6 L1670.5 606.9 L1671.0 606.6 L1671.5 605.5 L1672.0 603.8 L1672.5 601.5 L1673.0 598.5 L1673.5 594.9 L1674.0 590.8 L1674.5 586.3 L1675.0 581.3 L1675.5 575.9 L1676.0 570.3 L1676.5 564.4 L1677.0 558.4 L1677.5 552.4 L1678.0 546.4 L1678.5 540.4 L1679.0 534.7 L1679.5 529.2 L1680.0 524.0 L1680.5 519.3 L1681.0 514.9 L1681.5 511.1 L1682.0 507.9 L1682.5 505.2 L1683.0 503.2 L1683.5 501.8 L1684.0 501.2 L1684.5 501.2 L1685.0 501.9 L1685.5 503.3 L1686.0 505.4 L1686.5 508.0 L1687.0 511.3 L1687.5 515.2 L1688.0 519.5 L1688.5 524.4 L1689.0 529.5 L1689.5 535.1 L1690.0 540.8 L1690.5 546.8 L1691.0 552.8 L1691.5 558.8 L1692.0 564.8 L1692.5 570.6 L1693.0 576.3 L1693.5 581.6 L1694.0 586.6 L1694.5 591.1 L1695.0 595.2 L1695.5 598.7 L1696.0 601.6 L1696.5 603.9 L1697.0 605.6 L1697.5 606.6 L1698.0 606.9 L1698.5 606.5 L1699.0 605.4 L1699.5 603.7 L1700.0 601.3 L1700.5 598.3 L1701.0 594.7 L1701.5 590.5 L1702.0 585.9 L1702.5 580.9 L1703.0 575.6 L1703.5 569.9 L1704.0 564.0 L1704.5 558.0 L1705.0 552.0 L1705.5 546.0 L1706.0 540.1 L1706.5 534.3 L1707.0 528.9 L1707.5 523.7 L1708.0 519.0 L1708.5 514.7 L1709.0 510.9 L1709.5 507.7 L1710.0 505.1 L1710.5 503.1 L1711.0 501.8 L1711.5 501.2 L1712.0 501.2 L1712.5 502.0 L1713.0 503.4 L1713.5 505.5 L1714.0 508.2 L1714.5 511.6 L1715.0 515.5 L1715.5 519.8 L1716.0 524.7 L1716.5 529.9 L1717.0 535.4 L1717.5 541.2 L1718.0 547.1 L1718.5 553.2 L1719.0 559.2 L1719.5 565.2 L1720.0 571.0 L1720.5 576.6 L1721.0 581.9 L1721.5 586.9 L1722.0 591.4 L1722.5 595.4 L1723.0 598.9 L1723.5 601.8 L1724.0 604.1 L1724.5 605.7 L1725.0 606.6 L1725.5 606.9 L1726.0 606.5 L1726.5 605.3 L1727.0 603.5 L1727.5 601.1 L1728.0 598.0 L1728.5 594.4 L1729.0 590.3 L1729.5 585.6 L1730.0 580.6 L1730.5 575.2 L1731.0 569.5 L1731.5 563.6 L1732.0 557.6 L1732.5 551.6 L1733.0 545.6 L1733.5 539.7 L1734.0 534.0 L1734.5 528.5 L1735.0 523.4 L1735.5 518.7 L1736.0 514.4 L1736.5 510.7 L1737.0 507.5 L1737.5 504.9 L1738.0 503.0 L1738.5 501.7 L1739.0 501.1 L1739.5 501.3 L1740.0 502.1 L1740.5 503.5 L1741.0 505.7 L1741.5 508.5 L1742.0 511.8 L1742.5 515.7 L1743.0 520.2 L1743.5 525.0 L1744.0 530.3 L1744.5 535.8 L1745.0 541.6 L1745.5 547.5 L1746.0 553.6 L1746.5 559.6 L1747.0 565.6 L1747.5 571.4 L1748.0 577.0 L1748.5 582.3 L1749.0 587.2 L1749.5 591.7 L1750.0 595.7 L1750.5 599.1 L1751.0 602.0 L1751.5 604.2 L1752.0 605.8 L1752.5 606.7 L1753.0 606.9 L1753.5 606.4 L1754.0 605.2 L1754.5 603.4 L1755.0 600.9 L1755.5 597.8 L1756.0 594.2 L1756.5 590.0 L1757.0 585.3 L1757.5 580.2 L1758.0 574.8 L1758.5 569.1 L1759.0 563.2 L1759.5 557.2 L1760.0 551.2 L1760.5 545.2 L1761.0 539.3 L1761.5 533.6 L1762.0 528.2 L1762.5 523.1 L1763.0 518.4 L1763.5 514.1 L1764.0 510.4 L1764.5 507.3 L1765.0 504.8 L1765.5 502.9 L1766.0 501.7 L1766.5 501.1 L1767.0 501.3 L1767.5 502.1 L1768.0 503.7 L1768.5 505.8 L1769.0 508.7 L1769.5 512.1 L1770.0 516.0 L1770.5 520.5 L1771.0 525.4 L1771.5 530.6 L1772.0 536.2 L1772.5 542.0 L1773.0 547.9 L1773.5 554.0 L1774.0 560.0 L1774.5 566.0 L1775.0 571.8 L1775.5 577.3 L1776.0 582.6 L1776.5 587.5 L1777.0 592.0 L1777.5 595.9 L1778.0 599.3 L1778.5 602.1 L1779.0 604.3 L1779.5 605.9 L1780.0 606.7 L1780.5 606.9 L1781.0 606.3 L1781.5 605.1 L1782.0 603.3 L1782.5 600.7 L1783.0 597.6 L1783.5 593.9 L1784.0 589.7 L1784.5 585.0 L1785.0 579.9 L1785.5 574.5 L1786.0 568.7 L1786.3 565.2 L1786.3 554.0" stroke="#faf32c" stroke-width="1.8" fill="none" stroke-linejoin="round"/>
<path d="M906 441 V664" stroke="#0d0dc4" stroke-width="3" fill="none"/>
<path d="M1447.5 441 V664" stroke="#fff" stroke-width="1.2" fill="none"/>
<path d="M343.6 442.1 V665" stroke="#fff" stroke-width="1.15" fill="none"/>
<path d="M350.59999999999997 445.1 l3.6 4 h-7.2 Z" fill="#cfcfcf"/>
<rect x="346.2" y="451.6" width="8.8" height="203.39999999999998" fill="#c3c3c3"/>
<rect x="348.2" y="453.8" width="5" height="4.6" fill="#fff"/>
<rect x="348.2" y="649.4" width="5" height="4.6" fill="#fff"/>
<path d="M350.59999999999997 662.8 l3.6 -4.4 h-7.2 Z" fill="#cfcfcf"/>
<path d="M338.3 491.5 H343.6" stroke="#fff" stroke-width="1" fill="none"/>
<path d="M338.3 553.8 H343.6" stroke="#fff" stroke-width="1" fill="none"/>
<path d="M338.3 616.5 H343.6" stroke="#fff" stroke-width="1" fill="none"/>
<path d="M358 679.4 H1894" stroke="#fff" stroke-width="1.3" fill="none"/>
<path d="M631.3 679.4 v5.5" stroke="#fff" stroke-width="1.2" fill="none"/>
<path d="M1043.0 679.4 v5.5" stroke="#fff" stroke-width="1.2" fill="none"/>
<path d="M1454.7 679.4 v5.5" stroke="#fff" stroke-width="1.2" fill="none"/>
<path d="M1866.5 679.4 v5.5" stroke="#fff" stroke-width="1.2" fill="none"/>
<path d="M361 672.4 l4 -3.5 v7 Z" fill="#cfcfcf"/>
<path d="M1891 672.4 l-4 -3.5 v7 Z" fill="#cfcfcf"/>
<rect x="617.8" y="668.1" width="712.2" height="8.9" fill="#c6c6c6"/>
<rect x="619.8" y="670.1" width="4.1" height="4.7" fill="#fff"/>
<rect x="1323.9" y="670.1" width="4.1" height="4.7" fill="#fff"/>
<path d="M354 810 H1788" stroke="#1e781e" stroke-width="2" fill="none"/>
<rect x="657.8" y="805" width="140.2" height="9.9" fill="#008000"/>
<rect x="1648" y="805" width="139.7" height="9.9" fill="#008000"/>
<path d="M337.5 810 H339.2" stroke="#fff" stroke-width="1" fill="none"/>
<path d="M354 854 H1893.5" stroke="#1212c8" stroke-width="2" fill="none"/>
<rect x="657.8" y="849" width="140.2" height="9.9" fill="#0000ff"/>
<rect x="1648" y="849" width="139.7" height="9.9" fill="#0000ff"/>
<path d="M337.5 854 H339.2" stroke="#fff" stroke-width="1" fill="none"/>
<path d="M354 899 H1893.5" stroke="#f4f030" stroke-width="2" fill="none"/>
<rect x="657.8" y="894" width="140.2" height="9.9" fill="#ffff00"/>
<rect x="1648" y="894" width="139.7" height="9.9" fill="#ffff00"/>
<path d="M337.5 899 H339.2" stroke="#fff" stroke-width="1" fill="none"/>
<path d="M354 943 H1893.5" stroke="#e81818" stroke-width="2" fill="none"/>
<rect x="657.8" y="938" width="140.2" height="9.9" fill="#ff0000"/>
<rect x="1648" y="938" width="139.7" height="9.9" fill="#ff0000"/>
<path d="M337.5 943 H339.2" stroke="#fff" stroke-width="1" fill="none"/>
<path d="M905 764 V987" stroke="#0d0dc4" stroke-width="2.6" fill="none"/>
<path d="M1447.5 764 V987" stroke="#fff" stroke-width="1.2" fill="none"/>
<path d="M339.4 765.2 V988" stroke="#fff" stroke-width="1.15" fill="none"/>
<path d="M346.7 768.2 l3.6 4 h-7.2 Z" fill="#cfcfcf"/>
<rect x="342.3" y="774.7" width="8.8" height="203.29999999999995" fill="#c3c3c3"/>
<rect x="344.3" y="776.9000000000001" width="5" height="4.6" fill="#fff"/>
<rect x="344.3" y="972.4" width="5" height="4.6" fill="#fff"/>
<path d="M346.7 985.8 l3.6 -4.4 h-7.2 Z" fill="#cfcfcf"/>
<path d="M337.5 765.5 H339.4 M337.5 987.6 H339.4" stroke="#fff" stroke-width="1" fill="none"/>
<path d="M354 1002.4 H1894" stroke="#fff" stroke-width="1.3" fill="none"/>
<path d="M629.6 1002.4 v5.5" stroke="#fff" stroke-width="1.2" fill="none"/>
<path d="M1042.6 1002.4 v5.5" stroke="#fff" stroke-width="1.2" fill="none"/>
<path d="M1455.6 1002.4 v5.5" stroke="#fff" stroke-width="1.2" fill="none"/>
<path d="M1868.6 1002.4 v5.5" stroke="#fff" stroke-width="1.2" fill="none"/>
<path d="M357 995.4 l4 -3.5 v7 Z" fill="#cfcfcf"/>
<path d="M1891 995.4 l-4 -3.5 v7 Z" fill="#cfcfcf"/>
<rect x="614.1" y="991.1" width="717.9" height="8.9" fill="#c6c6c6"/>
<rect x="616.1" y="993.1" width="4.1" height="4.7" fill="#fff"/>
<rect x="1325.9" y="993.1" width="4.1" height="4.7" fill="#fff"/></svg>
<div class="t" style="left:316.4px;top:145px;font-size:12px;color:#f4f4f4;letter-spacing:-0.465px;">20.0</div>
<div class="t" style="left:316.4px;top:184px;font-size:12px;color:#f4f4f4;letter-spacing:-0.465px;">10.0</div>
<div class="t" style="left:322.8px;top:224px;font-size:12px;color:#f4f4f4;letter-spacing:-0.529px;">0.0</div>
<div class="t" style="left:311.7px;top:263px;font-size:12px;color:#f4f4f4;letter-spacing:-0.232px;">-10.0</div>
<div class="t" style="left:311.7px;top:303px;font-size:12px;color:#f4f4f4;letter-spacing:-0.232px;">-20.0</div>
<div class="t" style="left:316.4px;top:486px;font-size:12px;color:#f4f4f4;letter-spacing:-0.465px;">50.0</div>
<div class="t" style="left:322.8px;top:549px;font-size:12px;color:#f4f4f4;letter-spacing:-0.529px;">0.0</div>
<div class="t" style="left:311.7px;top:611px;font-size:12px;color:#f4f4f4;letter-spacing:-0.232px;">-50.0</div>
<div class="t" style="left:268px;top:229px;font-size:13.5px;font-weight:bold;letter-spacing:0.4px;-webkit-text-stroke:0.35px #fff;color:#fff;transform:translate(-50%,-50%) rotate(-90deg)">(A)</div>
<div class="t" style="left:268px;top:553px;font-size:13.5px;font-weight:bold;letter-spacing:0.4px;-webkit-text-stroke:0.35px #fff;color:#fff;transform:translate(-50%,-50%) rotate(-90deg)">(V)</div>
<div class="t" style="left:612.45px;top:365px;font-size:12px;color:#f4f4f4;letter-spacing:-0.277px;">505 ms</div>
<div class="t" style="left:1024.15px;top:365px;font-size:12px;color:#f4f4f4;letter-spacing:-0.277px;">755 ms</div>
<div class="t" style="left:1435.85px;top:365px;font-size:12px;color:#f4f4f4;letter-spacing:-0.277px;">005 ms</div>
<div class="t" style="left:1847.65px;top:365px;font-size:12px;color:#f4f4f4;letter-spacing:-0.277px;">255 ms</div>
<div class="t" style="left:612.45px;top:688px;font-size:12px;color:#f4f4f4;letter-spacing:-0.277px;">505 ms</div>
<div class="t" style="left:1024.15px;top:688px;font-size:12px;color:#f4f4f4;letter-spacing:-0.277px;">755 ms</div>
<div class="t" style="left:1435.85px;top:688px;font-size:12px;color:#f4f4f4;letter-spacing:-0.277px;">005 ms</div>
<div class="t" style="left:1847.65px;top:688px;font-size:12px;color:#f4f4f4;letter-spacing:-0.277px;">255 ms</div>
<div class="t" style="left:610.15px;top:1011px;font-size:12px;color:#f4f4f4;letter-spacing:-0.277px;">505 ms</div>
<div class="t" style="left:1023.15px;top:1011px;font-size:12px;color:#f4f4f4;letter-spacing:-0.277px;">755 ms</div>
<div class="t" style="left:1436.15px;top:1011px;font-size:12px;color:#f4f4f4;letter-spacing:-0.277px;">005 ms</div>
<div class="t" style="left:1849.15px;top:1011px;font-size:12px;color:#f4f4f4;letter-spacing:-0.277px;">255 ms</div>
<div class="a" style="left:1760.5px;top:108.4px;width:134.5px;height:63.05px;background:rgba(0,0,0,0.62)"></div>
<div class="a" style="left:1769px;top:112.2px;width:10px;height:9.6px;background:#ff0000"></div>
<div class="t" style="left:1783.6px;top:114px;font-size:10px;color:#fff;letter-spacing:-0.318px;">e1.Ip1A.Sec.Inst</div>
<div class="a" style="left:1769px;top:133.95px;width:10px;height:9.6px;background:#ffff00"></div>
<div class="t" style="left:1783.6px;top:136px;font-size:10px;color:#fff;letter-spacing:-0.349px;">e1.Ip1B.Sec.Inst</div>
<div class="a" style="left:1769px;top:155.7px;width:10px;height:9.6px;background:#0000ff"></div>
<div class="t" style="left:1783.6px;top:157px;font-size:10px;color:#fff;letter-spacing:-0.352px;">e1.Ip1C.Sec.Inst</div>
<div class="a" style="left:1760.3px;top:435.59999999999997px;width:134.70000000000005px;height:62.3px;background:rgba(0,0,0,0.62)"></div>
<div class="a" style="left:1768.8px;top:439.4px;width:10px;height:9.6px;background:#ff0000"></div>
<div class="t" style="left:1783.3999999999999px;top:441px;font-size:10px;color:#fff;letter-spacing:-0.381px;">e1.V1A.Sec.Inst</div>
<div class="a" style="left:1768.8px;top:460.9px;width:10px;height:9.6px;background:#ffff00"></div>
<div class="t" style="left:1783.3999999999999px;top:462px;font-size:10px;color:#fff;letter-spacing:-0.415px;">e1.V1B.Sec.Inst</div>
<div class="a" style="left:1768.8px;top:482.4px;width:10px;height:9.6px;background:#0000ff"></div>
<div class="t" style="left:1783.3999999999999px;top:484px;font-size:10px;color:#fff;letter-spacing:-0.418px;">e1.V1C.Sec.Inst</div>
<div class="a" style="left:1760.8px;top:758.8000000000001px;width:134.20000000000005px;height:83.39999999999999px;background:rgba(0,0,0,0.62)"></div>
<div class="a" style="left:1769.3px;top:762.6px;width:10px;height:9.6px;background:#ff0000"></div>
<div class="t" style="left:1783.8999999999999px;top:764px;font-size:10px;color:#fff;letter-spacing:-0.252px;">e1.Trip</div>
<div class="a" style="left:1769.3px;top:784.0px;width:10px;height:9.6px;background:#ffff00"></div>
<div class="t" style="left:1783.8999999999999px;top:786px;font-size:10px;color:#fff;letter-spacing:-0.177px;">e1.MBC1Zone1mhophase</div>
<div class="a" style="left:1769.3px;top:805.4px;width:10px;height:9.6px;background:#0000ff"></div>
<div class="t" style="left:1783.8999999999999px;top:807px;font-size:10px;color:#fff;letter-spacing:-0.158px;">e1.MBC2Zone2mhophase</div>
<div class="a" style="left:1769.3px;top:826.8px;width:10px;height:9.6px;background:#0b7a0b"></div>
<div class="t" style="left:1783.8999999999999px;top:828px;font-size:10px;color:#fff;letter-spacing:-0.158px;">e1.MBC3Zone3mhophase</div>
<div class="a" style="left:1111px;top:109.8px;width:483.8px;height:791px;background:#fff;border-radius:7px"></div>
<div class="a" style="left:1111px;top:109.8px;width:483.8px;height:29.7px;background:#f3f3f3;border-radius:7px 7px 0 0;border:1px solid #fff;border-bottom:none"></div>
<svg style="left:1121px;top:118px" width="12" height="12" viewBox="0 0 12 12"><rect x="0" y="0" width="7.4" height="12" fill="#6c7f94"/><rect x="7" y="0" width="5" height="12" fill="#1b2632"/><rect x="0.9" y="1" width="5.9" height="2.6" fill="#eaf4fd"/><rect x="0.9" y="4.9" width="2.2" height="2.6" fill="#eaf4fd"/><rect x="4.4" y="4.9" width="2.2" height="2.6" fill="#eaf4fd"/><rect x="0.9" y="8.7" width="2.2" height="2.4" fill="#eaf4fd"/><rect x="4.4" y="8.7" width="2.2" height="2.4" fill="#eaf4fd"/><rect x="8.7" y="1" width="2.3" height="2.6" fill="#fff"/><rect x="8.7" y="4.9" width="2.3" height="2.6" fill="#fff"/><rect x="8.7" y="8.7" width="2.3" height="2.4" fill="#fff"/></svg>
<div class="t" style="left:1141px;top:119px;font-size:12.2px;color:#8c8c8c;letter-spacing:-0.263px;">Signal Selection</div>
<svg style="left:1470px;top:114px" width="115" height="20" viewBox="0 0 115 20"><g stroke="#8a8a8a" stroke-width="1" fill="none"><path d="M6 10.5 H16"/><rect x="51.5" y="5.5" width="9" height="9" rx="1.2"/><path d="M97.2 5.2 L106.8 14.8 M106.8 5.2 L97.2 14.8" stroke="#5e5e5e"/></g></svg>
<div class="t" style="left:1131.3px;top:153px;font-size:12px;color:#1a1a1a;letter-spacing:-0.348px;">Chart:</div>
<div class="a" style="left:1167px;top:146px;width:80px;height:24.5px;border:1px solid #cfcfcf;background:#fff"></div><div class="t" style="left:1172.3px;top:153px;font-size:12px;color:#1a1a1a;letter-spacing:-0.210px;">e1 - A</div><svg style="left:1235.5px;top:156.05px" width="6" height="4" viewBox="0 0 6 4"><path d="M0 0 H6 L3 3.6 Z" fill="#555"/></svg>
<div class="a" style="left:1247px;top:146px;width:80px;height:24.5px;border:1px solid #d6d6d6;background:#fdfdfd"></div><div class="t" style="left:1265.95px;top:153px;font-size:12px;color:#1a1a1a;letter-spacing:-0.543px;">Rename</div>
<div class="a" style="left:1327px;top:146px;width:80px;height:24.5px;border:1px solid #d6d6d6;background:#fdfdfd"></div><div class="t" style="left:1345.95px;top:153px;font-size:12px;color:#1a1a1a;letter-spacing:-0.431px;">Remove</div>
<div class="a" style="left:1407px;top:146px;width:80px;height:24.5px;border:1px solid #d6d6d6;background:#fdfdfd"></div><div class="t" style="left:1436.55px;top:153px;font-size:12px;color:#1a1a1a;letter-spacing:-0.153px;">Add</div>
<div class="a" style="left:1122px;top:177.5px;width:461.5px;height:685.5px;border:1px solid #e0e0e0;border-radius:3px"></div>
<div class="t" style="left:1137.2px;top:195px;font-size:12px;color:#1a1a1a;letter-spacing:-0.432px;">Type:</div>
<div class="a" style="left:1169px;top:189.5px;width:79.5px;height:21px;border:1px solid #cfcfcf;background:#fff"></div><div class="t" style="left:1174.3px;top:195px;font-size:12px;color:#1a1a1a;letter-spacing:0.087px;">Analog</div><svg style="left:1237.0px;top:197.8px" width="6" height="4" viewBox="0 0 6 4"><path d="M0 0 H6 L3 3.6 Z" fill="#555"/></svg>
<div class="t" style="left:1287.9px;top:195px;font-size:12px;color:#1a1a1a;letter-spacing:-0.252px;">Angle Reference:</div>
<div class="a" style="left:1382px;top:191px;width:80px;height:17.5px;border:1px solid #b9b9b9;background:#fff"></div>
<div class="a" style="left:1467.5px;top:187.5px;width:35px;height:25px;border:1px solid #e6e6e6;background:#fbfbfb"></div><div class="t" style="left:1476.9px;top:195px;font-size:12px;color:#a8a8a8;letter-spacing:-0.605px;">Set</div>
<div class="a" style="left:1128.5px;top:224.5px;width:449px;height:419px;border:1px solid #e0e0e0;border-radius:3px"></div>
<div class="a" style="left:1134.4px;top:233.4px;width:146.6px;height:225px;border:1px solid #e0e0e0;border-radius:3px"></div><div class="a" style="left:1140.4px;top:231.4px;width:59.4px;height:5px;background:#fff"></div><div class="t" style="left:1142.4px;top:228px;font-size:12px;color:#1a1a1a;letter-spacing:-0.451px;">Event Files</div>
<div class="a" style="left:1139.5px;top:241.5px;width:136.5px;height:153px;border:1px solid #d4d4d4;background:#fff"></div>
<div class="a" style="left:1140px;top:242px;width:135.5px;height:30.5px;border-bottom:1px solid #4a9fd0;background:#fff"></div>
<div class="a" style="left:1181px;top:242px;width:1px;height:30px;background:#4a9fd0"></div>
<div class="a" style="left:1275px;top:242px;width:1px;height:30px;background:#4a9fd0"></div>
<div class="t" style="left:1145.3px;top:252px;font-size:12px;color:#777;font-weight:bold;letter-spacing:-0.100px;">ID</div>
<svg style="left:1168px;top:251px" width="9" height="11" viewBox="0 0 9 11"><path d="M0.2 0.3 H8.1 L5.2 4.9 V10.4 L3.1 9 V4.9 Z" fill="#6a6a6a"/></svg>
<div class="t" style="left:1187px;top:252px;font-size:12px;color:#777;font-weight:bold;letter-spacing:-0.045px;">File Name</div>
<svg style="left:1261.5px;top:251px" width="9" height="11" viewBox="0 0 9 11"><path d="M0.2 0.3 H8.1 L5.2 4.9 V10.4 L3.1 9 V4.9 Z" fill="#6a6a6a"/></svg>
<div class="a" style="left:1140px;top:274px;width:135.5px;height:24.5px;background:#e4f0fa"></div>
<div class="t" style="left:1145.3px;top:281px;font-size:12px;color:#1a1a1a;letter-spacing:-0.780px;">e1</div>
<div class="t" style="left:1187px;top:281px;font-size:12px;color:#1a1a1a;letter-spacing:-0.186px;">L6-Weber</div>
<div class="a" style="left:1158px;top:400px;width:99.8px;height:21.8px;border:1px solid #e6e6e6;background:#fbfbfb"></div><div class="t" style="left:1182.15px;top:406px;font-size:12px;color:#a8a8a8;letter-spacing:-0.431px;">Reference</div>
<div class="a" style="left:1158px;top:427px;width:99.8px;height:21.6px;border:1px solid #d6d6d6;background:#fdfdfd"></div><div class="t" style="left:1173.35px;top:433px;font-size:12px;color:#1a1a1a;letter-spacing:0.122px;">Identification</div>
<div class="a" style="left:1134.4px;top:469.6px;width:146.6px;height:168px;border:1px solid #e0e0e0;border-radius:3px"></div><div class="a" style="left:1140.4px;top:467.6px;width:69.9px;height:5px;background:#fff"></div><div class="t" style="left:1142.4px;top:464px;font-size:12px;color:#1a1a1a;letter-spacing:-0.300px;">Signal Types</div>
<div class="a" style="left:1139.5px;top:477px;width:137px;height:156px;border:1px solid #d4d4d4;background:#fff"></div>
<div class="a" style="left:1141px;top:523.5px;width:134px;height:20px;background:#d2d2d2;border:1px solid #bdbdbd"></div>
<div class="t" style="left:1144.4px;top:485px;font-size:12px;color:#1a1a1a;letter-spacing:-0.124px;">Instantaneous</div>
<div class="t" style="left:1144.4px;top:507px;font-size:12px;color:#1a1a1a;letter-spacing:-1.057px;">RMS</div>
<div class="t" style="left:1144.4px;top:528px;font-size:12px;color:#1a1a1a;letter-spacing:-0.455px;">Phasor</div>
<div class="t" style="left:1144.4px;top:550px;font-size:12px;color:#1a1a1a;letter-spacing:-0.278px;">Frequency</div>
<div class="t" style="left:1144.4px;top:572px;font-size:12px;color:#1a1a1a;letter-spacing:-0.184px;">Harmonics</div>
<div class="t" style="left:1144.4px;top:594px;font-size:12px;color:#1a1a1a;letter-spacing:-0.423px;">Power</div>
<div class="t" style="left:1144.4px;top:616px;font-size:12px;color:#1a1a1a;letter-spacing:-0.134px;">User-Defined</div>
<div class="a" style="left:1284.4px;top:233.4px;width:287.6px;height:404px;border:1px solid #e0e0e0;border-radius:3px"></div><div class="a" style="left:1290.4px;top:231.4px;width:41.6px;height:5px;background:#fff"></div><div class="t" style="left:1292.4px;top:228px;font-size:12px;color:#1a1a1a;letter-spacing:-0.394px;">Signals</div>
<div class="a" style="left:1323px;top:246.5px;width:100px;height:21px;border:1px solid #d6d6d6;background:#fdfdfd"></div><div class="t" style="left:1353.1px;top:252px;font-size:12px;color:#1a1a1a;letter-spacing:-0.221px;">Primary</div>
<div class="a" style="left:1433px;top:246.5px;width:100px;height:21px;border:1px solid #d6d6d6;background:#fdfdfd"></div><div class="t" style="left:1472.65px;top:252px;font-size:12px;color:#1a1a1a;letter-spacing:-0.220px;">Ang</div>
<div class="a" style="left:1289.5px;top:273px;width:277.5px;height:360px;border:1px solid #d4d4d4;background:#fff"></div>
<div class="a" style="left:1290px;top:273.5px;width:264px;height:31px;border-bottom:1px solid #4a9fd0"></div>
<div class="a" style="left:1327px;top:274px;width:1px;height:30px;background:#4a9fd0"></div>
<div class="a" style="left:1414px;top:274px;width:1px;height:30px;background:#4a9fd0"></div>
<div class="a" style="left:1476px;top:274px;width:1px;height:30px;background:#4a9fd0"></div>
<div class="a" style="left:1529px;top:274px;width:1px;height:30px;background:#4a9fd0"></div>
<div class="t" style="left:1295.3px;top:284px;font-size:12px;color:#777;font-weight:bold;letter-spacing:-0.276px;">Add</div>
<div class="t" style="left:1333px;top:284px;font-size:12px;color:#777;font-weight:bold;letter-spacing:-0.292px;">Channel</div>
<svg style="left:1400px;top:283px" width="9" height="11" viewBox="0 0 9 11"><path d="M0.2 0.3 H8.1 L5.2 4.9 V10.4 L3.1 9 V4.9 Z" fill="#6a6a6a"/></svg>
<div class="t" style="left:1420.5px;top:284px;font-size:12px;color:#777;font-weight:bold;letter-spacing:-0.632px;">Phase</div>
<svg style="left:1462px;top:283px" width="9" height="11" viewBox="0 0 9 11"><path d="M0.2 0.3 H8.1 L5.2 4.9 V10.4 L3.1 9 V4.9 Z" fill="#6a6a6a"/></svg>
<div class="t" style="left:1482.3px;top:284px;font-size:12px;color:#777;font-weight:bold;letter-spacing:0.043px;">Unit</div>
<svg style="left:1515px;top:283px" width="9" height="11" viewBox="0 0 9 11"><path d="M0.2 0.3 H8.1 L5.2 4.9 V10.4 L3.1 9 V4.9 Z" fill="#6a6a6a"/></svg>
<div class="a" style="left:1534px;top:276px;width:20px;height:26px;overflow:hidden"><div class="t" style="left:1px;top:8px;font-size:12px;color:#777;font-weight:bold">Sign</div></div>
<div class="a" style="left:1295px;top:307.7px;width:27.5px;height:20.8px;border:1px solid #d6d6d6;background:#fdfdfd"></div><div class="t" style="left:1298.3px;top:313px;font-size:12px;color:#1a1a1a;letter-spacing:-0.153px;">Add</div>
<div class="t" style="left:1333px;top:313px;font-size:12px;color:#1a1a1a;letter-spacing:-0.147px;">Ip1A</div>
<div class="t" style="left:1420.5px;top:313px;font-size:12px;color:#1a1a1a;letter-spacing:-0.25px;">A</div>
<div class="t" style="left:1482.3px;top:313px;font-size:12px;color:#1a1a1a;letter-spacing:-0.25px;">A</div>
<div class="a" style="left:1534px;top:311px;width:20px;height:16px;overflow:hidden"><div class="t" style="left:1.2px;top:2px;font-size:12px;color:#1a1a1a;letter-spacing:-0.25px">e1.I</div></div>
<div class="a" style="left:1295px;top:333.7px;width:27.5px;height:20.8px;border:1px solid #d6d6d6;background:#fdfdfd"></div><div class="t" style="left:1298.3px;top:339px;font-size:12px;color:#1a1a1a;letter-spacing:-0.153px;">Add</div>
<div class="t" style="left:1333px;top:339px;font-size:12px;color:#1a1a1a;letter-spacing:-0.299px;">Ip1A,Ip1B,Ip1C</div>
<div class="t" style="left:1420.5px;top:339px;font-size:12px;color:#1a1a1a;letter-spacing:-0.25px;">A</div>
<div class="t" style="left:1482.3px;top:339px;font-size:12px;color:#1a1a1a;letter-spacing:-0.25px;">A</div>
<div class="a" style="left:1534px;top:337px;width:20px;height:16px;overflow:hidden"><div class="t" style="left:1.2px;top:2px;font-size:12px;color:#1a1a1a;letter-spacing:-0.25px">e1.I</div></div>
<div class="a" style="left:1295px;top:359.7px;width:27.5px;height:20.8px;border:1px solid #d6d6d6;background:#fdfdfd"></div><div class="t" style="left:1298.3px;top:365px;font-size:12px;color:#1a1a1a;letter-spacing:-0.153px;">Add</div>
<div class="t" style="left:1333px;top:365px;font-size:12px;color:#1a1a1a;letter-spacing:-0.299px;">Ip1A,Ip1B,Ip1C</div>
<div class="t" style="left:1420.5px;top:365px;font-size:12px;color:#1a1a1a;letter-spacing:-0.25px;">A</div>
<div class="t" style="left:1482.3px;top:365px;font-size:12px;color:#1a1a1a;letter-spacing:-0.25px;">A</div>
<div class="a" style="left:1534px;top:363px;width:20px;height:16px;overflow:hidden"><div class="t" style="left:1.2px;top:2px;font-size:12px;color:#1a1a1a;letter-spacing:-0.25px">e1.I</div></div>
<div class="a" style="left:1295px;top:385.7px;width:27.5px;height:20.8px;border:1px solid #d6d6d6;background:#fdfdfd"></div><div class="t" style="left:1298.3px;top:391px;font-size:12px;color:#1a1a1a;letter-spacing:-0.153px;">Add</div>
<div class="t" style="left:1333px;top:391px;font-size:12px;color:#1a1a1a;letter-spacing:-0.299px;">Ip1A,Ip1B,Ip1C</div>
<div class="t" style="left:1420.5px;top:391px;font-size:12px;color:#1a1a1a;letter-spacing:-0.25px;">A</div>
<div class="t" style="left:1482.3px;top:391px;font-size:12px;color:#1a1a1a;letter-spacing:-0.25px;">A</div>
<div class="a" style="left:1534px;top:389px;width:20px;height:16px;overflow:hidden"><div class="t" style="left:1.2px;top:2px;font-size:12px;color:#1a1a1a;letter-spacing:-0.25px">e1.I</div></div>
<div class="a" style="left:1295px;top:411.7px;width:27.5px;height:20.8px;border:1px solid #d6d6d6;background:#fdfdfd"></div><div class="t" style="left:1298.3px;top:417px;font-size:12px;color:#1a1a1a;letter-spacing:-0.153px;">Add</div>
<div class="t" style="left:1333px;top:417px;font-size:12px;color:#1a1a1a;letter-spacing:-0.422px;">Ip1B</div>
<div class="t" style="left:1420.5px;top:417px;font-size:12px;color:#1a1a1a;letter-spacing:-0.25px;">B</div>
<div class="t" style="left:1482.3px;top:417px;font-size:12px;color:#1a1a1a;letter-spacing:-0.25px;">A</div>
<div class="a" style="left:1534px;top:415px;width:20px;height:16px;overflow:hidden"><div class="t" style="left:1.2px;top:2px;font-size:12px;color:#1a1a1a;letter-spacing:-0.25px">e1.I</div></div>
<div class="a" style="left:1295px;top:437.7px;width:27.5px;height:20.8px;border:1px solid #d6d6d6;background:#fdfdfd"></div><div class="t" style="left:1298.3px;top:443px;font-size:12px;color:#1a1a1a;letter-spacing:-0.153px;">Add</div>
<div class="t" style="left:1333px;top:443px;font-size:12px;color:#1a1a1a;letter-spacing:-0.465px;">Ip1C</div>
<div class="t" style="left:1420.5px;top:443px;font-size:12px;color:#1a1a1a;letter-spacing:-0.25px;">C</div>
<div class="t" style="left:1482.3px;top:443px;font-size:12px;color:#1a1a1a;letter-spacing:-0.25px;">A</div>
<div class="a" style="left:1534px;top:441px;width:20px;height:16px;overflow:hidden"><div class="t" style="left:1.2px;top:2px;font-size:12px;color:#1a1a1a;letter-spacing:-0.25px">e1.I</div></div>
<div class="a" style="left:1295px;top:463.7px;width:27.5px;height:20.8px;border:1px solid #d6d6d6;background:#fdfdfd"></div><div class="t" style="left:1298.3px;top:469px;font-size:12px;color:#1a1a1a;letter-spacing:-0.153px;">Add</div>
<div class="t" style="left:1333px;top:469px;font-size:12px;color:#1a1a1a;letter-spacing:-0.354px;">Ig1G</div>
<div class="t" style="left:1420.5px;top:469px;font-size:12px;color:#1a1a1a;letter-spacing:-0.25px;">G</div>
<div class="t" style="left:1482.3px;top:469px;font-size:12px;color:#1a1a1a;letter-spacing:-0.25px;">A</div>
<div class="a" style="left:1534px;top:467px;width:20px;height:16px;overflow:hidden"><div class="t" style="left:1.2px;top:2px;font-size:12px;color:#1a1a1a;letter-spacing:-0.25px">e1.I</div></div>
<div class="a" style="left:1295px;top:489.7px;width:27.5px;height:20.8px;border:1px solid #d6d6d6;background:#fdfdfd"></div><div class="t" style="left:1298.3px;top:495px;font-size:12px;color:#1a1a1a;letter-spacing:-0.153px;">Add</div>
<div class="t" style="left:1333px;top:495px;font-size:12px;color:#1a1a1a;letter-spacing:-0.396px;">V1A</div>
<div class="t" style="left:1420.5px;top:495px;font-size:12px;color:#1a1a1a;letter-spacing:-0.25px;">A</div>
<div class="t" style="left:1482.3px;top:495px;font-size:12px;color:#1a1a1a;letter-spacing:-0.25px;">V</div>
<div class="a" style="left:1534px;top:493px;width:20px;height:16px;overflow:hidden"><div class="t" style="left:1.2px;top:2px;font-size:12px;color:#1a1a1a;letter-spacing:-0.25px">e1.V</div></div>
<div class="a" style="left:1295px;top:515.6999999999999px;width:27.5px;height:20.8px;border:1px solid #d6d6d6;background:#fdfdfd"></div><div class="t" style="left:1298.3px;top:521px;font-size:12px;color:#1a1a1a;letter-spacing:-0.153px;">Add</div>
<div class="t" style="left:1333px;top:521px;font-size:12px;color:#1a1a1a;letter-spacing:-0.598px;">V1A,V1B,V1C</div>
<div class="t" style="left:1420.5px;top:521px;font-size:12px;color:#1a1a1a;letter-spacing:-0.25px;">A</div>
<div class="t" style="left:1482.3px;top:521px;font-size:12px;color:#1a1a1a;letter-spacing:-0.25px;">V</div>
<div class="a" style="left:1534px;top:519px;width:20px;height:16px;overflow:hidden"><div class="t" style="left:1.2px;top:2px;font-size:12px;color:#1a1a1a;letter-spacing:-0.25px">e1.V</div></div>
<div class="a" style="left:1295px;top:541.6999999999999px;width:27.5px;height:20.8px;border:1px solid #d6d6d6;background:#fdfdfd"></div><div class="t" style="left:1298.3px;top:547px;font-size:12px;color:#1a1a1a;letter-spacing:-0.153px;">Add</div>
<div class="t" style="left:1333px;top:547px;font-size:12px;color:#1a1a1a;letter-spacing:-0.598px;">V1A,V1B,V1C</div>
<div class="t" style="left:1420.5px;top:547px;font-size:12px;color:#1a1a1a;letter-spacing:-0.25px;">A</div>
<div class="t" style="left:1482.3px;top:547px;font-size:12px;color:#1a1a1a;letter-spacing:-0.25px;">V</div>
<div class="a" style="left:1534px;top:545px;width:20px;height:16px;overflow:hidden"><div class="t" style="left:1.2px;top:2px;font-size:12px;color:#1a1a1a;letter-spacing:-0.25px">e1.V</div></div>
<div class="a" style="left:1295px;top:567.6999999999999px;width:27.5px;height:20.8px;border:1px solid #d6d6d6;background:#fdfdfd"></div><div class="t" style="left:1298.3px;top:573px;font-size:12px;color:#1a1a1a;letter-spacing:-0.153px;">Add</div>
<div class="t" style="left:1333px;top:573px;font-size:12px;color:#1a1a1a;letter-spacing:-0.598px;">V1A,V1B,V1C</div>
<div class="t" style="left:1420.5px;top:573px;font-size:12px;color:#1a1a1a;letter-spacing:-0.25px;">A</div>
<div class="t" style="left:1482.3px;top:573px;font-size:12px;color:#1a1a1a;letter-spacing:-0.25px;">V</div>
<div class="a" style="left:1534px;top:571px;width:20px;height:16px;overflow:hidden"><div class="t" style="left:1.2px;top:2px;font-size:12px;color:#1a1a1a;letter-spacing:-0.25px">e1.V</div></div>
<div class="a" style="left:1295px;top:593.6999999999999px;width:27.5px;height:20.8px;border:1px solid #d6d6d6;background:#fdfdfd"></div><div class="t" style="left:1298.3px;top:599px;font-size:12px;color:#1a1a1a;letter-spacing:-0.153px;">Add</div>
<div class="t" style="left:1333px;top:599px;font-size:12px;color:#1a1a1a;letter-spacing:-0.763px;">V1B</div>
<div class="t" style="left:1420.5px;top:599px;font-size:12px;color:#1a1a1a;letter-spacing:-0.25px;">B</div>
<div class="t" style="left:1482.3px;top:599px;font-size:12px;color:#1a1a1a;letter-spacing:-0.25px;">V</div>
<div class="a" style="left:1534px;top:597px;width:20px;height:16px;overflow:hidden"><div class="t" style="left:1.2px;top:2px;font-size:12px;color:#1a1a1a;letter-spacing:-0.25px">e1.V</div></div>
<div class="a" style="left:1295.5px;top:620px;width:27.5px;height:2px;border-top:1px solid #d0d0d0"></div>
<svg style="left:1555px;top:274px" width="12" height="360" viewBox="0 0 12 360"><path d="M2.2 8.8 L5 5.6 L7.8 8.8 Z" fill="#7a7a7a"/><rect x="3.8" y="14" width="2.6" height="300" rx="1.3" fill="#cacaca"/><path d="M2.2 338.6 L5 341.8 L7.8 338.6 Z" fill="#7a7a7a"/></svg>
<svg style="left:1290px;top:621px" width="266" height="12" viewBox="0 0 266 12"><path d="M7.8 3.2 L4.6 6 L7.8 8.8 Z" fill="#555"/><rect x="12" y="4.8" width="168" height="2.6" rx="1.3" fill="#cacaca"/><path d="M255.6 3.2 L258.8 6 L255.6 8.8 Z" fill="#555"/></svg>
<div class="a" style="left:1128.5px;top:656.5px;width:449px;height:200.5px;border:1px solid #e0e0e0;border-radius:3px"></div><div class="a" style="left:1134.0px;top:654.5px;width:106.7px;height:5px;background:#fff"></div><div class="t" style="left:1136.0px;top:650px;font-size:12px;color:#1a1a1a;letter-spacing:-0.124px;">Selected Quantities</div>
<div class="a" style="left:1133px;top:663px;width:440px;height:156.5px;border:1px solid #d4d4d4;background:#fff"></div>
<div class="a" style="left:1133.5px;top:663.5px;width:439px;height:31.5px;border-bottom:1px solid #4a9fd0"></div>
<div class="a" style="left:1191px;top:664px;width:1px;height:30px;background:#4a9fd0"></div>
<div class="a" style="left:1244px;top:664px;width:1px;height:30px;background:#4a9fd0"></div>
<div class="a" style="left:1337px;top:664px;width:1px;height:30px;background:#4a9fd0"></div>
<div class="t" style="left:1139.3px;top:674px;font-size:12px;color:#777;font-weight:bold;letter-spacing:-0.315px;">Remove</div>
<div class="t" style="left:1197.6px;top:674px;font-size:12px;color:#777;font-weight:bold;letter-spacing:-0.309px;">Color</div>
<div class="t" style="left:1250.6px;top:674px;font-size:12px;color:#777;font-weight:bold;letter-spacing:0.000px;">ID</div>
<div class="a" style="left:1139px;top:697.5px;width:47.5px;height:20.8px;border:1px solid #d6d6d6;background:#fdfdfd"></div><div class="t" style="left:1142.0px;top:703px;font-size:12px;color:#1a1a1a;letter-spacing:-0.531px;">Remove</div>
<div class="a" style="left:1197px;top:697.5px;width:43px;height:20.8px;border:1px solid #d6d6d6;background:#fdfdfd"></div>
<div class="a" style="left:1224px;top:698.5px;width:1px;height:18.8px;background:#dcdcdc"></div>
<div class="t" style="left:1207px;top:699px;font-family:'Liberation Serif',serif;font-size:11.5px;font-weight:bold;color:#44587e">A</div>
<div class="a" style="left:1203px;top:712.1px;width:16px;height:4.5px;background:#e81010"></div>
<svg style="left:1229px;top:705.9px" width="6" height="4" viewBox="0 0 6 4"><path d="M0 0 H6 L3 3.6 Z" fill="#666"/></svg>
<div class="t" style="left:1250.6px;top:703px;font-size:12px;color:#1a1a1a;letter-spacing:-0.379px;">e1.Ip1A.Sec.Inst</div>
<div class="a" style="left:1139px;top:723.5px;width:47.5px;height:20.8px;border:1px solid #d6d6d6;background:#fdfdfd"></div><div class="t" style="left:1142.0px;top:729px;font-size:12px;color:#1a1a1a;letter-spacing:-0.531px;">Remove</div>
<div class="a" style="left:1197px;top:723.5px;width:43px;height:20.8px;border:1px solid #d6d6d6;background:#fdfdfd"></div>
<div class="a" style="left:1224px;top:724.5px;width:1px;height:18.8px;background:#dcdcdc"></div>
<div class="t" style="left:1207px;top:725px;font-family:'Liberation Serif',serif;font-size:11.5px;font-weight:bold;color:#44587e">A</div>
<div class="a" style="left:1203px;top:738.1px;width:16px;height:4.5px;background:#f6f01e"></div>
<svg style="left:1229px;top:731.9px" width="6" height="4" viewBox="0 0 6 4"><path d="M0 0 H6 L3 3.6 Z" fill="#666"/></svg>
<div class="t" style="left:1250.6px;top:729px;font-size:12px;color:#1a1a1a;letter-spacing:-0.379px;">e1.Ip1B.Sec.Inst</div>
<div class="a" style="left:1139px;top:749.5px;width:47.5px;height:20.8px;border:1px solid #d6d6d6;background:#fdfdfd"></div><div class="t" style="left:1142.0px;top:755px;font-size:12px;color:#1a1a1a;letter-spacing:-0.531px;">Remove</div>
<div class="a" style="left:1197px;top:749.5px;width:43px;height:20.8px;border:1px solid #d6d6d6;background:#fdfdfd"></div>
<div class="a" style="left:1224px;top:750.5px;width:1px;height:18.8px;background:#dcdcdc"></div>
<div class="t" style="left:1207px;top:751px;font-family:'Liberation Serif',serif;font-size:11.5px;font-weight:bold;color:#44587e">A</div>
<div class="a" style="left:1203px;top:764.1px;width:16px;height:4.5px;background:#0a12e0"></div>
<svg style="left:1229px;top:757.9px" width="6" height="4" viewBox="0 0 6 4"><path d="M0 0 H6 L3 3.6 Z" fill="#666"/></svg>
<div class="t" style="left:1250.6px;top:755px;font-size:12px;color:#1a1a1a;letter-spacing:-0.420px;">e1.Ip1C.Sec.Inst</div>
<div class="a" style="left:1138.5px;top:825.5px;width:99.5px;height:21px;border:1px solid #d6d6d6;background:#fdfdfd"></div><div class="t" style="left:1168.4px;top:831px;font-size:12px;color:#1a1a1a;letter-spacing:-0.235px;">Primary</div>
<div class="a" style="left:1420px;top:869.5px;width:79.5px;height:21px;border:1px solid #e6e6e6;background:#fbfbfb"></div><div class="t" style="left:1444.7px;top:875px;font-size:12px;color:#a8a8a8;letter-spacing:0.014px;">Apply</div>
<div class="a" style="left:1505.5px;top:869.5px;width:79.5px;height:21px;border:1px solid #d6d6d6;background:#fdfdfd"></div><div class="t" style="left:1528.0px;top:875px;font-size:12px;color:#1a1a1a;letter-spacing:-0.477px;">Cancel</div>
</body></html>
